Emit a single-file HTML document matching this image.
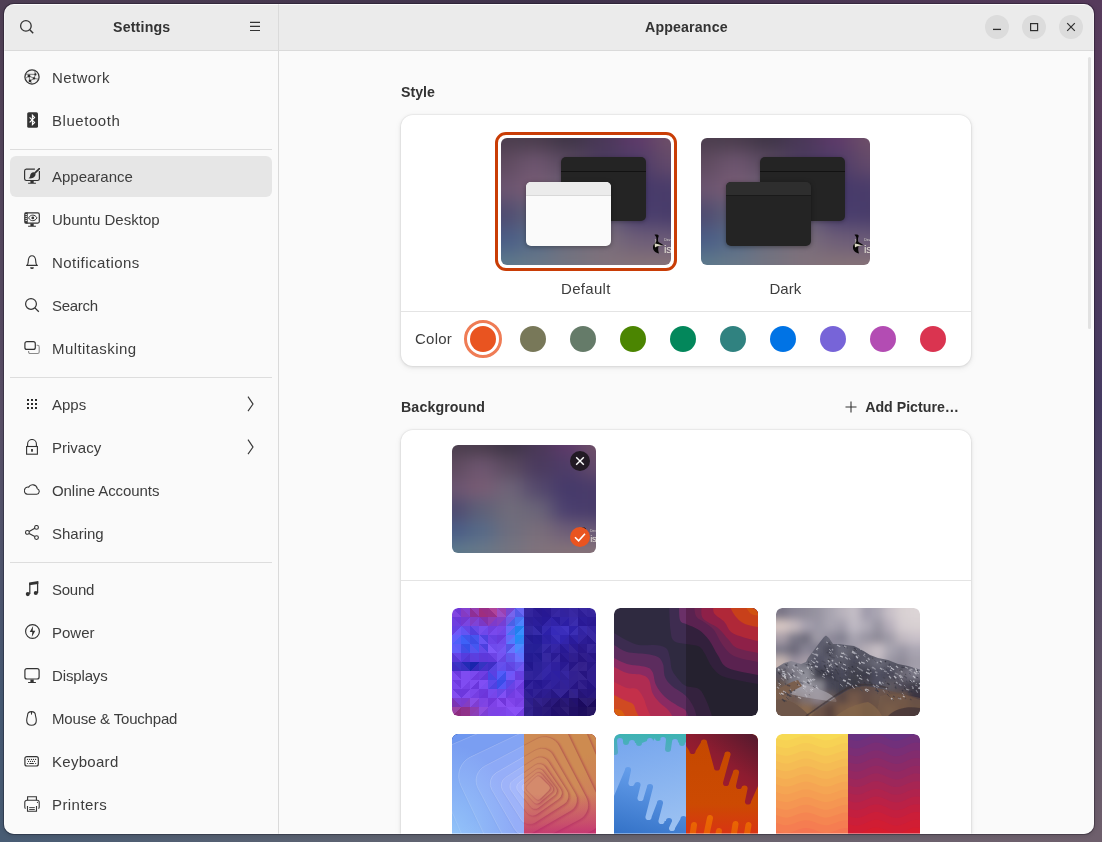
<!DOCTYPE html>
<html><head><meta charset="utf-8">
<style>
*{box-sizing:border-box;margin:0;padding:0}
html,body{width:1102px;height:842px;overflow:hidden}
body{position:relative;font-family:"Liberation Sans",sans-serif;color:#3d3d3d;background:#50465e}
.a{position:absolute}
.shadow{position:absolute;left:4px;top:4px;width:1090px;height:830px;border-radius:10px;box-shadow:0 0 0 1px rgba(10,5,20,0.3),0 1px 4px 1px rgba(0,0,0,0.12)}
.hi{position:absolute;left:4px;top:4px;width:1090px;height:830px;border-radius:10px;box-shadow:inset 0 0 0 1px rgba(255,255,255,0.38)}
.win{will-change:transform;position:absolute;left:0;top:0;width:1102px;height:842px;clip-path:inset(4px 8px 8px 4px round 10px);background:#fafafa}
.hdr{left:4px;top:4px;width:1090px;height:46px;background:#ebebeb}
.hline{left:4px;top:50px;width:1090px;height:1px;background:#dadada}
.vline{left:278px;top:4px;width:1px;height:830px;background:#dadada}
.toplight{left:4px;top:4px;width:1090px;height:1px;background:rgba(255,255,255,0.8)}
.title{font-weight:bold;font-size:14.2px;line-height:20px;white-space:nowrap;color:#333}
.item{left:52px;font-size:15px;line-height:20px;white-space:nowrap;color:#3d3d3d}
.ico{position:absolute;left:24px;width:16px;height:16px}
.sep{left:10px;width:262px;height:1px;background:#dddddd}
.sel{left:10px;top:156px;width:262px;height:41px;border-radius:6px;background:#e6e6e6}
.wbtn{position:absolute;width:24px;height:24px;border-radius:12px;background:#dcdcdc;top:15px}
.card{position:absolute;left:401px;width:570px;background:#fff;border-radius:12px;box-shadow:0 0 0 1px rgba(0,0,6,0.03),0 1px 3px 1px rgba(0,0,6,0.07),0 2px 6px 2px rgba(0,0,6,0.03)}
.dot{position:absolute;width:26px;height:26px;border-radius:13px;top:326px}
.thumb{position:absolute;width:144px;height:108px;border-radius:6px;overflow:hidden;clip-path:inset(0 round 6px)}
.mini{position:absolute;width:85px;height:64px;border-radius:5px;overflow:hidden}
.lbl{position:absolute;font-size:15px;line-height:20px;white-space:nowrap;color:#3d3d3d}
</style></head>
<body>
<!--WPSYM-->

  <!--/WPSYM-->
<div class="a" style="left:0;top:0;width:1102px;height:12px;background:linear-gradient(90deg,#4f3f55 0%,#40334c 50%,#563b5c 100%)"></div>
<div class="a" style="left:0;top:0;width:12px;height:842px;background:linear-gradient(180deg,#4f3f55 0%,#574b63 40%,#5a5068 50%,#465a74 83%,#485c74 100%)"></div>
<div class="a" style="left:1090px;top:0;width:12px;height:842px;background:linear-gradient(180deg,#563b5c 0%,#5a3d5e 12%,#453a62 48%,#625468 83%,#6e5f6c 100%)"></div>
<div class="a" style="left:0;top:830px;width:1102px;height:12px;background:linear-gradient(90deg,#485c74 0%,#686670 50%,#6e5f6c 100%)"></div>
<div class="shadow"></div>
<div class="win">
  <div class="a hdr"></div>
  <div class="a toplight"></div>
  <div class="a hline"></div>
  <div class="a vline"></div>

  <!-- sidebar header -->
  <svg class="a" style="left:18px;top:18px" width="18" height="18" viewBox="0 0 18 18"><circle cx="7.9" cy="7.9" r="5.3" fill="none" stroke="#333" stroke-width="1.3"/><path d="M11.8 11.8 L15.2 15.2" stroke="#333" stroke-width="1.5"/></svg>
  <div class="a title" style="left:113px;top:17px;letter-spacing:0.18px">Settings</div>
  <svg class="a" style="left:248px;top:20px" width="14" height="14" viewBox="0 0 14 14"><path d="M2 2.4h10M2 6.4h10M2 10.5h10" stroke="#333" stroke-width="1.2"/></svg>

  <!-- content header -->
  <div class="a title" style="left:645px;top:17px;letter-spacing:0.15px">Appearance</div>
  <div class="wbtn" style="left:985px"></div>
  <div class="wbtn" style="left:1022px"></div>
  <div class="wbtn" style="left:1059px"></div>
  <svg class="a" style="left:985px;top:15px" width="24" height="24"><path d="M8 14.4h8" stroke="#2e2e2e" stroke-width="1.3"/></svg>
  <svg class="a" style="left:1022px;top:15px" width="24" height="24"><rect x="8.6" y="8.6" width="7" height="7" fill="none" stroke="#2e2e2e" stroke-width="1.2"/></svg>
  <svg class="a" style="left:1059px;top:15px" width="24" height="24"><path d="M8.2 8.2L15.8 15.8M15.8 8.2L8.2 15.8" stroke="#2e2e2e" stroke-width="1.2"/></svg>

  <!-- SIDEBAR -->
  <div class="a sel"></div>
  <div class="a sep" style="top:149px"></div>
  <div class="a sep" style="top:377px"></div>
  <div class="a sep" style="top:562px"></div>
  <!--ITEMS-->
  <svg class="ico" style="top:69px" width="16" height="16" viewBox="0 0 16 16"><circle cx="8" cy="7.9" r="7.1" fill="#f0f0f0" stroke="#333" stroke-width="1.25"/><path d="M1.2 5.2 L11.4 5.4 M4.9 6.9 L10 9.4 L11.4 5.4 M4.9 6.9 L6 11.9 L10 9.4 M6 11.9 L8 14.8 M11.4 5.4 L10.6 1.2 M10 9.4 L14.6 10.2 M4.9 6.9 L1.4 9.6" stroke="#5a5a5a" stroke-width="0.8" fill="none"/><rect x="3.7" y="5.7" width="2.5" height="2.5" fill="#2a2a2a"/><rect x="4.8" y="10.7" width="2.4" height="2.4" fill="#2a2a2a"/><rect x="8.9" y="8.4" width="2.2" height="2" fill="#2a2a2a"/><circle cx="11.4" cy="5.4" r="1.1" fill="#2a2a2a"/></svg>
  <div class="a item" style="top:68px;letter-spacing:0.4px">Network</div>
  <svg class="ico" style="top:112px" width="16" height="16" viewBox="0 0 16 16"><rect x="3.2" y="0.2" width="10.8" height="15.6" rx="1.6" fill="#333"/><path d="M5.6 5.4 L10.6 10.4 L8.4 12.6 V3.2 L10.6 5.4 L5.6 10.4" stroke="#fff" stroke-width="1.1" fill="none"/></svg>
  <div class="a item" style="top:111px;letter-spacing:0.55px">Bluetooth</div>
  <svg class="ico" style="top:168px" width="16" height="16" viewBox="0 0 16 16"><path d="M10.9 1.2 H2.3 A1.8 1.8 0 0 0 0.6 3 V10.8 A1.8 1.8 0 0 0 2.3 12.5 H13.6 A1.8 1.8 0 0 0 15.4 10.8 V3" stroke="#333" stroke-width="1.2" fill="none"/><path d="M6.4 12.5 H9.7 V14.8 H6.4Z M4.1 14.8 H11.9 V15.8 H4.1Z" fill="#333"/><path d="M15.5 0.5 L11.3 4.7" stroke="#333" stroke-width="1.7" stroke-linecap="round"/><path d="M10.7 4.5 C8.6 3.5 6.3 5.1 6.2 7.3 C6.1 8.8 5.7 9.6 4.4 10.3 C7.4 10.9 10.3 9.6 11.2 7.8 C11.8 6.6 11.7 5.2 10.7 4.5 Z" fill="#333"/></svg>
  <div class="a item" style="top:167px">Appearance</div>
  <svg class="ico" style="top:211px" width="16" height="16" viewBox="0 0 16 16"><rect x="0.9" y="1.9" width="14.4" height="10.2" rx="1.5" fill="none" stroke="#333" stroke-width="1.2"/><rect x="0.6" y="1.6" width="3.1" height="10.8" fill="#333"/><path d="M1.4 3.6h1.6M1.4 5.6h1.6M1.4 7.6h1.6M1.4 9.6h1.6" stroke="#fafafa" stroke-width="0.9"/><path d="M4.6 6.9 C6.5 3.2 11 3.2 13 6.9 C11 10.6 6.5 10.6 4.6 6.9Z" fill="none" stroke="#333" stroke-width="1"/><circle cx="8.8" cy="6.9" r="1.4" fill="#333"/><path d="M6.4 12.4 H9.7 V14.9 H6.4Z M4.1 14.8 H11.9 V15.8 H4.1Z" fill="#333"/></svg>
  <div class="a item" style="top:210px">Ubuntu Desktop</div>
  <svg class="ico" style="top:254px" width="16" height="16" viewBox="0 0 16 16"><path d="M2.6 11.4 C3.9 10.8 4.2 9.5 4.3 7 C4.5 3.4 5.6 1.7 8 1.7 C10.4 1.7 11.5 3.4 11.7 7 C11.8 9.5 12.1 10.8 13.4 11.4 Z" fill="none" stroke="#333" stroke-width="1.1" stroke-linejoin="round"/><path d="M6.1 13.2 H9.9 A1.9 1.9 0 0 1 6.1 13.2Z" fill="#333"/></svg>
  <div class="a item" style="top:253px;letter-spacing:0.47px">Notifications</div>
  <svg class="ico" style="top:297px" width="16" height="16" viewBox="0 0 16 16"><circle cx="7" cy="6.95" r="5.4" fill="none" stroke="#333" stroke-width="1.2"/><path d="M10.9 10.9 L14.8 14.8" stroke="#333" stroke-width="1.3"/></svg>
  <div class="a item" style="top:296px;letter-spacing:-0.3px">Search</div>
  <svg class="ico" style="top:340px" width="16" height="16" viewBox="0 0 16 16"><rect x="0.9" y="1.7" width="10.4" height="7.7" rx="2" fill="none" stroke="#333" stroke-width="1.2"/><path d="M12.6 5.3 H13.6 A1.6 1.6 0 0 1 15.2 6.9 V11.9 A1.6 1.6 0 0 1 13.6 13.5 H6.2 A1.6 1.6 0 0 1 4.6 11.9 V11" fill="none" stroke="#8a8a8a" stroke-width="1.1"/></svg>
  <div class="a item" style="top:339px;letter-spacing:0.44px">Multitasking</div>
  <svg class="ico" style="top:396px" width="16" height="16" viewBox="0 0 16 16"><path d="M3 3h2v2h-2zM7 3h2v2h-2zM11 3h2v2h-2zM3 7h2v2h-2zM7 7h2v2h-2zM11 7h2v2h-2zM3 11h2v2h-2zM7 11h2v2h-2zM11 11h2v2h-2z" fill="#2a2a2a"/></svg>
  <div class="a item" style="top:395px">Apps</div>
  <svg class="a" style="left:246px;top:396px" width="10" height="17" viewBox="0 0 10 17"><path d="M2 0.6 L7 8.1 L2 15.2" fill="none" stroke="#3a3a3a" stroke-width="1.15"/></svg>
  <svg class="ico" style="top:439px" width="16" height="16" viewBox="0 0 16 16"><rect x="2.6" y="7.5" width="10.8" height="7.7" fill="none" stroke="#333" stroke-width="1.1"/><path d="M3.6 7.5 V4.9 A4.4 4.4 0 0 1 12.4 4.9 V7.5" fill="none" stroke="#333" stroke-width="1.1"/><rect x="7.1" y="10" width="1.8" height="2.7" fill="#333"/></svg>
  <div class="a item" style="top:438px">Privacy</div>
  <svg class="a" style="left:246px;top:439px" width="10" height="17" viewBox="0 0 10 17"><path d="M2 0.6 L7 8.1 L2 15.2" fill="none" stroke="#3a3a3a" stroke-width="1.15"/></svg>
  <svg class="ico" style="top:482px" width="16" height="16" viewBox="0 0 16 16"><path d="M3.4 12.3 H12.7 A2.9 2.9 0 0 0 13.3 6.7 A4.7 4.7 0 0 0 4.6 5.1 A3.6 3.6 0 0 0 3.4 12.3 Z" fill="none" stroke="#333" stroke-width="1.1" stroke-linejoin="round"/></svg>
  <div class="a item" style="top:481px;letter-spacing:-0.07px">Online Accounts</div>
  <svg class="ico" style="top:525px" width="16" height="16" viewBox="0 0 16 16"><circle cx="12.5" cy="2.4" r="1.9" fill="none" stroke="#333" stroke-width="1.1"/><circle cx="3.4" cy="7.4" r="1.9" fill="none" stroke="#333" stroke-width="1.1"/><circle cx="12.5" cy="12.6" r="1.9" fill="none" stroke="#333" stroke-width="1.1"/><path d="M5.1 6.5 L10.8 3.3 M5.1 8.4 L10.8 11.6" stroke="#333" stroke-width="1.1"/></svg>
  <div class="a item" style="top:524px">Sharing</div>
  <svg class="ico" style="top:581px" width="16" height="16" viewBox="0 0 16 16"><path d="M5.1 1.4 L14.3 0.1 V3 L5.1 4.3 Z" fill="#333"/><path d="M5.8 2 V13 M13.6 0.8 V12" stroke="#333" stroke-width="1.25"/><circle cx="3.8" cy="13.1" r="2.05" fill="#333"/><circle cx="11.8" cy="12" r="2.05" fill="#333"/></svg>
  <div class="a item" style="top:580px;letter-spacing:-0.25px">Sound</div>
  <svg class="ico" style="top:624px" width="16" height="16" viewBox="0 0 16 16"><circle cx="8.5" cy="7.5" r="6.9" fill="none" stroke="#333" stroke-width="1.15"/><path d="M9.1 2.1 L5.7 8.1 H8.3 L7.8 12.9 L11.3 6.7 H8.7 Z" fill="#333"/></svg>
  <div class="a item" style="top:623px">Power</div>
  <svg class="ico" style="top:667px" width="16" height="16" viewBox="0 0 16 16"><rect x="0.9" y="1.7" width="14.2" height="10.3" rx="2" fill="none" stroke="#333" stroke-width="1.2"/><path d="M6.4 12.4 H9.7 V15 H6.4Z M4.1 14.9 H11.9 V15.9 H4.1Z" fill="#333"/></svg>
  <div class="a item" style="top:666px;letter-spacing:-0.14px">Displays</div>
  <svg class="ico" style="top:710px" width="16" height="16" viewBox="0 0 16 16"><path d="M7.5 1.6 C4.8 1.6 3.7 2.8 3.6 5 C3.5 6.6 2.7 8 2.7 10.5 C2.7 13.5 4.8 15.2 7.5 15.2 C10.2 15.2 12.3 13.5 12.3 10.5 C12.3 8 11.5 6.6 11.4 5 C11.3 2.8 10.2 1.6 7.5 1.6 Z" fill="none" stroke="#333" stroke-width="1.1"/><path d="M7.5 1.6 V4.6" stroke="#333" stroke-width="1.1"/></svg>
  <div class="a item" style="top:709px;letter-spacing:-0.18px">Mouse &amp; Touchpad</div>
  <svg class="ico" style="top:753px" width="16" height="16" viewBox="0 0 16 16"><rect x="0.9" y="3.6" width="13.4" height="9.4" rx="2" fill="none" stroke="#333" stroke-width="1.2"/><g fill="#333"><circle cx="3.5" cy="6.4" r="0.6"/><circle cx="5.5" cy="6.4" r="0.6"/><circle cx="7.5" cy="6.4" r="0.6"/><circle cx="9.5" cy="6.4" r="0.6"/><circle cx="11.6" cy="6.4" r="0.6"/><circle cx="4.5" cy="8.4" r="0.6"/><circle cx="6.5" cy="8.4" r="0.6"/><circle cx="8.5" cy="8.4" r="0.6"/><circle cx="10.5" cy="8.4" r="0.6"/><circle cx="3.5" cy="10.5" r="0.6"/><circle cx="11.6" cy="10.5" r="0.6"/><rect x="5.2" y="9.9" width="4.8" height="1.2" rx="0.6"/></g></svg>
  <div class="a item" style="top:752px;letter-spacing:0.29px">Keyboard</div>
  <svg class="ico" style="top:796px" width="16" height="16" viewBox="0 0 16 16"><path d="M3.6 4.3 V0.8 H12.4 V4.3" fill="none" stroke="#333" stroke-width="1.1"/><path d="M1.5 12.6 C1 12.1 0.8 11.5 0.8 10.9 V6.3 A2 2 0 0 1 2.8 4.3 H13.2 A2 2 0 0 1 15.2 6.3 V10.9 C15.2 11.5 15 12.1 14.5 12.6" fill="none" stroke="#333" stroke-width="1.1"/><path d="M3.5 10 V15.3 H12.5 V10" fill="none" stroke="#333" stroke-width="1.1"/><path d="M5.2 11.6 H10.8 M5.2 13.5 H10.8" stroke="#333" stroke-width="0.9"/><circle cx="13.4" cy="6.4" r="0.55" fill="#333"/></svg>
  <div class="a item" style="top:795px;letter-spacing:0.43px">Printers</div>
  <!--/ITEMS-->

  <!-- scrollbar -->
  <div class="a" style="left:1088px;top:57px;width:3px;height:272px;border-radius:2px;background:#e2e2e2"></div>

  <!-- CONTENT -->
  <div class="a title" style="left:401px;top:82px">Style</div>
  <div class="card" style="top:115px;height:251px"></div>
  <!--STYLE-->
  <div class="a" style="left:495px;top:132px;width:182px;height:139px;border:3px solid #c93d06;border-radius:11px"></div>
  <div class="a" style="left:501px;top:138px;width:170px;height:127px;border-radius:6px;overflow:hidden"><svg class="a" style="left:0;top:0" width="170" height="127" viewBox="0 0 100 100" preserveAspectRatio="none"><defs><filter id="wpf_s1" x="-50%" y="-50%" width="200%" height="200%" color-interpolation-filters="sRGB"><feGaussianBlur stdDeviation="7"/></filter></defs><g filter="url(#wpf_s1)"><rect x="-50" y="-50" width="20.5" height="20.5" fill="#4b3e4e"/><rect x="-30" y="-50" width="20.5" height="20.5" fill="#4b3e4e"/><rect x="-10" y="-50" width="20.5" height="20.5" fill="#4b3e4e"/><rect x="10" y="-50" width="20.5" height="20.5" fill="#4a3c4c"/><rect x="30" y="-50" width="20.5" height="20.5" fill="#3e3446"/><rect x="50" y="-50" width="20.5" height="20.5" fill="#4a3858"/><rect x="70" y="-50" width="20.5" height="20.5" fill="#5e3a6a"/><rect x="90" y="-50" width="20.5" height="20.5" fill="#6e5068"/><rect x="110" y="-50" width="20.5" height="20.5" fill="#6e5068"/><rect x="130" y="-50" width="20.5" height="20.5" fill="#6e5068"/><rect x="-50" y="-30" width="20.5" height="20.5" fill="#4b3e4e"/><rect x="-30" y="-30" width="20.5" height="20.5" fill="#4b3e4e"/><rect x="-10" y="-30" width="20.5" height="20.5" fill="#4b3e4e"/><rect x="10" y="-30" width="20.5" height="20.5" fill="#4a3c4c"/><rect x="30" y="-30" width="20.5" height="20.5" fill="#3e3446"/><rect x="50" y="-30" width="20.5" height="20.5" fill="#4a3858"/><rect x="70" y="-30" width="20.5" height="20.5" fill="#5e3a6a"/><rect x="90" y="-30" width="20.5" height="20.5" fill="#6e5068"/><rect x="110" y="-30" width="20.5" height="20.5" fill="#6e5068"/><rect x="130" y="-30" width="20.5" height="20.5" fill="#6e5068"/><rect x="-50" y="-10" width="20.5" height="20.5" fill="#4b3e4e"/><rect x="-30" y="-10" width="20.5" height="20.5" fill="#4b3e4e"/><rect x="-10" y="-10" width="20.5" height="20.5" fill="#4b3e4e"/><rect x="10" y="-10" width="20.5" height="20.5" fill="#4a3c4c"/><rect x="30" y="-10" width="20.5" height="20.5" fill="#3e3446"/><rect x="50" y="-10" width="20.5" height="20.5" fill="#4a3858"/><rect x="70" y="-10" width="20.5" height="20.5" fill="#5e3a6a"/><rect x="90" y="-10" width="20.5" height="20.5" fill="#6e5068"/><rect x="110" y="-10" width="20.5" height="20.5" fill="#6e5068"/><rect x="130" y="-10" width="20.5" height="20.5" fill="#6e5068"/><rect x="-50" y="10" width="20.5" height="20.5" fill="#5e4a5e"/><rect x="-30" y="10" width="20.5" height="20.5" fill="#5e4a5e"/><rect x="-10" y="10" width="20.5" height="20.5" fill="#5e4a5e"/><rect x="10" y="10" width="20.5" height="20.5" fill="#6e5670"/><rect x="30" y="10" width="20.5" height="20.5" fill="#5a4a60"/><rect x="50" y="10" width="20.5" height="20.5" fill="#4a3a5e"/><rect x="70" y="10" width="20.5" height="20.5" fill="#4e3c68"/><rect x="90" y="10" width="20.5" height="20.5" fill="#644a6a"/><rect x="110" y="10" width="20.5" height="20.5" fill="#644a6a"/><rect x="130" y="10" width="20.5" height="20.5" fill="#644a6a"/><rect x="-50" y="30" width="20.5" height="20.5" fill="#6a5470"/><rect x="-30" y="30" width="20.5" height="20.5" fill="#6a5470"/><rect x="-10" y="30" width="20.5" height="20.5" fill="#6a5470"/><rect x="10" y="30" width="20.5" height="20.5" fill="#785c74"/><rect x="30" y="30" width="20.5" height="20.5" fill="#6e6478"/><rect x="50" y="30" width="20.5" height="20.5" fill="#54486c"/><rect x="70" y="30" width="20.5" height="20.5" fill="#45396a"/><rect x="90" y="30" width="20.5" height="20.5" fill="#4a3c6a"/><rect x="110" y="30" width="20.5" height="20.5" fill="#4a3c6a"/><rect x="130" y="30" width="20.5" height="20.5" fill="#4a3c6a"/><rect x="-50" y="50" width="20.5" height="20.5" fill="#4e4a70"/><rect x="-30" y="50" width="20.5" height="20.5" fill="#4e4a70"/><rect x="-10" y="50" width="20.5" height="20.5" fill="#4e4a70"/><rect x="10" y="50" width="20.5" height="20.5" fill="#5e6078"/><rect x="30" y="50" width="20.5" height="20.5" fill="#706c7a"/><rect x="50" y="50" width="20.5" height="20.5" fill="#6a6478"/><rect x="70" y="50" width="20.5" height="20.5" fill="#4a3e6e"/><rect x="90" y="50" width="20.5" height="20.5" fill="#483c6a"/><rect x="110" y="50" width="20.5" height="20.5" fill="#483c6a"/><rect x="130" y="50" width="20.5" height="20.5" fill="#483c6a"/><rect x="-50" y="70" width="20.5" height="20.5" fill="#4a5c86"/><rect x="-30" y="70" width="20.5" height="20.5" fill="#4a5c86"/><rect x="-10" y="70" width="20.5" height="20.5" fill="#4a5c86"/><rect x="10" y="70" width="20.5" height="20.5" fill="#566a88"/><rect x="30" y="70" width="20.5" height="20.5" fill="#6e6e7e"/><rect x="50" y="70" width="20.5" height="20.5" fill="#7a6e7a"/><rect x="70" y="70" width="20.5" height="20.5" fill="#6e5e78"/><rect x="90" y="70" width="20.5" height="20.5" fill="#6a5a78"/><rect x="110" y="70" width="20.5" height="20.5" fill="#6a5a78"/><rect x="130" y="70" width="20.5" height="20.5" fill="#6a5a78"/><rect x="-50" y="90" width="20.5" height="20.5" fill="#5c7a8c"/><rect x="-30" y="90" width="20.5" height="20.5" fill="#5c7a8c"/><rect x="-10" y="90" width="20.5" height="20.5" fill="#5c7a8c"/><rect x="10" y="90" width="20.5" height="20.5" fill="#687888"/><rect x="30" y="90" width="20.5" height="20.5" fill="#747480"/><rect x="50" y="90" width="20.5" height="20.5" fill="#80727c"/><rect x="70" y="90" width="20.5" height="20.5" fill="#847278"/><rect x="90" y="90" width="20.5" height="20.5" fill="#867278"/><rect x="110" y="90" width="20.5" height="20.5" fill="#867278"/><rect x="130" y="90" width="20.5" height="20.5" fill="#867278"/><rect x="-50" y="110" width="20.5" height="20.5" fill="#5c7a8c"/><rect x="-30" y="110" width="20.5" height="20.5" fill="#5c7a8c"/><rect x="-10" y="110" width="20.5" height="20.5" fill="#5c7a8c"/><rect x="10" y="110" width="20.5" height="20.5" fill="#687888"/><rect x="30" y="110" width="20.5" height="20.5" fill="#747480"/><rect x="50" y="110" width="20.5" height="20.5" fill="#80727c"/><rect x="70" y="110" width="20.5" height="20.5" fill="#847278"/><rect x="90" y="110" width="20.5" height="20.5" fill="#867278"/><rect x="110" y="110" width="20.5" height="20.5" fill="#867278"/><rect x="130" y="110" width="20.5" height="20.5" fill="#867278"/><rect x="-50" y="130" width="20.5" height="20.5" fill="#5c7a8c"/><rect x="-30" y="130" width="20.5" height="20.5" fill="#5c7a8c"/><rect x="-10" y="130" width="20.5" height="20.5" fill="#5c7a8c"/><rect x="10" y="130" width="20.5" height="20.5" fill="#687888"/><rect x="30" y="130" width="20.5" height="20.5" fill="#747480"/><rect x="50" y="130" width="20.5" height="20.5" fill="#80727c"/><rect x="70" y="130" width="20.5" height="20.5" fill="#847278"/><rect x="90" y="130" width="20.5" height="20.5" fill="#867278"/><rect x="110" y="130" width="20.5" height="20.5" fill="#867278"/><rect x="130" y="130" width="20.5" height="20.5" fill="#867278"/></g></svg>
    <div class="mini" style="left:60px;top:19px;background:#242424;box-shadow:0 1px 4px rgba(0,0,0,0.3)"><div class="a" style="left:0;top:14px;width:85px;height:1px;background:#121212"></div></div>
    <div class="mini" style="left:25px;top:44px;background:#fafafa;box-shadow:0 1px 5px rgba(0,0,0,0.35)"><div class="a" style="left:0;top:0;width:85px;height:14px;background:#ebebeb;border-bottom:1px solid #d8d8d8"></div></div>
    <svg class="a" style="left:151px;top:96px;overflow:visible" width="12.0" height="19.0" viewBox="0 0 12 19"><path d="M2 10 C-0.6 14 2 19 7 19.5 C6 16.5 5.8 13.5 7 11.2 L12 11.6 C10 10 8 9 6.4 8 C5.6 6 6 3.5 6.8 1.8 C6 0.2 3.8 0.4 2.4 0.8 C4.2 2 4.8 4.5 4.4 7 C3.9 8.4 2.8 9.2 2 10 Z" fill="#0a0808"/><path d="M2.6 9.2 C4.5 9.6 7.5 10.6 12 11.6 C8 11.6 5 12.2 3 13.6 Z" fill="#dcd8c4"/><path d="M3.2 5 C3.8 6 3.8 7.5 3.4 8.6" stroke="#c8c4b4" stroke-width="0.7" fill="none"/></svg><div class="a" style="left:163.0px;top:105.6px;font-size:11.0px;line-height:11.0px;color:#e4e0d6;letter-spacing:-0.3px">is</div><div class="a" style="left:163.2px;top:99.8px;font-size:3.6px;line-height:4.0px;color:#d8d4cc">Dev</div>
  </div>
  <div class="a" style="left:701px;top:138px;width:169px;height:127px;border-radius:6px;overflow:hidden"><svg class="a" style="left:0;top:0" width="169" height="127" viewBox="0 0 100 100" preserveAspectRatio="none"><defs><filter id="wpf_s2" x="-50%" y="-50%" width="200%" height="200%" color-interpolation-filters="sRGB"><feGaussianBlur stdDeviation="7"/></filter></defs><g filter="url(#wpf_s2)"><rect x="-50" y="-50" width="20.5" height="20.5" fill="#4b3e4e"/><rect x="-30" y="-50" width="20.5" height="20.5" fill="#4b3e4e"/><rect x="-10" y="-50" width="20.5" height="20.5" fill="#4b3e4e"/><rect x="10" y="-50" width="20.5" height="20.5" fill="#4a3c4c"/><rect x="30" y="-50" width="20.5" height="20.5" fill="#3e3446"/><rect x="50" y="-50" width="20.5" height="20.5" fill="#4a3858"/><rect x="70" y="-50" width="20.5" height="20.5" fill="#5e3a6a"/><rect x="90" y="-50" width="20.5" height="20.5" fill="#6e5068"/><rect x="110" y="-50" width="20.5" height="20.5" fill="#6e5068"/><rect x="130" y="-50" width="20.5" height="20.5" fill="#6e5068"/><rect x="-50" y="-30" width="20.5" height="20.5" fill="#4b3e4e"/><rect x="-30" y="-30" width="20.5" height="20.5" fill="#4b3e4e"/><rect x="-10" y="-30" width="20.5" height="20.5" fill="#4b3e4e"/><rect x="10" y="-30" width="20.5" height="20.5" fill="#4a3c4c"/><rect x="30" y="-30" width="20.5" height="20.5" fill="#3e3446"/><rect x="50" y="-30" width="20.5" height="20.5" fill="#4a3858"/><rect x="70" y="-30" width="20.5" height="20.5" fill="#5e3a6a"/><rect x="90" y="-30" width="20.5" height="20.5" fill="#6e5068"/><rect x="110" y="-30" width="20.5" height="20.5" fill="#6e5068"/><rect x="130" y="-30" width="20.5" height="20.5" fill="#6e5068"/><rect x="-50" y="-10" width="20.5" height="20.5" fill="#4b3e4e"/><rect x="-30" y="-10" width="20.5" height="20.5" fill="#4b3e4e"/><rect x="-10" y="-10" width="20.5" height="20.5" fill="#4b3e4e"/><rect x="10" y="-10" width="20.5" height="20.5" fill="#4a3c4c"/><rect x="30" y="-10" width="20.5" height="20.5" fill="#3e3446"/><rect x="50" y="-10" width="20.5" height="20.5" fill="#4a3858"/><rect x="70" y="-10" width="20.5" height="20.5" fill="#5e3a6a"/><rect x="90" y="-10" width="20.5" height="20.5" fill="#6e5068"/><rect x="110" y="-10" width="20.5" height="20.5" fill="#6e5068"/><rect x="130" y="-10" width="20.5" height="20.5" fill="#6e5068"/><rect x="-50" y="10" width="20.5" height="20.5" fill="#5e4a5e"/><rect x="-30" y="10" width="20.5" height="20.5" fill="#5e4a5e"/><rect x="-10" y="10" width="20.5" height="20.5" fill="#5e4a5e"/><rect x="10" y="10" width="20.5" height="20.5" fill="#6e5670"/><rect x="30" y="10" width="20.5" height="20.5" fill="#5a4a60"/><rect x="50" y="10" width="20.5" height="20.5" fill="#4a3a5e"/><rect x="70" y="10" width="20.5" height="20.5" fill="#4e3c68"/><rect x="90" y="10" width="20.5" height="20.5" fill="#644a6a"/><rect x="110" y="10" width="20.5" height="20.5" fill="#644a6a"/><rect x="130" y="10" width="20.5" height="20.5" fill="#644a6a"/><rect x="-50" y="30" width="20.5" height="20.5" fill="#6a5470"/><rect x="-30" y="30" width="20.5" height="20.5" fill="#6a5470"/><rect x="-10" y="30" width="20.5" height="20.5" fill="#6a5470"/><rect x="10" y="30" width="20.5" height="20.5" fill="#785c74"/><rect x="30" y="30" width="20.5" height="20.5" fill="#6e6478"/><rect x="50" y="30" width="20.5" height="20.5" fill="#54486c"/><rect x="70" y="30" width="20.5" height="20.5" fill="#45396a"/><rect x="90" y="30" width="20.5" height="20.5" fill="#4a3c6a"/><rect x="110" y="30" width="20.5" height="20.5" fill="#4a3c6a"/><rect x="130" y="30" width="20.5" height="20.5" fill="#4a3c6a"/><rect x="-50" y="50" width="20.5" height="20.5" fill="#4e4a70"/><rect x="-30" y="50" width="20.5" height="20.5" fill="#4e4a70"/><rect x="-10" y="50" width="20.5" height="20.5" fill="#4e4a70"/><rect x="10" y="50" width="20.5" height="20.5" fill="#5e6078"/><rect x="30" y="50" width="20.5" height="20.5" fill="#706c7a"/><rect x="50" y="50" width="20.5" height="20.5" fill="#6a6478"/><rect x="70" y="50" width="20.5" height="20.5" fill="#4a3e6e"/><rect x="90" y="50" width="20.5" height="20.5" fill="#483c6a"/><rect x="110" y="50" width="20.5" height="20.5" fill="#483c6a"/><rect x="130" y="50" width="20.5" height="20.5" fill="#483c6a"/><rect x="-50" y="70" width="20.5" height="20.5" fill="#4a5c86"/><rect x="-30" y="70" width="20.5" height="20.5" fill="#4a5c86"/><rect x="-10" y="70" width="20.5" height="20.5" fill="#4a5c86"/><rect x="10" y="70" width="20.5" height="20.5" fill="#566a88"/><rect x="30" y="70" width="20.5" height="20.5" fill="#6e6e7e"/><rect x="50" y="70" width="20.5" height="20.5" fill="#7a6e7a"/><rect x="70" y="70" width="20.5" height="20.5" fill="#6e5e78"/><rect x="90" y="70" width="20.5" height="20.5" fill="#6a5a78"/><rect x="110" y="70" width="20.5" height="20.5" fill="#6a5a78"/><rect x="130" y="70" width="20.5" height="20.5" fill="#6a5a78"/><rect x="-50" y="90" width="20.5" height="20.5" fill="#5c7a8c"/><rect x="-30" y="90" width="20.5" height="20.5" fill="#5c7a8c"/><rect x="-10" y="90" width="20.5" height="20.5" fill="#5c7a8c"/><rect x="10" y="90" width="20.5" height="20.5" fill="#687888"/><rect x="30" y="90" width="20.5" height="20.5" fill="#747480"/><rect x="50" y="90" width="20.5" height="20.5" fill="#80727c"/><rect x="70" y="90" width="20.5" height="20.5" fill="#847278"/><rect x="90" y="90" width="20.5" height="20.5" fill="#867278"/><rect x="110" y="90" width="20.5" height="20.5" fill="#867278"/><rect x="130" y="90" width="20.5" height="20.5" fill="#867278"/><rect x="-50" y="110" width="20.5" height="20.5" fill="#5c7a8c"/><rect x="-30" y="110" width="20.5" height="20.5" fill="#5c7a8c"/><rect x="-10" y="110" width="20.5" height="20.5" fill="#5c7a8c"/><rect x="10" y="110" width="20.5" height="20.5" fill="#687888"/><rect x="30" y="110" width="20.5" height="20.5" fill="#747480"/><rect x="50" y="110" width="20.5" height="20.5" fill="#80727c"/><rect x="70" y="110" width="20.5" height="20.5" fill="#847278"/><rect x="90" y="110" width="20.5" height="20.5" fill="#867278"/><rect x="110" y="110" width="20.5" height="20.5" fill="#867278"/><rect x="130" y="110" width="20.5" height="20.5" fill="#867278"/><rect x="-50" y="130" width="20.5" height="20.5" fill="#5c7a8c"/><rect x="-30" y="130" width="20.5" height="20.5" fill="#5c7a8c"/><rect x="-10" y="130" width="20.5" height="20.5" fill="#5c7a8c"/><rect x="10" y="130" width="20.5" height="20.5" fill="#687888"/><rect x="30" y="130" width="20.5" height="20.5" fill="#747480"/><rect x="50" y="130" width="20.5" height="20.5" fill="#80727c"/><rect x="70" y="130" width="20.5" height="20.5" fill="#847278"/><rect x="90" y="130" width="20.5" height="20.5" fill="#867278"/><rect x="110" y="130" width="20.5" height="20.5" fill="#867278"/><rect x="130" y="130" width="20.5" height="20.5" fill="#867278"/></g></svg>
    <div class="mini" style="left:59px;top:19px;background:#242424;box-shadow:0 1px 4px rgba(0,0,0,0.3)"><div class="a" style="left:0;top:14px;width:85px;height:1px;background:#121212"></div></div>
    <div class="mini" style="left:25px;top:44px;background:#242424;box-shadow:0 1px 5px rgba(0,0,0,0.4)"><div class="a" style="left:0;top:0;width:85px;height:14px;background:#2e2e2e;border-bottom:1px solid #1a1a1a"></div></div>
    <svg class="a" style="left:151px;top:96px;overflow:visible" width="12.0" height="19.0" viewBox="0 0 12 19"><path d="M2 10 C-0.6 14 2 19 7 19.5 C6 16.5 5.8 13.5 7 11.2 L12 11.6 C10 10 8 9 6.4 8 C5.6 6 6 3.5 6.8 1.8 C6 0.2 3.8 0.4 2.4 0.8 C4.2 2 4.8 4.5 4.4 7 C3.9 8.4 2.8 9.2 2 10 Z" fill="#0a0808"/><path d="M2.6 9.2 C4.5 9.6 7.5 10.6 12 11.6 C8 11.6 5 12.2 3 13.6 Z" fill="#dcd8c4"/><path d="M3.2 5 C3.8 6 3.8 7.5 3.4 8.6" stroke="#c8c4b4" stroke-width="0.7" fill="none"/></svg><div class="a" style="left:163.0px;top:105.6px;font-size:11.0px;line-height:11.0px;color:#e4e0d6;letter-spacing:-0.3px">is</div><div class="a" style="left:163.2px;top:99.8px;font-size:3.6px;line-height:4.0px;color:#d8d4cc">Dev</div>
  </div>
  <div class="lbl" style="left:561px;top:279px;letter-spacing:0.3px">Default</div>
  <div class="lbl" style="left:769.5px;top:279px">Dark</div>
  <div class="a" style="left:401px;top:311px;width:570px;height:1px;background:#e4e4e4"></div>
  <div class="lbl" style="left:415px;top:329px;letter-spacing:0.25px">Color</div>
  <div class="a" style="left:464px;top:320px;width:38px;height:38px;border-radius:19px;border:3px solid #ef7c55"></div>
  <div class="dot" style="left:470px;background:#e95420"></div>
  <div class="dot" style="left:520px;background:#787859"></div>
  <div class="dot" style="left:570px;background:#657b69"></div>
  <div class="dot" style="left:620px;background:#4b8501"></div>
  <div class="dot" style="left:670px;background:#03875b"></div>
  <div class="dot" style="left:720px;background:#308280"></div>
  <div class="dot" style="left:770px;background:#0073e5"></div>
  <div class="dot" style="left:820px;background:#7764d8"></div>
  <div class="dot" style="left:870px;background:#b34cb3"></div>
  <div class="dot" style="left:920px;background:#da3450"></div>

  <!--/STYLE-->

  <div class="a title" style="left:401px;top:397px;letter-spacing:0.12px">Background</div>
  <div class="card" style="top:430px;height:440px"></div>
  <!--BG-->
  <div class="a" style="left:843.5px;top:399.5px;width:14px;height:14px"><svg width="14" height="14" viewBox="0 0 14 14"><path d="M7 1.5V12.5M1.5 7H12.5" stroke="#333" stroke-width="1.1"/></svg></div>
  <div class="a title" style="left:865.2px;top:397px">Add Picture…</div>
  <div class="a" style="left:452px;top:445px;width:144px;height:108px;border-radius:6px;overflow:hidden"><svg class="a" style="left:0;top:0" width="144" height="108" viewBox="0 0 100 100" preserveAspectRatio="none"><defs><filter id="wpf_b1" x="-50%" y="-50%" width="200%" height="200%" color-interpolation-filters="sRGB"><feGaussianBlur stdDeviation="7"/></filter></defs><g filter="url(#wpf_b1)"><rect x="-50" y="-50" width="20.5" height="20.5" fill="#4b3e4e"/><rect x="-30" y="-50" width="20.5" height="20.5" fill="#4b3e4e"/><rect x="-10" y="-50" width="20.5" height="20.5" fill="#4b3e4e"/><rect x="10" y="-50" width="20.5" height="20.5" fill="#4a3c4c"/><rect x="30" y="-50" width="20.5" height="20.5" fill="#3e3446"/><rect x="50" y="-50" width="20.5" height="20.5" fill="#4a3858"/><rect x="70" y="-50" width="20.5" height="20.5" fill="#5e3a6a"/><rect x="90" y="-50" width="20.5" height="20.5" fill="#6e5068"/><rect x="110" y="-50" width="20.5" height="20.5" fill="#6e5068"/><rect x="130" y="-50" width="20.5" height="20.5" fill="#6e5068"/><rect x="-50" y="-30" width="20.5" height="20.5" fill="#4b3e4e"/><rect x="-30" y="-30" width="20.5" height="20.5" fill="#4b3e4e"/><rect x="-10" y="-30" width="20.5" height="20.5" fill="#4b3e4e"/><rect x="10" y="-30" width="20.5" height="20.5" fill="#4a3c4c"/><rect x="30" y="-30" width="20.5" height="20.5" fill="#3e3446"/><rect x="50" y="-30" width="20.5" height="20.5" fill="#4a3858"/><rect x="70" y="-30" width="20.5" height="20.5" fill="#5e3a6a"/><rect x="90" y="-30" width="20.5" height="20.5" fill="#6e5068"/><rect x="110" y="-30" width="20.5" height="20.5" fill="#6e5068"/><rect x="130" y="-30" width="20.5" height="20.5" fill="#6e5068"/><rect x="-50" y="-10" width="20.5" height="20.5" fill="#4b3e4e"/><rect x="-30" y="-10" width="20.5" height="20.5" fill="#4b3e4e"/><rect x="-10" y="-10" width="20.5" height="20.5" fill="#4b3e4e"/><rect x="10" y="-10" width="20.5" height="20.5" fill="#4a3c4c"/><rect x="30" y="-10" width="20.5" height="20.5" fill="#3e3446"/><rect x="50" y="-10" width="20.5" height="20.5" fill="#4a3858"/><rect x="70" y="-10" width="20.5" height="20.5" fill="#5e3a6a"/><rect x="90" y="-10" width="20.5" height="20.5" fill="#6e5068"/><rect x="110" y="-10" width="20.5" height="20.5" fill="#6e5068"/><rect x="130" y="-10" width="20.5" height="20.5" fill="#6e5068"/><rect x="-50" y="10" width="20.5" height="20.5" fill="#5e4a5e"/><rect x="-30" y="10" width="20.5" height="20.5" fill="#5e4a5e"/><rect x="-10" y="10" width="20.5" height="20.5" fill="#5e4a5e"/><rect x="10" y="10" width="20.5" height="20.5" fill="#6e5670"/><rect x="30" y="10" width="20.5" height="20.5" fill="#5a4a60"/><rect x="50" y="10" width="20.5" height="20.5" fill="#4a3a5e"/><rect x="70" y="10" width="20.5" height="20.5" fill="#4e3c68"/><rect x="90" y="10" width="20.5" height="20.5" fill="#644a6a"/><rect x="110" y="10" width="20.5" height="20.5" fill="#644a6a"/><rect x="130" y="10" width="20.5" height="20.5" fill="#644a6a"/><rect x="-50" y="30" width="20.5" height="20.5" fill="#6a5470"/><rect x="-30" y="30" width="20.5" height="20.5" fill="#6a5470"/><rect x="-10" y="30" width="20.5" height="20.5" fill="#6a5470"/><rect x="10" y="30" width="20.5" height="20.5" fill="#785c74"/><rect x="30" y="30" width="20.5" height="20.5" fill="#6e6478"/><rect x="50" y="30" width="20.5" height="20.5" fill="#54486c"/><rect x="70" y="30" width="20.5" height="20.5" fill="#45396a"/><rect x="90" y="30" width="20.5" height="20.5" fill="#4a3c6a"/><rect x="110" y="30" width="20.5" height="20.5" fill="#4a3c6a"/><rect x="130" y="30" width="20.5" height="20.5" fill="#4a3c6a"/><rect x="-50" y="50" width="20.5" height="20.5" fill="#4e4a70"/><rect x="-30" y="50" width="20.5" height="20.5" fill="#4e4a70"/><rect x="-10" y="50" width="20.5" height="20.5" fill="#4e4a70"/><rect x="10" y="50" width="20.5" height="20.5" fill="#5e6078"/><rect x="30" y="50" width="20.5" height="20.5" fill="#706c7a"/><rect x="50" y="50" width="20.5" height="20.5" fill="#6a6478"/><rect x="70" y="50" width="20.5" height="20.5" fill="#4a3e6e"/><rect x="90" y="50" width="20.5" height="20.5" fill="#483c6a"/><rect x="110" y="50" width="20.5" height="20.5" fill="#483c6a"/><rect x="130" y="50" width="20.5" height="20.5" fill="#483c6a"/><rect x="-50" y="70" width="20.5" height="20.5" fill="#4a5c86"/><rect x="-30" y="70" width="20.5" height="20.5" fill="#4a5c86"/><rect x="-10" y="70" width="20.5" height="20.5" fill="#4a5c86"/><rect x="10" y="70" width="20.5" height="20.5" fill="#566a88"/><rect x="30" y="70" width="20.5" height="20.5" fill="#6e6e7e"/><rect x="50" y="70" width="20.5" height="20.5" fill="#7a6e7a"/><rect x="70" y="70" width="20.5" height="20.5" fill="#6e5e78"/><rect x="90" y="70" width="20.5" height="20.5" fill="#6a5a78"/><rect x="110" y="70" width="20.5" height="20.5" fill="#6a5a78"/><rect x="130" y="70" width="20.5" height="20.5" fill="#6a5a78"/><rect x="-50" y="90" width="20.5" height="20.5" fill="#5c7a8c"/><rect x="-30" y="90" width="20.5" height="20.5" fill="#5c7a8c"/><rect x="-10" y="90" width="20.5" height="20.5" fill="#5c7a8c"/><rect x="10" y="90" width="20.5" height="20.5" fill="#687888"/><rect x="30" y="90" width="20.5" height="20.5" fill="#747480"/><rect x="50" y="90" width="20.5" height="20.5" fill="#80727c"/><rect x="70" y="90" width="20.5" height="20.5" fill="#847278"/><rect x="90" y="90" width="20.5" height="20.5" fill="#867278"/><rect x="110" y="90" width="20.5" height="20.5" fill="#867278"/><rect x="130" y="90" width="20.5" height="20.5" fill="#867278"/><rect x="-50" y="110" width="20.5" height="20.5" fill="#5c7a8c"/><rect x="-30" y="110" width="20.5" height="20.5" fill="#5c7a8c"/><rect x="-10" y="110" width="20.5" height="20.5" fill="#5c7a8c"/><rect x="10" y="110" width="20.5" height="20.5" fill="#687888"/><rect x="30" y="110" width="20.5" height="20.5" fill="#747480"/><rect x="50" y="110" width="20.5" height="20.5" fill="#80727c"/><rect x="70" y="110" width="20.5" height="20.5" fill="#847278"/><rect x="90" y="110" width="20.5" height="20.5" fill="#867278"/><rect x="110" y="110" width="20.5" height="20.5" fill="#867278"/><rect x="130" y="110" width="20.5" height="20.5" fill="#867278"/><rect x="-50" y="130" width="20.5" height="20.5" fill="#5c7a8c"/><rect x="-30" y="130" width="20.5" height="20.5" fill="#5c7a8c"/><rect x="-10" y="130" width="20.5" height="20.5" fill="#5c7a8c"/><rect x="10" y="130" width="20.5" height="20.5" fill="#687888"/><rect x="30" y="130" width="20.5" height="20.5" fill="#747480"/><rect x="50" y="130" width="20.5" height="20.5" fill="#80727c"/><rect x="70" y="130" width="20.5" height="20.5" fill="#847278"/><rect x="90" y="130" width="20.5" height="20.5" fill="#867278"/><rect x="110" y="130" width="20.5" height="20.5" fill="#867278"/><rect x="130" y="130" width="20.5" height="20.5" fill="#867278"/></g></svg>
    <svg class="a" style="left:128px;top:81.5px;overflow:visible" width="10.2" height="16.1" viewBox="0 0 12 19"><path d="M2 10 C-0.6 14 2 19 7 19.5 C6 16.5 5.8 13.5 7 11.2 L12 11.6 C10 10 8 9 6.4 8 C5.6 6 6 3.5 6.8 1.8 C6 0.2 3.8 0.4 2.4 0.8 C4.2 2 4.8 4.5 4.4 7 C3.9 8.4 2.8 9.2 2 10 Z" fill="#0a0808"/><path d="M2.6 9.2 C4.5 9.6 7.5 10.6 12 11.6 C8 11.6 5 12.2 3 13.6 Z" fill="#dcd8c4"/><path d="M3.2 5 C3.8 6 3.8 7.5 3.4 8.6" stroke="#c8c4b4" stroke-width="0.7" fill="none"/></svg><div class="a" style="left:138.2px;top:89.6px;font-size:9.3px;line-height:9.3px;color:#e4e0d6;letter-spacing:-0.3px">is</div><div class="a" style="left:138.3px;top:84.7px;font-size:3.0px;line-height:3.4px;color:#d8d4cc">Dev</div>
  </div>
  <div class="a" style="left:570px;top:451px;width:20px;height:20px;border-radius:10px;background:#221a24"><svg width="20" height="20" viewBox="0 0 20 20"><path d="M6.2 6.2L13.8 13.8M13.8 6.2L6.2 13.8" stroke="#fff" stroke-width="1.4"/></svg></div>
  <div class="a" style="left:570px;top:527px;width:20px;height:20px;border-radius:10px;background:#e95420"><svg width="20" height="20" viewBox="0 0 20 20"><path d="M5 10.2L8.6 13.8L15 6.8" fill="none" stroke="#fff" stroke-width="1.6"/></svg></div>
  <div class="a" style="left:401px;top:580px;width:570px;height:1px;background:#e4e4e4"></div>
  <!-- grid -->
  <div class="thumb" style="left:452px;top:608px" id="t1"></div>
  <div class="thumb" style="left:614px;top:608px" id="t2"></div>
  <div class="thumb" style="left:776px;top:608px" id="t3"></div>
  <div class="thumb" style="left:452px;top:734px" id="t4"></div>
  <div class="thumb" style="left:614px;top:734px" id="t5"></div>
  <div class="thumb" style="left:776px;top:734px" id="t6"></div>

  <!--/BG-->
  <!--THUMBS-->
  <svg class="thumb" style="left:452px;top:608px" width="144" height="108" viewBox="0 0 144 108"><g shape-rendering="crispEdges"><path d="M0 0h9v9z" fill="#7037d7"/><path d="M0 0v9h9z" fill="#8145e1"/><path d="M9 0h9v9z" fill="#8441d1"/><path d="M9 0v9h9z" fill="#853bc2"/><path d="M18 0h9v9z" fill="#953db1"/><path d="M18 0v9h9z" fill="#8f2f95"/><path d="M27 0h9v9z" fill="#992e87"/><path d="M27 0v9h9z" fill="#9e2e7f"/><path d="M36 0h9v9z" fill="#b0449a"/><path d="M36 0v9h9z" fill="#99308a"/><path d="M45 0h9v9z" fill="#9a41b1"/><path d="M45 0v9h9z" fill="#9c4dc5"/><path d="M54 0h9L54 9z" fill="#7747d0"/><path d="M63 0v9h-9z" fill="#7665ed"/><path d="M63 0h9v9z" fill="#6967f4"/><path d="M63 0v9h9z" fill="#545be7"/><path d="M0 9h9v9z" fill="#6c37d9"/><path d="M0 9v9h9z" fill="#6f3ee0"/><path d="M9 9h9L9 18z" fill="#7338d1"/><path d="M18 9v9h-9z" fill="#7a45e1"/><path d="M18 9h9L18 18z" fill="#823cc5"/><path d="M27 9v9h-9z" fill="#7f43d6"/><path d="M27 9h9v9z" fill="#8331ab"/><path d="M27 9v9h9z" fill="#7b38c5"/><path d="M36 9h9L36 18z" fill="#8f3cb4"/><path d="M45 9v9h-9z" fill="#7e3bca"/><path d="M45 9h9L45 18z" fill="#863fc5"/><path d="M54 9v9h-9z" fill="#743fd5"/><path d="M54 9h9L54 18z" fill="#705ae6"/><path d="M63 9v9h-9z" fill="#4b61e7"/><path d="M63 9h9L63 18z" fill="#4676f4"/><path d="M72 9v9h-9z" fill="#4d83ff"/><path d="M0 18h9L0 27z" fill="#6640e3"/><path d="M9 18v9h-9z" fill="#6f59f9"/><path d="M9 18h9v9z" fill="#6546e7"/><path d="M9 18v9h9z" fill="#6355f4"/><path d="M18 18h9v9z" fill="#6848e8"/><path d="M18 18v9h9z" fill="#543ede"/><path d="M27 18h9L27 27z" fill="#784dee"/><path d="M36 18v9h-9z" fill="#6f48eb"/><path d="M36 18h9L36 27z" fill="#703edf"/><path d="M45 18v9h-9z" fill="#7949ed"/><path d="M45 18h9L45 27z" fill="#7846e8"/><path d="M54 18v9h-9z" fill="#7046e8"/><path d="M54 18h9L54 27z" fill="#696afb"/><path d="M63 18v9h-9z" fill="#4574f4"/><path d="M63 18h9L63 27z" fill="#2280ee"/><path d="M72 18v9h-9z" fill="#398eff"/><path d="M0 27h9L0 36z" fill="#635ffc"/><path d="M9 27v9h-9z" fill="#5060f9"/><path d="M9 27h9v9z" fill="#4055ed"/><path d="M9 27v9h9z" fill="#3e61f7"/><path d="M18 27h9v9z" fill="#4655ef"/><path d="M18 27v9h9z" fill="#3d4de6"/><path d="M27 27h9v9z" fill="#4f41e0"/><path d="M27 27v9h9z" fill="#6854f4"/><path d="M36 27h9v9z" fill="#663fe2"/><path d="M36 27v9h9z" fill="#6c43e7"/><path d="M45 27h9L45 36z" fill="#673add"/><path d="M54 27v9h-9z" fill="#6f49ea"/><path d="M54 27h9L54 36z" fill="#656bfb"/><path d="M63 27v9h-9z" fill="#537cff"/><path d="M63 27h9L63 36z" fill="#248bf6"/><path d="M72 27v9h-9z" fill="#3384f7"/><path d="M0 36h9v9z" fill="#5d5df9"/><path d="M0 36v9h9z" fill="#615efb"/><path d="M9 36h9v9z" fill="#3650e8"/><path d="M9 36v9h9z" fill="#424ee8"/><path d="M18 36h9v9z" fill="#4457f0"/><path d="M18 36v9h9z" fill="#5654f0"/><path d="M27 36h9v9z" fill="#4c40df"/><path d="M27 36v9h9z" fill="#6448e9"/><path d="M36 36h9v9z" fill="#6f4bed"/><path d="M36 36v9h9z" fill="#7e58f9"/><path d="M45 36h9L45 45z" fill="#724eee"/><path d="M54 36v9h-9z" fill="#7457f4"/><path d="M54 36h9L54 45z" fill="#5653e6"/><path d="M63 36v9h-9z" fill="#6775ff"/><path d="M63 36h9L63 45z" fill="#4a8bff"/><path d="M72 36v9h-9z" fill="#537dff"/><path d="M0 45h9v9z" fill="#6644e7"/><path d="M0 45v9h9z" fill="#5837d7"/><path d="M9 45h9L9 54z" fill="#553dde"/><path d="M18 45v9h-9z" fill="#5236d5"/><path d="M18 45h9v9z" fill="#5a3fe0"/><path d="M18 45v9h9z" fill="#5d3ddd"/><path d="M27 45h9v9z" fill="#5d38db"/><path d="M27 45v9h9z" fill="#5f38d9"/><path d="M36 45h9v9z" fill="#6d44e6"/><path d="M36 45v9h9z" fill="#6039db"/><path d="M45 45h9L45 54z" fill="#7553f2"/><path d="M54 45v9h-9z" fill="#6545e3"/><path d="M54 45h9v9z" fill="#6557ee"/><path d="M54 45v9h9z" fill="#6058ed"/><path d="M63 45h9v9z" fill="#5f75ff"/><path d="M63 45v9h9z" fill="#6a6fff"/><path d="M0 54h9v9z" fill="#3c34c6"/><path d="M0 54v9h9z" fill="#3f2cc3"/><path d="M9 54h9v9z" fill="#222bb4"/><path d="M9 54v9h9z" fill="#392fc1"/><path d="M18 54h9L18 63z" fill="#1925ad"/><path d="M27 54v9h-9z" fill="#3529bc"/><path d="M27 54h9L27 63z" fill="#3534c2"/><path d="M36 54v9h-9z" fill="#4630c9"/><path d="M36 54h9L36 63z" fill="#3f2fc6"/><path d="M45 54v9h-9z" fill="#5744e1"/><path d="M45 54h9L45 63z" fill="#6650ed"/><path d="M54 54v9h-9z" fill="#614eed"/><path d="M54 54h9v9z" fill="#6248e5"/><path d="M54 54v9h9z" fill="#5d43e0"/><path d="M63 54h9L63 63z" fill="#6456ee"/><path d="M72 54v9h-9z" fill="#7257f3"/><path d="M0 63h9v9z" fill="#6d3adf"/><path d="M0 63v9h9z" fill="#7f4bf1"/><path d="M9 63h9L9 72z" fill="#7f4cf1"/><path d="M18 63v9h-9z" fill="#7f4bf1"/><path d="M18 63h9L18 72z" fill="#7b49ee"/><path d="M27 63v9h-9z" fill="#6e3ae0"/><path d="M27 63h9L27 72z" fill="#6f3ee3"/><path d="M36 63v9h-9z" fill="#6236db"/><path d="M36 63h9v9z" fill="#5a41e3"/><path d="M36 63v9h9z" fill="#4746e5"/><path d="M45 63h9L45 72z" fill="#535cfa"/><path d="M54 63v9h-9z" fill="#404feb"/><path d="M54 63h9L54 72z" fill="#6d58f9"/><path d="M63 63v9h-9z" fill="#7355f7"/><path d="M63 63h9v9z" fill="#6641e2"/><path d="M63 63v9h9z" fill="#6a3ee1"/><path d="M0 72h9v9z" fill="#6e39df"/><path d="M0 72v9h9z" fill="#7a46ec"/><path d="M9 72h9L9 81z" fill="#804cf2"/><path d="M18 72v9h-9z" fill="#7641e7"/><path d="M18 72h9L18 81z" fill="#7f4bf1"/><path d="M27 72v9h-9z" fill="#6a36dc"/><path d="M27 72h9L27 81z" fill="#804ef4"/><path d="M36 72v9h-9z" fill="#7a4cf1"/><path d="M36 72h9L36 81z" fill="#5d48ea"/><path d="M45 72v9h-9z" fill="#4f42e2"/><path d="M45 72h9L45 81z" fill="#3a4de8"/><path d="M54 72v9h-9z" fill="#5756f5"/><path d="M54 72h9L54 81z" fill="#5a46e7"/><path d="M63 72v9h-9z" fill="#6943e6"/><path d="M63 72h9L63 81z" fill="#794bef"/><path d="M72 72v9h-9z" fill="#6c3adf"/><path d="M0 81h9v9z" fill="#6c38dd"/><path d="M0 81v9h9z" fill="#834df0"/><path d="M9 81h9L9 90z" fill="#6d38dd"/><path d="M18 81v9h-9z" fill="#824bee"/><path d="M18 81h9L18 90z" fill="#7c47ec"/><path d="M27 81v9h-9z" fill="#753ee2"/><path d="M27 81h9L27 90z" fill="#6d38dd"/><path d="M36 81v9h-9z" fill="#6c35da"/><path d="M36 81h9L36 90z" fill="#7649ee"/><path d="M45 81v9h-9z" fill="#7746ea"/><path d="M45 81h9L45 90z" fill="#6746e8"/><path d="M54 81v9h-9z" fill="#8050f4"/><path d="M54 81h9L54 90z" fill="#6a3de1"/><path d="M63 81v9h-9z" fill="#733de2"/><path d="M63 81h9v9z" fill="#713ce1"/><path d="M63 81v9h9z" fill="#7c45eb"/><path d="M0 90h9v9z" fill="#7b3dd2"/><path d="M0 90v9h9z" fill="#7b33b4"/><path d="M9 90h9L9 99z" fill="#7b3bce"/><path d="M18 90v9h-9z" fill="#843dc1"/><path d="M18 90h9L18 99z" fill="#8a4de6"/><path d="M27 90v9h-9z" fill="#7f3ed2"/><path d="M27 90h9L27 99z" fill="#7d43e4"/><path d="M36 90v9h-9z" fill="#8044e4"/><path d="M36 90h9L36 99z" fill="#7136da"/><path d="M45 90v9h-9z" fill="#7e42e7"/><path d="M45 90h9v9z" fill="#7136db"/><path d="M45 90v9h9z" fill="#894df2"/><path d="M54 90h9v9z" fill="#7e43e9"/><path d="M54 90v9h9z" fill="#864af0"/><path d="M63 90h9L63 99z" fill="#783ee4"/><path d="M72 90v9h-9z" fill="#7d44e9"/><path d="M0 99h9L0 108z" fill="#9b42a3"/><path d="M9 99v9h-9z" fill="#8d2c7f"/><path d="M9 99h9L9 108z" fill="#8f318a"/><path d="M18 99v9h-9z" fill="#913289"/><path d="M18 99h9L18 108z" fill="#8d3cb0"/><path d="M27 99v9h-9z" fill="#8c3fb8"/><path d="M27 99h9L27 108z" fill="#8e4cdf"/><path d="M36 99v9h-9z" fill="#7e3fd6"/><path d="M36 99h9L36 108z" fill="#7e43e4"/><path d="M45 99v9h-9z" fill="#7c43e6"/><path d="M45 99h9L45 108z" fill="#7d42e7"/><path d="M54 99v9h-9z" fill="#7d44e9"/><path d="M54 99h9v9z" fill="#8a50f6"/><path d="M54 99v9h9z" fill="#8049ee"/><path d="M63 99h9L63 108z" fill="#8850f5"/><path d="M72 99v9h-9z" fill="#723ce1"/><path d="M72 0h9L72 9z" fill="#35269e"/><path d="M81 0v9h-9z" fill="#33259d"/><path d="M81 0h9v9z" fill="#271890"/><path d="M81 0v9h9z" fill="#2d1e97"/><path d="M90 0h9v9z" fill="#2a1a93"/><path d="M90 0v9h9z" fill="#271893"/><path d="M99 0h9L99 9z" fill="#34249e"/><path d="M108 0v9h-9z" fill="#3727a3"/><path d="M108 0h9v9z" fill="#33239d"/><path d="M108 0v9h9z" fill="#32239f"/><path d="M117 0h9v9z" fill="#36269f"/><path d="M117 0v9h9z" fill="#3828a3"/><path d="M126 0h9v9z" fill="#3727a0"/><path d="M126 0v9h9z" fill="#2d1d96"/><path d="M135 0h9v9z" fill="#37279f"/><path d="M135 0v9h9z" fill="#34249d"/><path d="M72 9h9v9z" fill="#2b1e97"/><path d="M72 9v9h9z" fill="#2c209a"/><path d="M81 9h9v9z" fill="#281b95"/><path d="M81 9v9h9z" fill="#2b1e9b"/><path d="M90 9h9L90 18z" fill="#271997"/><path d="M99 9v9h-9z" fill="#3325a7"/><path d="M99 9h9v9z" fill="#291b9c"/><path d="M99 9v9h9z" fill="#3123a9"/><path d="M108 9h9L108 18z" fill="#3224a6"/><path d="M117 9v9h-9z" fill="#2c1ea4"/><path d="M117 9h9L117 18z" fill="#3728a8"/><path d="M126 9v9h-9z" fill="#3b2dae"/><path d="M126 9h9v9z" fill="#2c1d9a"/><path d="M126 9v9h9z" fill="#291996"/><path d="M135 9h9L135 18z" fill="#2b1b96"/><path d="M144 9v9h-9z" fill="#291993"/><path d="M72 18h9v9z" fill="#3228a1"/><path d="M72 18v9h9z" fill="#2f27a0"/><path d="M81 18h9v9z" fill="#261c98"/><path d="M81 18v9h9z" fill="#352ba9"/><path d="M90 18h9L90 27z" fill="#3529ae"/><path d="M99 18v9h-9z" fill="#2c20a9"/><path d="M99 18h9v9z" fill="#392db9"/><path d="M99 18v9h9z" fill="#362ab9"/><path d="M108 18h9v9z" fill="#3f32c0"/><path d="M108 18v9h9z" fill="#3a2dbb"/><path d="M117 18h9L117 27z" fill="#2e21a9"/><path d="M126 18v9h-9z" fill="#3b2eb4"/><path d="M126 18h9v9z" fill="#392bac"/><path d="M126 18v9h9z" fill="#3223a2"/><path d="M135 18h9v9z" fill="#32229f"/><path d="M135 18v9h9z" fill="#3828a4"/><path d="M72 27h9v9z" fill="#221a92"/><path d="M72 27v9h9z" fill="#282299"/><path d="M81 27h9v9z" fill="#221b95"/><path d="M81 27v9h9z" fill="#241c97"/><path d="M90 27h9v9z" fill="#2b20a3"/><path d="M90 27v9h9z" fill="#2e22a5"/><path d="M99 27h9v9z" fill="#3a2eb8"/><path d="M99 27v9h9z" fill="#3124ac"/><path d="M108 27h9L108 36z" fill="#3124b0"/><path d="M117 27v9h-9z" fill="#3224aa"/><path d="M117 27h9v9z" fill="#3023a7"/><path d="M117 27v9h9z" fill="#2a1b9a"/><path d="M126 27h9L126 36z" fill="#3424a1"/><path d="M135 27v9h-9z" fill="#2c1c95"/><path d="M135 27h9v9z" fill="#3929a3"/><path d="M135 27v9h9z" fill="#291991"/><path d="M72 36h9L72 45z" fill="#261f96"/><path d="M81 36v9h-9z" fill="#262097"/><path d="M81 36h9L81 45z" fill="#251f96"/><path d="M90 36v9h-9z" fill="#292198"/><path d="M90 36h9L90 45z" fill="#362aa6"/><path d="M99 36v9h-9z" fill="#2b1e99"/><path d="M99 36h9L99 45z" fill="#3526a6"/><path d="M108 36v9h-9z" fill="#3323a0"/><path d="M108 36h9v9z" fill="#2f209f"/><path d="M108 36v9h9z" fill="#281993"/><path d="M117 36h9v9z" fill="#2a1a93"/><path d="M117 36v9h9z" fill="#352498"/><path d="M126 36h9v9z" fill="#2b1a8e"/><path d="M126 36v9h9z" fill="#291789"/><path d="M135 36h9L135 45z" fill="#37269a"/><path d="M144 36v9h-9z" fill="#322296"/><path d="M72 45h9v9z" fill="#231b92"/><path d="M72 45v9h9z" fill="#241c92"/><path d="M81 45h9v9z" fill="#211a90"/><path d="M81 45v9h9z" fill="#281f96"/><path d="M90 45h9v9z" fill="#3528a0"/><path d="M90 45v9h9z" fill="#3628a2"/><path d="M99 45h9L99 54z" fill="#2a1b94"/><path d="M108 45v9h-9z" fill="#3728a1"/><path d="M108 45h9v9z" fill="#2c1c94"/><path d="M108 45v9h9z" fill="#26168b"/><path d="M117 45h9v9z" fill="#2f1e90"/><path d="M117 45v9h9z" fill="#301e8e"/><path d="M126 45h9v9z" fill="#301e8d"/><path d="M126 45v9h9z" fill="#271583"/><path d="M135 45h9v9z" fill="#281787"/><path d="M135 45v9h9z" fill="#2e1c8e"/><path d="M72 54h9v9z" fill="#21178d"/><path d="M72 54v9h9z" fill="#261c93"/><path d="M81 54h9v9z" fill="#2b2198"/><path d="M81 54v9h9z" fill="#2c2199"/><path d="M90 54h9L90 63z" fill="#31249f"/><path d="M99 54v9h-9z" fill="#3527a7"/><path d="M99 54h9L99 63z" fill="#2f209e"/><path d="M108 54v9h-9z" fill="#2e209e"/><path d="M108 54h9L108 63z" fill="#291991"/><path d="M117 54v9h-9z" fill="#332399"/><path d="M117 54h9L117 63z" fill="#271686"/><path d="M126 54v9h-9z" fill="#362492"/><path d="M126 54h9L126 63z" fill="#33208c"/><path d="M135 54v9h-9z" fill="#35228e"/><path d="M135 54h9L135 63z" fill="#291887"/><path d="M144 54v9h-9z" fill="#301e8f"/><path d="M72 63h9L72 72z" fill="#32259c"/><path d="M81 63v9h-9z" fill="#31249c"/><path d="M81 63h9L81 72z" fill="#2d2199"/><path d="M90 63v9h-9z" fill="#3427a0"/><path d="M90 63h9L90 72z" fill="#3427a6"/><path d="M99 63v9h-9z" fill="#2d1fa0"/><path d="M99 63h9v9z" fill="#2d1fa2"/><path d="M99 63v9h9z" fill="#2f21a0"/><path d="M108 63h9v9z" fill="#3626a0"/><path d="M108 63v9h9z" fill="#302096"/><path d="M117 63h9L117 72z" fill="#322091"/><path d="M126 63v9h-9z" fill="#332190"/><path d="M126 63h9v9z" fill="#271581"/><path d="M126 63v9h9z" fill="#352390"/><path d="M135 63h9L135 72z" fill="#301e8d"/><path d="M144 63v9h-9z" fill="#301e8f"/><path d="M72 72h9L72 81z" fill="#25168e"/><path d="M81 72v9h-9z" fill="#31229a"/><path d="M81 72h9v9z" fill="#25178f"/><path d="M81 72v9h9z" fill="#291a92"/><path d="M90 72h9L90 81z" fill="#2a1b95"/><path d="M99 72v9h-9z" fill="#33239c"/><path d="M99 72h9L99 81z" fill="#30219c"/><path d="M108 72v9h-9z" fill="#2d1d95"/><path d="M108 72h9v9z" fill="#322299"/><path d="M108 72v9h9z" fill="#332296"/><path d="M117 72h9L117 81z" fill="#312091"/><path d="M126 72v9h-9z" fill="#271584"/><path d="M126 72h9v9z" fill="#2b1986"/><path d="M126 72v9h9z" fill="#33218d"/><path d="M135 72h9v9z" fill="#301e8d"/><path d="M135 72v9h9z" fill="#251482"/><path d="M72 81h9v9z" fill="#29198f"/><path d="M72 81v9h9z" fill="#302093"/><path d="M81 81h9L81 90z" fill="#302195"/><path d="M90 81v9h-9z" fill="#29198a"/><path d="M90 81h9L90 90z" fill="#2d1d91"/><path d="M99 81v9h-9z" fill="#2c1c8c"/><path d="M99 81h9v9z" fill="#342497"/><path d="M99 81v9h9z" fill="#271784"/><path d="M108 81h9L108 90z" fill="#352495"/><path d="M117 81v9h-9z" fill="#23127d"/><path d="M117 81h9v9z" fill="#32218e"/><path d="M117 81v9h9z" fill="#332289"/><path d="M126 81h9v9z" fill="#28177f"/><path d="M126 81v9h9z" fill="#251477"/><path d="M135 81h9L135 90z" fill="#26157d"/><path d="M144 81v9h-9z" fill="#2a1a7d"/><path d="M72 90h9v9z" fill="#2d1d8b"/><path d="M72 90v9h9z" fill="#34248e"/><path d="M81 90h9v9z" fill="#32218b"/><path d="M81 90v9h9z" fill="#2b1b7f"/><path d="M90 90h9L90 99z" fill="#2f1e84"/><path d="M99 90v9h-9z" fill="#261575"/><path d="M99 90h9L99 99z" fill="#2a197c"/><path d="M108 90v9h-9z" fill="#21106c"/><path d="M108 90h9v9z" fill="#2a1979"/><path d="M108 90v9h9z" fill="#271670"/><path d="M117 90h9v9z" fill="#22116e"/><path d="M117 90v9h9z" fill="#231369"/><path d="M126 90h9v9z" fill="#2c1c75"/><path d="M126 90v9h9z" fill="#1b0a5e"/><path d="M135 90h9L135 99z" fill="#2b1a71"/><path d="M144 90v9h-9z" fill="#1b0b5d"/><path d="M72 99h9L72 108z" fill="#301f8a"/><path d="M81 99v9h-9z" fill="#33238e"/><path d="M81 99h9v9z" fill="#29187d"/><path d="M81 99v9h9z" fill="#29197f"/><path d="M90 99h9L90 108z" fill="#2c1b7b"/><path d="M99 99v9h-9z" fill="#281779"/><path d="M99 99h9v9z" fill="#251470"/><path d="M99 99v9h9z" fill="#21106e"/><path d="M108 99h9v9z" fill="#2e1d75"/><path d="M108 99v9h9z" fill="#24136d"/><path d="M117 99h9L117 108z" fill="#211065"/><path d="M126 99v9h-9z" fill="#211066"/><path d="M126 99h9L126 108z" fill="#1d0d5e"/><path d="M135 99v9h-9z" fill="#1f0f5f"/><path d="M135 99h9L135 108z" fill="#271764"/><path d="M144 99v9h-9z" fill="#251561"/></g></svg>
  <svg class="thumb" style="left:614px;top:608px" width="144" height="108" viewBox="0 0 144 108"><defs><clipPath id="t2l"><rect x="0" y="0" width="72" height="108"/></clipPath><clipPath id="t2r"><rect x="72" y="0" width="72" height="108"/></clipPath></defs>
<g clip-path="url(#t2l)"><rect width="144" height="108" fill="#2f2a40"/>
<path d="M-5 23 C-4.2 23.3 -2.8 23.5 0 25 C2.8 26.5 7.8 30.0 12 32 C16.2 34.0 20.3 36.2 25 37 C29.7 37.8 35.5 36.5 40 37 C44.5 37.5 49.3 37.8 52 40 C54.7 42.2 55.0 46.3 56 50 C57.0 53.7 56.5 58.3 58 62 C59.5 65.7 62.7 69.3 65 72 C67.3 74.7 68.7 76.5 72 78 C75.3 79.5 81.7 78.7 85 81 C88.3 83.3 89.8 87.5 92 92 C94.2 96.5 96.7 104.2 98 108 C99.3 111.8 99.7 113.8 100 115 L-10 120 Z" fill="#3c2c50"/>
<path d="M-5 35 C-4.2 35.3 -3.0 35.5 0 37 C3.0 38.5 7.7 42.5 13 44 C18.3 45.5 26.8 45.2 32 46 C37.2 46.8 41.2 47.3 44 49 C46.8 50.7 47.8 52.7 49 56 C50.2 59.3 49.5 65.3 51 69 C52.5 72.7 54.5 74.8 58 78 C61.5 81.2 68.3 84.3 72 88 C75.7 91.7 78.0 95.5 80 100 C82.0 104.5 83.3 112.5 84 115 L-10 120 Z" fill="#5c2c5e"/>
<path d="M-5 48 C-4.2 48.3 -3.0 48.7 0 50 C3.0 51.3 7.7 54.5 13 56 C18.3 57.5 27.8 57.7 32 59 C36.2 60.3 36.8 61.0 38.5 64 C40.2 67.0 39.9 72.8 42 77 C44.1 81.2 47.3 85.5 51 89 C54.7 92.5 60.5 95.7 64 98 C67.5 100.3 70.0 100.2 72 103 C74.0 105.8 75.3 113.0 76 115 L-10 120 Z" fill="#8a2a62"/>
<path d="M-5 57 C-4.2 57.3 -3.0 57.7 0 59 C3.0 60.3 8.3 63.7 13 65 C17.7 66.3 24.3 65.8 28 67 C31.7 68.2 33.2 69.0 35 72 C36.8 75.0 36.8 81.3 38.5 85 C40.2 88.7 42.2 91.0 45 94 C47.8 97.0 52.2 99.5 55 103 C57.8 106.5 60.8 113.0 62 115 L-10 120 Z" fill="#b02c52"/>
<path d="M-5 72 C-4.2 72.3 -3.0 72.7 0 74 C3.0 75.3 9.2 78.8 13 80 C16.8 81.2 20.2 79.3 23 81 C25.8 82.7 27.8 86.8 29.5 90 C31.2 93.2 31.2 95.8 33 100 C34.8 104.2 38.8 112.5 40 115 L-10 120 Z" fill="#c4304a"/>
<path d="M-5 85 C-4.2 85.3 -2.5 85.8 0 87 C2.5 88.2 6.8 90.5 10 92 C13.2 93.5 17.0 94.2 19 96 C21.0 97.8 20.5 99.8 22 103 C23.5 106.2 27.0 113.0 28 115 L-10 120 Z" fill="#d04a22"/>
<path d="M-5 99 C-4.2 99.3 -2.2 100.3 0 101 C2.2 101.7 5.7 100.7 8 103 C10.3 105.3 13.0 113.0 14 115 L-10 120 Z" fill="#d86010"/>
<path d="M55 -5 C55.2 -0.5 55.7 15.7 56.5 22 C57.3 28.3 57.4 30.7 60 33 C62.6 35.3 67.8 35.1 72 36 C76.2 36.9 81.8 36.8 85 38.5 C88.2 40.2 88.8 42.6 91 46 C93.2 49.4 94.8 55.2 98 59 C101.2 62.8 102.8 66.2 110.5 69 C118.2 71.8 137.4 74.7 144 76 C150.6 77.3 149.0 76.8 150 77 L150 -10 Z" fill="#3e2c50"/>
<path d="M65 -5 C65.2 -2.2 64.8 8.5 66 12 C67.2 15.5 68.8 14.3 72 16 C75.2 17.7 81.2 19.3 85 22 C88.8 24.7 91.8 27.8 95 32 C98.2 36.2 100.8 42.8 104 47.5 C107.2 52.2 107.3 56.8 114 60 C120.7 63.2 138.0 65.7 144 67 C150.0 68.3 149.0 67.8 150 68 L150 -10 Z" fill="#6a3068"/>
<path d="M80 -5 C80.3 -2.8 80.3 4.8 82 8 C83.7 11.2 87.0 11.7 90 14 C93.0 16.3 97.0 18.3 100 22 C103.0 25.7 104.7 31.7 108 36 C111.3 40.3 114.0 45.0 120 48 C126.0 51.0 139.0 52.8 144 54 C149.0 55.2 149.0 54.8 150 55 L150 -10 Z" fill="#822c64"/>
<path d="M88 -5 C88.1 -2.5 86.0 5.8 88.7 10 C91.4 14.2 99.8 16.5 104 20 C108.2 23.5 110.8 27.7 114 31 C117.2 34.3 118.0 37.7 123 40 C128.0 42.3 139.5 44.0 144 45 C148.5 46.0 149.0 45.8 150 46 L150 -10 Z" fill="#962450"/>
<path d="M100 -5 C100.0 -3.3 98.2 1.8 100 5 C101.8 8.2 107.7 10.8 110.5 14 C113.3 17.2 113.8 21.4 117 24 C120.2 26.6 125.5 28.0 130 29.5 C134.5 31.0 140.7 32.4 144 33 C147.3 33.6 149.0 33.0 150 33 L150 -10 Z" fill="#b42c3c"/>
<path d="M114 -5 C115.2 -2.9 118.3 4.3 121 7.7 C123.7 11.1 126.2 13.5 130 15.4 C133.8 17.3 140.7 18.4 144 19 C147.3 19.6 149.0 19.0 150 19 L150 -10 Z" fill="#c8401e"/>
<path d="M130 -5 C131.0 -3.3 133.7 2.9 136 5 C138.3 7.1 141.7 7.2 144 7.7 C146.3 8.2 149.0 8.0 150 8 L150 -10 Z" fill="#d05010"/>
</g>
<g clip-path="url(#t2r)"><rect width="144" height="108" fill="#25212f"/>
<path d="M-5 23 C-4.2 23.3 -2.8 23.5 0 25 C2.8 26.5 7.8 30.0 12 32 C16.2 34.0 20.3 36.2 25 37 C29.7 37.8 35.5 36.5 40 37 C44.5 37.5 49.3 37.8 52 40 C54.7 42.2 55.0 46.3 56 50 C57.0 53.7 56.5 58.3 58 62 C59.5 65.7 62.7 69.3 65 72 C67.3 74.7 68.7 76.5 72 78 C75.3 79.5 81.7 78.7 85 81 C88.3 83.3 89.8 87.5 92 92 C94.2 96.5 96.7 104.2 98 108 C99.3 111.8 99.7 113.8 100 115 L-10 120 Z" fill="#34223e"/>
<path d="M-5 35 C-4.2 35.3 -3.0 35.5 0 37 C3.0 38.5 7.7 42.5 13 44 C18.3 45.5 26.8 45.2 32 46 C37.2 46.8 41.2 47.3 44 49 C46.8 50.7 47.8 52.7 49 56 C50.2 59.3 49.5 65.3 51 69 C52.5 72.7 54.5 74.8 58 78 C61.5 81.2 68.3 84.3 72 88 C75.7 91.7 78.0 95.5 80 100 C82.0 104.5 83.3 112.5 84 115 L-10 120 Z" fill="#46244c"/>
<path d="M-5 48 C-4.2 48.3 -3.0 48.7 0 50 C3.0 51.3 7.7 54.5 13 56 C18.3 57.5 27.8 57.7 32 59 C36.2 60.3 36.8 61.0 38.5 64 C40.2 67.0 39.9 72.8 42 77 C44.1 81.2 47.3 85.5 51 89 C54.7 92.5 60.5 95.7 64 98 C67.5 100.3 70.0 100.2 72 103 C74.0 105.8 75.3 113.0 76 115 L-10 120 Z" fill="#602458"/>
<path d="M-5 57 C-4.2 57.3 -3.0 57.7 0 59 C3.0 60.3 8.3 63.7 13 65 C17.7 66.3 24.3 65.8 28 67 C31.7 68.2 33.2 69.0 35 72 C36.8 75.0 36.8 81.3 38.5 85 C40.2 88.7 42.2 91.0 45 94 C47.8 97.0 52.2 99.5 55 103 C57.8 106.5 60.8 113.0 62 115 L-10 120 Z" fill="#8c244e"/>
<path d="M-5 72 C-4.2 72.3 -3.0 72.7 0 74 C3.0 75.3 9.2 78.8 13 80 C16.8 81.2 20.2 79.3 23 81 C25.8 82.7 27.8 86.8 29.5 90 C31.2 93.2 31.2 95.8 33 100 C34.8 104.2 38.8 112.5 40 115 L-10 120 Z" fill="#aa2842"/>
<path d="M-5 85 C-4.2 85.3 -2.5 85.8 0 87 C2.5 88.2 6.8 90.5 10 92 C13.2 93.5 17.0 94.2 19 96 C21.0 97.8 20.5 99.8 22 103 C23.5 106.2 27.0 113.0 28 115 L-10 120 Z" fill="#c84022"/>
<path d="M-5 99 C-4.2 99.3 -2.2 100.3 0 101 C2.2 101.7 5.7 100.7 8 103 C10.3 105.3 13.0 113.0 14 115 L-10 120 Z" fill="#d25a10"/>
<path d="M55 -5 C55.2 -0.5 55.7 15.7 56.5 22 C57.3 28.3 57.4 30.7 60 33 C62.6 35.3 67.8 35.1 72 36 C76.2 36.9 81.8 36.8 85 38.5 C88.2 40.2 88.8 42.6 91 46 C93.2 49.4 94.8 55.2 98 59 C101.2 62.8 102.8 66.2 110.5 69 C118.2 71.8 137.4 74.7 144 76 C150.6 77.3 149.0 76.8 150 77 L150 -10 Z" fill="#32203c"/>
<path d="M65 -5 C65.2 -2.2 64.8 8.5 66 12 C67.2 15.5 68.8 14.3 72 16 C75.2 17.7 81.2 19.3 85 22 C88.8 24.7 91.8 27.8 95 32 C98.2 36.2 100.8 42.8 104 47.5 C107.2 52.2 107.3 56.8 114 60 C120.7 63.2 138.0 65.7 144 67 C150.0 68.3 149.0 67.8 150 68 L150 -10 Z" fill="#5a2250"/>
<path d="M80 -5 C80.3 -2.8 80.3 4.8 82 8 C83.7 11.2 87.0 11.7 90 14 C93.0 16.3 97.0 18.3 100 22 C103.0 25.7 104.7 31.7 108 36 C111.3 40.3 114.0 45.0 120 48 C126.0 51.0 139.0 52.8 144 54 C149.0 55.2 149.0 54.8 150 55 L150 -10 Z" fill="#6e2450"/>
<path d="M88 -5 C88.1 -2.5 86.0 5.8 88.7 10 C91.4 14.2 99.8 16.5 104 20 C108.2 23.5 110.8 27.7 114 31 C117.2 34.3 118.0 37.7 123 40 C128.0 42.3 139.5 44.0 144 45 C148.5 46.0 149.0 45.8 150 46 L150 -10 Z" fill="#8e2048"/>
<path d="M100 -5 C100.0 -3.3 98.2 1.8 100 5 C101.8 8.2 107.7 10.8 110.5 14 C113.3 17.2 113.8 21.4 117 24 C120.2 26.6 125.5 28.0 130 29.5 C134.5 31.0 140.7 32.4 144 33 C147.3 33.6 149.0 33.0 150 33 L150 -10 Z" fill="#b02838"/>
<path d="M114 -5 C115.2 -2.9 118.3 4.3 121 7.7 C123.7 11.1 126.2 13.5 130 15.4 C133.8 17.3 140.7 18.4 144 19 C147.3 19.6 149.0 19.0 150 19 L150 -10 Z" fill="#c8401a"/>
<path d="M130 -5 C131.0 -3.3 133.7 2.9 136 5 C138.3 7.1 141.7 7.2 144 7.7 C146.3 8.2 149.0 8.0 150 8 L150 -10 Z" fill="#d05210"/>
</g></svg>
  <svg class="thumb" style="left:776px;top:608px" width="144" height="108" viewBox="0 0 144 108"><defs><filter id="t3f" x="-20%" y="-20%" width="140%" height="140%"><feGaussianBlur stdDeviation="4"/></filter><filter id="t3g" x="-20%" y="-20%" width="140%" height="140%"><feGaussianBlur stdDeviation="3.2"/></filter><filter id="t3h" x="-10%" y="-10%" width="120%" height="120%"><feGaussianBlur stdDeviation="0.5"/></filter><clipPath id="t3m"><path d="M-2 60 L0 60 L8 55 L15 53 L25 56 L30 54 L32 50 L38 42 L44 34 L48 29 L50 27.5 L53 30 L57 36 L64 36 L70 37 L78 38 L86 42 L94 47 L102 50 L112 52 L122 56 L132 58 L146 62 L146 110 L-2 110 Z"/></clipPath></defs>
<g filter="url(#t3f)"><rect x="-12" y="-12" width="12.5" height="12.5" fill="#7a7686"/><rect x="0" y="-12" width="12.5" height="12.5" fill="#7a7686"/><rect x="12" y="-12" width="12.5" height="12.5" fill="#8a8696"/><rect x="24" y="-12" width="12.5" height="12.5" fill="#908c9a"/><rect x="36" y="-12" width="12.5" height="12.5" fill="#9894a2"/><rect x="48" y="-12" width="12.5" height="12.5" fill="#a8a4b0"/><rect x="60" y="-12" width="12.5" height="12.5" fill="#b8b2bc"/><rect x="72" y="-12" width="12.5" height="12.5" fill="#c4bec6"/><rect x="84" y="-12" width="12.5" height="12.5" fill="#a09cac"/><rect x="96" y="-12" width="12.5" height="12.5" fill="#aaa6b2"/><rect x="108" y="-12" width="12.5" height="12.5" fill="#c8c0c8"/><rect x="120" y="-12" width="12.5" height="12.5" fill="#d8d0d2"/><rect x="132" y="-12" width="12.5" height="12.5" fill="#dcd4d6"/><rect x="144" y="-12" width="12.5" height="12.5" fill="#dcd4d6"/><rect x="-12" y="0" width="12.5" height="12.5" fill="#7a7686"/><rect x="0" y="0" width="12.5" height="12.5" fill="#7a7686"/><rect x="12" y="0" width="12.5" height="12.5" fill="#8a8696"/><rect x="24" y="0" width="12.5" height="12.5" fill="#908c9a"/><rect x="36" y="0" width="12.5" height="12.5" fill="#9894a2"/><rect x="48" y="0" width="12.5" height="12.5" fill="#a8a4b0"/><rect x="60" y="0" width="12.5" height="12.5" fill="#b8b2bc"/><rect x="72" y="0" width="12.5" height="12.5" fill="#c4bec6"/><rect x="84" y="0" width="12.5" height="12.5" fill="#a09cac"/><rect x="96" y="0" width="12.5" height="12.5" fill="#aaa6b2"/><rect x="108" y="0" width="12.5" height="12.5" fill="#c8c0c8"/><rect x="120" y="0" width="12.5" height="12.5" fill="#d8d0d2"/><rect x="132" y="0" width="12.5" height="12.5" fill="#dcd4d6"/><rect x="144" y="0" width="12.5" height="12.5" fill="#dcd4d6"/><rect x="-12" y="12" width="12.5" height="12.5" fill="#d8c8c4"/><rect x="0" y="12" width="12.5" height="12.5" fill="#d8c8c4"/><rect x="12" y="12" width="12.5" height="12.5" fill="#c8bcc0"/><rect x="24" y="12" width="12.5" height="12.5" fill="#a8a2b0"/><rect x="36" y="12" width="12.5" height="12.5" fill="#9a96a4"/><rect x="48" y="12" width="12.5" height="12.5" fill="#a8a4b0"/><rect x="60" y="12" width="12.5" height="12.5" fill="#a09caa"/><rect x="72" y="12" width="12.5" height="12.5" fill="#c0bac4"/><rect x="84" y="12" width="12.5" height="12.5" fill="#b0acb8"/><rect x="96" y="12" width="12.5" height="12.5" fill="#9894a2"/><rect x="108" y="12" width="12.5" height="12.5" fill="#b8b0bc"/><rect x="120" y="12" width="12.5" height="12.5" fill="#d4ccd0"/><rect x="132" y="12" width="12.5" height="12.5" fill="#d8d0d2"/><rect x="144" y="12" width="12.5" height="12.5" fill="#d8d0d2"/><rect x="-12" y="24" width="12.5" height="12.5" fill="#a89ea8"/><rect x="0" y="24" width="12.5" height="12.5" fill="#a89ea8"/><rect x="12" y="24" width="12.5" height="12.5" fill="#7a7888"/><rect x="24" y="24" width="12.5" height="12.5" fill="#6e6c7c"/><rect x="36" y="24" width="12.5" height="12.5" fill="#a09ca8"/><rect x="48" y="24" width="12.5" height="12.5" fill="#8e8a9a"/><rect x="60" y="24" width="12.5" height="12.5" fill="#828090"/><rect x="72" y="24" width="12.5" height="12.5" fill="#a8a4b0"/><rect x="84" y="24" width="12.5" height="12.5" fill="#9894a2"/><rect x="96" y="24" width="12.5" height="12.5" fill="#8e8a98"/><rect x="108" y="24" width="12.5" height="12.5" fill="#a09ca8"/><rect x="120" y="24" width="12.5" height="12.5" fill="#c0b8c0"/><rect x="132" y="24" width="12.5" height="12.5" fill="#c8c0c8"/><rect x="144" y="24" width="12.5" height="12.5" fill="#c8c0c8"/><rect x="-12" y="36" width="12.5" height="12.5" fill="#7a7888"/><rect x="0" y="36" width="12.5" height="12.5" fill="#7a7888"/><rect x="12" y="36" width="12.5" height="12.5" fill="#6a6878"/><rect x="24" y="36" width="12.5" height="12.5" fill="#8a8696"/><rect x="36" y="36" width="12.5" height="12.5" fill="#7a7888"/><rect x="48" y="36" width="12.5" height="12.5" fill="#8a8696"/><rect x="60" y="36" width="12.5" height="12.5" fill="#9a96a4"/><rect x="72" y="36" width="12.5" height="12.5" fill="#9e9aa8"/><rect x="84" y="36" width="12.5" height="12.5" fill="#b8b0b8"/><rect x="96" y="36" width="12.5" height="12.5" fill="#c8c0c6"/><rect x="108" y="36" width="12.5" height="12.5" fill="#a8a4b0"/><rect x="120" y="36" width="12.5" height="12.5" fill="#9a96a4"/><rect x="132" y="36" width="12.5" height="12.5" fill="#aaa6b2"/><rect x="144" y="36" width="12.5" height="12.5" fill="#aaa6b2"/><rect x="-12" y="48" width="12.5" height="12.5" fill="#c8b8b4"/><rect x="0" y="48" width="12.5" height="12.5" fill="#c8b8b4"/><rect x="12" y="48" width="12.5" height="12.5" fill="#9a92a0"/><rect x="24" y="48" width="12.5" height="12.5" fill="#a89ea8"/><rect x="36" y="48" width="12.5" height="12.5" fill="#a09ca8"/><rect x="48" y="48" width="12.5" height="12.5" fill="#9a96a4"/><rect x="60" y="48" width="12.5" height="12.5" fill="#a8a4b0"/><rect x="72" y="48" width="12.5" height="12.5" fill="#a8a4b0"/><rect x="84" y="48" width="12.5" height="12.5" fill="#b0acb8"/><rect x="96" y="48" width="12.5" height="12.5" fill="#c0b8c0"/><rect x="108" y="48" width="12.5" height="12.5" fill="#9894a2"/><rect x="120" y="48" width="12.5" height="12.5" fill="#8e8a98"/><rect x="132" y="48" width="12.5" height="12.5" fill="#a09ca8"/><rect x="144" y="48" width="12.5" height="12.5" fill="#a09ca8"/><rect x="-12" y="60" width="12.5" height="12.5" fill="#c0b0ac"/><rect x="0" y="60" width="12.5" height="12.5" fill="#c0b0ac"/><rect x="12" y="60" width="12.5" height="12.5" fill="#a89ea8"/><rect x="24" y="60" width="12.5" height="12.5" fill="#a09ca8"/><rect x="36" y="60" width="12.5" height="12.5" fill="#a09ca8"/><rect x="48" y="60" width="12.5" height="12.5" fill="#a09ca8"/><rect x="60" y="60" width="12.5" height="12.5" fill="#a8a4b0"/><rect x="72" y="60" width="12.5" height="12.5" fill="#a8a4b0"/><rect x="84" y="60" width="12.5" height="12.5" fill="#b0acb8"/><rect x="96" y="60" width="12.5" height="12.5" fill="#b8b0b8"/><rect x="108" y="60" width="12.5" height="12.5" fill="#a8a4b0"/><rect x="120" y="60" width="12.5" height="12.5" fill="#9a96a4"/><rect x="132" y="60" width="12.5" height="12.5" fill="#a8a4b0"/><rect x="144" y="60" width="12.5" height="12.5" fill="#a8a4b0"/><rect x="-12" y="72" width="12.5" height="12.5" fill="#c0b0ac"/><rect x="0" y="72" width="12.5" height="12.5" fill="#c0b0ac"/><rect x="12" y="72" width="12.5" height="12.5" fill="#a89ea8"/><rect x="24" y="72" width="12.5" height="12.5" fill="#a09ca8"/><rect x="36" y="72" width="12.5" height="12.5" fill="#a09ca8"/><rect x="48" y="72" width="12.5" height="12.5" fill="#a09ca8"/><rect x="60" y="72" width="12.5" height="12.5" fill="#a8a4b0"/><rect x="72" y="72" width="12.5" height="12.5" fill="#a8a4b0"/><rect x="84" y="72" width="12.5" height="12.5" fill="#b0acb8"/><rect x="96" y="72" width="12.5" height="12.5" fill="#b8b0b8"/><rect x="108" y="72" width="12.5" height="12.5" fill="#a8a4b0"/><rect x="120" y="72" width="12.5" height="12.5" fill="#9a96a4"/><rect x="132" y="72" width="12.5" height="12.5" fill="#a8a4b0"/><rect x="144" y="72" width="12.5" height="12.5" fill="#a8a4b0"/></g>
<g clip-path="url(#t3m)"><g filter="url(#t3g)"><rect x="-12" y="0" width="12.5" height="12.5" fill="#50505e"/><rect x="0" y="0" width="12.5" height="12.5" fill="#50505e"/><rect x="12" y="0" width="12.5" height="12.5" fill="#52525f"/><rect x="24" y="0" width="12.5" height="12.5" fill="#54546a"/><rect x="36" y="0" width="12.5" height="12.5" fill="#58586a"/><rect x="48" y="0" width="12.5" height="12.5" fill="#5c5c6a"/><rect x="60" y="0" width="12.5" height="12.5" fill="#54546a"/><rect x="72" y="0" width="12.5" height="12.5" fill="#50505e"/><rect x="84" y="0" width="12.5" height="12.5" fill="#525262"/><rect x="96" y="0" width="12.5" height="12.5" fill="#525262"/><rect x="108" y="0" width="12.5" height="12.5" fill="#4c4c5a"/><rect x="120" y="0" width="12.5" height="12.5" fill="#4c4c5a"/><rect x="132" y="0" width="12.5" height="12.5" fill="#4c4c5a"/><rect x="144" y="0" width="12.5" height="12.5" fill="#4c4c5a"/><rect x="-12" y="12" width="12.5" height="12.5" fill="#50505e"/><rect x="0" y="12" width="12.5" height="12.5" fill="#50505e"/><rect x="12" y="12" width="12.5" height="12.5" fill="#52525f"/><rect x="24" y="12" width="12.5" height="12.5" fill="#54546a"/><rect x="36" y="12" width="12.5" height="12.5" fill="#58586a"/><rect x="48" y="12" width="12.5" height="12.5" fill="#5c5c6a"/><rect x="60" y="12" width="12.5" height="12.5" fill="#54546a"/><rect x="72" y="12" width="12.5" height="12.5" fill="#50505e"/><rect x="84" y="12" width="12.5" height="12.5" fill="#525262"/><rect x="96" y="12" width="12.5" height="12.5" fill="#525262"/><rect x="108" y="12" width="12.5" height="12.5" fill="#4c4c5a"/><rect x="120" y="12" width="12.5" height="12.5" fill="#4c4c5a"/><rect x="132" y="12" width="12.5" height="12.5" fill="#4c4c5a"/><rect x="144" y="12" width="12.5" height="12.5" fill="#4c4c5a"/><rect x="-12" y="24" width="12.5" height="12.5" fill="#50505e"/><rect x="0" y="24" width="12.5" height="12.5" fill="#50505e"/><rect x="12" y="24" width="12.5" height="12.5" fill="#52525f"/><rect x="24" y="24" width="12.5" height="12.5" fill="#54546a"/><rect x="36" y="24" width="12.5" height="12.5" fill="#58586a"/><rect x="48" y="24" width="12.5" height="12.5" fill="#6a6a78"/><rect x="60" y="24" width="12.5" height="12.5" fill="#5c5c6a"/><rect x="72" y="24" width="12.5" height="12.5" fill="#50505e"/><rect x="84" y="24" width="12.5" height="12.5" fill="#525262"/><rect x="96" y="24" width="12.5" height="12.5" fill="#525262"/><rect x="108" y="24" width="12.5" height="12.5" fill="#4c4c5a"/><rect x="120" y="24" width="12.5" height="12.5" fill="#4c4c5a"/><rect x="132" y="24" width="12.5" height="12.5" fill="#4c4c5a"/><rect x="144" y="24" width="12.5" height="12.5" fill="#4c4c5a"/><rect x="-12" y="36" width="12.5" height="12.5" fill="#606070"/><rect x="0" y="36" width="12.5" height="12.5" fill="#606070"/><rect x="12" y="36" width="12.5" height="12.5" fill="#6a6a76"/><rect x="24" y="36" width="12.5" height="12.5" fill="#5a5a68"/><rect x="36" y="36" width="12.5" height="12.5" fill="#606070"/><rect x="48" y="36" width="12.5" height="12.5" fill="#4a4a58"/><rect x="60" y="36" width="12.5" height="12.5" fill="#6a6a78"/><rect x="72" y="36" width="12.5" height="12.5" fill="#5a5a68"/><rect x="84" y="36" width="12.5" height="12.5" fill="#525262"/><rect x="96" y="36" width="12.5" height="12.5" fill="#525262"/><rect x="108" y="36" width="12.5" height="12.5" fill="#4c4c5a"/><rect x="120" y="36" width="12.5" height="12.5" fill="#4c4c5a"/><rect x="132" y="36" width="12.5" height="12.5" fill="#4c4c5a"/><rect x="144" y="36" width="12.5" height="12.5" fill="#4c4c5a"/><rect x="-12" y="48" width="12.5" height="12.5" fill="#7a7884"/><rect x="0" y="48" width="12.5" height="12.5" fill="#7a7884"/><rect x="12" y="48" width="12.5" height="12.5" fill="#8a8894"/><rect x="24" y="48" width="12.5" height="12.5" fill="#6a6a78"/><rect x="36" y="48" width="12.5" height="12.5" fill="#505060"/><rect x="48" y="48" width="12.5" height="12.5" fill="#606070"/><rect x="60" y="48" width="12.5" height="12.5" fill="#5a5a68"/><rect x="72" y="48" width="12.5" height="12.5" fill="#4a4a58"/><rect x="84" y="48" width="12.5" height="12.5" fill="#5a5a68"/><rect x="96" y="48" width="12.5" height="12.5" fill="#6a6a78"/><rect x="108" y="48" width="12.5" height="12.5" fill="#5a5a68"/><rect x="120" y="48" width="12.5" height="12.5" fill="#4c4c5a"/><rect x="132" y="48" width="12.5" height="12.5" fill="#50505e"/><rect x="144" y="48" width="12.5" height="12.5" fill="#50505e"/><rect x="-12" y="60" width="12.5" height="12.5" fill="#5a5660"/><rect x="0" y="60" width="12.5" height="12.5" fill="#5a5660"/><rect x="12" y="60" width="12.5" height="12.5" fill="#7a7884"/><rect x="24" y="60" width="12.5" height="12.5" fill="#90909a"/><rect x="36" y="60" width="12.5" height="12.5" fill="#40404e"/><rect x="48" y="60" width="12.5" height="12.5" fill="#3e3e4c"/><rect x="60" y="60" width="12.5" height="12.5" fill="#4a4a5a"/><rect x="72" y="60" width="12.5" height="12.5" fill="#42424e"/><rect x="84" y="60" width="12.5" height="12.5" fill="#3e3e4c"/><rect x="96" y="60" width="12.5" height="12.5" fill="#505060"/><rect x="108" y="60" width="12.5" height="12.5" fill="#4a4a58"/><rect x="120" y="60" width="12.5" height="12.5" fill="#6a6874"/><rect x="132" y="60" width="12.5" height="12.5" fill="#7a7886"/><rect x="144" y="60" width="12.5" height="12.5" fill="#7a7886"/><rect x="-12" y="72" width="12.5" height="12.5" fill="#6a5850"/><rect x="0" y="72" width="12.5" height="12.5" fill="#6a5850"/><rect x="12" y="72" width="12.5" height="12.5" fill="#7a7a84"/><rect x="24" y="72" width="12.5" height="12.5" fill="#9a98a2"/><rect x="36" y="72" width="12.5" height="12.5" fill="#8a8892"/><rect x="48" y="72" width="12.5" height="12.5" fill="#4a4a58"/><rect x="60" y="72" width="12.5" height="12.5" fill="#424250"/><rect x="72" y="72" width="12.5" height="12.5" fill="#3a3a44"/><rect x="84" y="72" width="12.5" height="12.5" fill="#4a4450"/><rect x="96" y="72" width="12.5" height="12.5" fill="#505060"/><rect x="108" y="72" width="12.5" height="12.5" fill="#5e5a62"/><rect x="120" y="72" width="12.5" height="12.5" fill="#4e4a56"/><rect x="132" y="72" width="12.5" height="12.5" fill="#403c48"/><rect x="144" y="72" width="12.5" height="12.5" fill="#403c48"/><rect x="-12" y="84" width="12.5" height="12.5" fill="#7a6050"/><rect x="0" y="84" width="12.5" height="12.5" fill="#7a6050"/><rect x="12" y="84" width="12.5" height="12.5" fill="#6e5a52"/><rect x="24" y="84" width="12.5" height="12.5" fill="#7a6e70"/><rect x="36" y="84" width="12.5" height="12.5" fill="#8a8088"/><rect x="48" y="84" width="12.5" height="12.5" fill="#6a5e5e"/><rect x="60" y="84" width="12.5" height="12.5" fill="#3e3842"/><rect x="72" y="84" width="12.5" height="12.5" fill="#7a6050"/><rect x="84" y="84" width="12.5" height="12.5" fill="#5a4a48"/><rect x="96" y="84" width="12.5" height="12.5" fill="#6a5a50"/><rect x="108" y="84" width="12.5" height="12.5" fill="#5e4c42"/><rect x="120" y="84" width="12.5" height="12.5" fill="#6a5444"/><rect x="132" y="84" width="12.5" height="12.5" fill="#3a3240"/><rect x="144" y="84" width="12.5" height="12.5" fill="#3a3240"/><rect x="-12" y="96" width="12.5" height="12.5" fill="#5a4a48"/><rect x="0" y="96" width="12.5" height="12.5" fill="#5a4a48"/><rect x="12" y="96" width="12.5" height="12.5" fill="#7a5e4a"/><rect x="24" y="96" width="12.5" height="12.5" fill="#8a6a4e"/><rect x="36" y="96" width="12.5" height="12.5" fill="#6a5448"/><rect x="48" y="96" width="12.5" height="12.5" fill="#3a2e30"/><rect x="60" y="96" width="12.5" height="12.5" fill="#8a6a4c"/><rect x="72" y="96" width="12.5" height="12.5" fill="#9a7450"/><rect x="84" y="96" width="12.5" height="12.5" fill="#5a4438"/><rect x="96" y="96" width="12.5" height="12.5" fill="#6a5240"/><rect x="108" y="96" width="12.5" height="12.5" fill="#8a6a4e"/><rect x="120" y="96" width="12.5" height="12.5" fill="#6a4e3c"/><rect x="132" y="96" width="12.5" height="12.5" fill="#4a3a38"/><rect x="144" y="96" width="12.5" height="12.5" fill="#4a3a38"/><rect x="-12" y="108" width="12.5" height="12.5" fill="#5a4a48"/><rect x="0" y="108" width="12.5" height="12.5" fill="#5a4a48"/><rect x="12" y="108" width="12.5" height="12.5" fill="#7a5e4a"/><rect x="24" y="108" width="12.5" height="12.5" fill="#8a6a4e"/><rect x="36" y="108" width="12.5" height="12.5" fill="#6a5448"/><rect x="48" y="108" width="12.5" height="12.5" fill="#3a2e30"/><rect x="60" y="108" width="12.5" height="12.5" fill="#8a6a4c"/><rect x="72" y="108" width="12.5" height="12.5" fill="#9a7450"/><rect x="84" y="108" width="12.5" height="12.5" fill="#5a4438"/><rect x="96" y="108" width="12.5" height="12.5" fill="#6a5240"/><rect x="108" y="108" width="12.5" height="12.5" fill="#8a6a4e"/><rect x="120" y="108" width="12.5" height="12.5" fill="#6a4e3c"/><rect x="132" y="108" width="12.5" height="12.5" fill="#4a3a38"/><rect x="144" y="108" width="12.5" height="12.5" fill="#4a3a38"/><rect x="-12" y="120" width="12.5" height="12.5" fill="#5a4a48"/><rect x="0" y="120" width="12.5" height="12.5" fill="#5a4a48"/><rect x="12" y="120" width="12.5" height="12.5" fill="#7a5e4a"/><rect x="24" y="120" width="12.5" height="12.5" fill="#8a6a4e"/><rect x="36" y="120" width="12.5" height="12.5" fill="#6a5448"/><rect x="48" y="120" width="12.5" height="12.5" fill="#3a2e30"/><rect x="60" y="120" width="12.5" height="12.5" fill="#8a6a4c"/><rect x="72" y="120" width="12.5" height="12.5" fill="#9a7450"/><rect x="84" y="120" width="12.5" height="12.5" fill="#5a4438"/><rect x="96" y="120" width="12.5" height="12.5" fill="#6a5240"/><rect x="108" y="120" width="12.5" height="12.5" fill="#8a6a4e"/><rect x="120" y="120" width="12.5" height="12.5" fill="#6a4e3c"/><rect x="132" y="120" width="12.5" height="12.5" fill="#4a3a38"/><rect x="144" y="120" width="12.5" height="12.5" fill="#4a3a38"/></g>
<g filter="url(#t3h)"><path d="M12 76 C22 74 36 78 50 84 C58 88 62 92 60 94 C46 92 30 90 14 86 Z" fill="#a8a4ac" opacity="0.7"/><path d="M0 82 C8 78 14 74 22 72 L26 78 C18 82 10 88 0 92 Z" fill="#7a5e4e"/><path d="M0 92 C10 90 20 94 34 108 H0 Z" fill="#6e5648"/><path d="M35 108 C45 100 60 88 72 82 C85 76 95 78 110 82 L144 90 V108 Z" fill="#6e5446" opacity="0.6"/><path d="M30 108 C45 98 60 86 72 80 C84 75 96 76 112 80" fill="none" stroke="#3a3034" stroke-width="1.6" opacity="0.6"/><path d="M104 88 C116 84 130 86 144 92 V108 H100 Z" fill="#7a5e4a" opacity="0.45"/><path d="M60 108 C70 100 80 96 92 94 C100 98 104 104 106 108 Z" fill="#86664a" opacity="0.7"/><path d="M112 108 C120 100 132 98 144 100 V108 Z" fill="#3e3236" opacity="0.7"/><path d="M65 59l3.1 2.2" stroke="#e2e2e8" stroke-opacity="0.4" stroke-width="1.3"/><path d="M69 61l1.4 1.0" stroke="#e2e2e8" stroke-opacity="0.7" stroke-width="1.3"/><path d="M6 91l2.8 2.7" stroke="#30303c" stroke-opacity="0.6" stroke-width="1.4"/><path d="M9 56l2.7 2.5" stroke="#3a3a46" stroke-opacity="0.5" stroke-width="1.4"/><path d="M75 63l1.8 1.8" stroke="#c4c4ce" stroke-opacity="0.5" stroke-width="1.1"/><path d="M134 61l1.3 1.4" stroke="#d6d6de" stroke-opacity="0.4" stroke-width="1.3"/><path d="M58 70l1.2 1.9" stroke="#30303c" stroke-opacity="0.4" stroke-width="1.4"/><path d="M8 69l2.6 1.8" stroke="#d6d6de" stroke-opacity="0.7" stroke-width="0.9"/><path d="M13 66l2.6 2.9" stroke="#d6d6de" stroke-opacity="0.7" stroke-width="0.7"/><path d="M67 56l2.9 1.2" stroke="#e2e2e8" stroke-opacity="0.7" stroke-width="1.0"/><path d="M55 49l3.8 1.0" stroke="#44444f" stroke-opacity="0.5" stroke-width="1.4"/><path d="M30 69l2.6 2.5" stroke="#d6d6de" stroke-opacity="0.4" stroke-width="0.9"/><path d="M111 65l1.9 0.6" stroke="#e2e2e8" stroke-opacity="0.6" stroke-width="0.7"/><path d="M53 55l1.2 1.0" stroke="#30303c" stroke-opacity="0.7" stroke-width="0.8"/><path d="M22 89l3.1 1.5" stroke="#e2e2e8" stroke-opacity="0.6" stroke-width="1.1"/><path d="M99 64l2.4 0.8" stroke="#d6d6de" stroke-opacity="0.4" stroke-width="1.5"/><path d="M34 75l1.2 1.5" stroke="#c4c4ce" stroke-opacity="0.6" stroke-width="1.4"/><path d="M141 64l1.8 1.8" stroke="#d6d6de" stroke-opacity="0.5" stroke-width="1.4"/><path d="M29 55l1.6 1.1" stroke="#d6d6de" stroke-opacity="0.5" stroke-width="1.1"/><path d="M140 63l1.3 0.9" stroke="#e2e2e8" stroke-opacity="0.7" stroke-width="1.2"/><path d="M20 56l0.7 1.0" stroke="#30303c" stroke-opacity="0.4" stroke-width="1.2"/><path d="M69 66l1.0 1.8" stroke="#e2e2e8" stroke-opacity="0.5" stroke-width="0.7"/><path d="M135 83l0.8 1.3" stroke="#30303c" stroke-opacity="0.7" stroke-width="1.4"/><path d="M125 71l2.0 2.8" stroke="#e2e2e8" stroke-opacity="0.6" stroke-width="1.0"/><path d="M2 61l1.4 0.5" stroke="#c4c4ce" stroke-opacity="0.7" stroke-width="1.0"/><path d="M106 74l1.5 1.9" stroke="#e2e2e8" stroke-opacity="0.4" stroke-width="1.2"/><path d="M69 46l2.5 1.9" stroke="#c4c4ce" stroke-opacity="0.5" stroke-width="0.7"/><path d="M43 62l1.6 0.7" stroke="#44444f" stroke-opacity="0.8" stroke-width="1.1"/><path d="M35 62l1.4 1.3" stroke="#30303c" stroke-opacity="0.7" stroke-width="1.0"/><path d="M84 54l1.3 1.0" stroke="#30303c" stroke-opacity="0.7" stroke-width="1.5"/><path d="M40 46l2.2 1.1" stroke="#c4c4ce" stroke-opacity="0.5" stroke-width="1.1"/><path d="M97 77l2.6 2.4" stroke="#d6d6de" stroke-opacity="0.5" stroke-width="1.2"/><path d="M98 60l1.6 1.5" stroke="#e2e2e8" stroke-opacity="0.4" stroke-width="1.1"/><path d="M4 86l1.7 0.7" stroke="#e2e2e8" stroke-opacity="0.4" stroke-width="0.8"/><path d="M77 63l2.1 0.7" stroke="#c4c4ce" stroke-opacity="0.5" stroke-width="1.3"/><path d="M109 73l1.2 0.6" stroke="#44444f" stroke-opacity="0.7" stroke-width="1.1"/><path d="M88 74l1.5 1.8" stroke="#30303c" stroke-opacity="0.5" stroke-width="1.4"/><path d="M56 52l1.0 1.4" stroke="#e2e2e8" stroke-opacity="0.6" stroke-width="1.4"/><path d="M115 90l1.8 1.7" stroke="#e2e2e8" stroke-opacity="0.7" stroke-width="1.3"/><path d="M133 62l1.6 1.0" stroke="#c4c4ce" stroke-opacity="0.6" stroke-width="1.3"/><path d="M46 68l3.1 1.8" stroke="#c4c4ce" stroke-opacity="0.5" stroke-width="1.0"/><path d="M40 77l1.1 1.5" stroke="#d6d6de" stroke-opacity="0.4" stroke-width="1.0"/><path d="M113 58l1.3 1.0" stroke="#44444f" stroke-opacity="0.7" stroke-width="1.5"/><path d="M71 75l1.3 0.6" stroke="#c4c4ce" stroke-opacity="0.7" stroke-width="1.1"/><path d="M24 74l3.3 1.7" stroke="#44444f" stroke-opacity="0.4" stroke-width="1.4"/><path d="M139 77l2.6 1.1" stroke="#e2e2e8" stroke-opacity="0.4" stroke-width="1.0"/><path d="M78 40l2.9 2.4" stroke="#30303c" stroke-opacity="0.6" stroke-width="1.3"/><path d="M9 75l1.2 2.0" stroke="#3a3a46" stroke-opacity="0.5" stroke-width="1.1"/><path d="M49 64l2.1 3.2" stroke="#d6d6de" stroke-opacity="0.4" stroke-width="1.2"/><path d="M133 63l3.3 0.9" stroke="#d6d6de" stroke-opacity="0.4" stroke-width="0.9"/><path d="M104 60l2.1 1.6" stroke="#e2e2e8" stroke-opacity="0.6" stroke-width="1.3"/><path d="M101 85l0.9 0.9" stroke="#44444f" stroke-opacity="0.4" stroke-width="0.9"/><path d="M91 71l1.6 2.2" stroke="#d6d6de" stroke-opacity="0.5" stroke-width="1.3"/><path d="M117 88l1.8 1.0" stroke="#30303c" stroke-opacity="0.7" stroke-width="0.9"/><path d="M14 88l1.5 0.5" stroke="#3a3a46" stroke-opacity="0.7" stroke-width="1.0"/><path d="M114 58l1.6 1.7" stroke="#d6d6de" stroke-opacity="0.6" stroke-width="1.0"/><path d="M118 68l2.3 2.2" stroke="#e2e2e8" stroke-opacity="0.7" stroke-width="1.3"/><path d="M69 38l2.5 2.3" stroke="#3a3a46" stroke-opacity="0.4" stroke-width="0.8"/><path d="M29 86l2.2 3.3" stroke="#d6d6de" stroke-opacity="0.4" stroke-width="1.2"/><path d="M11 58l1.9 1.3" stroke="#d6d6de" stroke-opacity="0.6" stroke-width="0.7"/><path d="M101 83l1.4 1.0" stroke="#3a3a46" stroke-opacity="0.8" stroke-width="1.2"/><path d="M14 84l2.0 0.7" stroke="#44444f" stroke-opacity="0.8" stroke-width="1.2"/><path d="M27 77l1.4 1.6" stroke="#d6d6de" stroke-opacity="0.7" stroke-width="1.3"/><path d="M117 69l2.1 3.0" stroke="#3a3a46" stroke-opacity="0.7" stroke-width="1.0"/><path d="M104 53l1.7 1.3" stroke="#c4c4ce" stroke-opacity="0.8" stroke-width="1.4"/><path d="M7 65l3.4 1.9" stroke="#c4c4ce" stroke-opacity="0.6" stroke-width="1.1"/><path d="M56 75l2.1 2.2" stroke="#44444f" stroke-opacity="0.4" stroke-width="1.2"/><path d="M106 61l2.2 0.7" stroke="#c4c4ce" stroke-opacity="0.4" stroke-width="0.9"/><path d="M40 53l2.3 1.5" stroke="#d6d6de" stroke-opacity="0.6" stroke-width="1.3"/><path d="M11 77l3.2 1.0" stroke="#30303c" stroke-opacity="0.5" stroke-width="1.5"/><path d="M123 76l2.4 1.6" stroke="#c4c4ce" stroke-opacity="0.6" stroke-width="1.2"/><path d="M53 41l2.3 2.0" stroke="#e2e2e8" stroke-opacity="0.7" stroke-width="0.7"/><path d="M111 75l2.5 1.6" stroke="#30303c" stroke-opacity="0.8" stroke-width="1.3"/><path d="M7 92l3.6 1.2" stroke="#3a3a46" stroke-opacity="0.7" stroke-width="0.9"/><path d="M109 53l0.9 1.2" stroke="#30303c" stroke-opacity="0.8" stroke-width="1.4"/><path d="M87 47l2.4 1.7" stroke="#d6d6de" stroke-opacity="0.5" stroke-width="0.8"/><path d="M52 35l1.8 1.6" stroke="#44444f" stroke-opacity="0.5" stroke-width="1.3"/><path d="M76 78l2.6 2.9" stroke="#d6d6de" stroke-opacity="0.6" stroke-width="0.9"/><path d="M73 71l1.5 1.3" stroke="#44444f" stroke-opacity="0.6" stroke-width="1.2"/><path d="M108 59l1.0 1.6" stroke="#44444f" stroke-opacity="0.4" stroke-width="0.7"/><path d="M39 58l2.8 1.0" stroke="#d6d6de" stroke-opacity="0.7" stroke-width="1.4"/><path d="M23 64l3.2 2.4" stroke="#c4c4ce" stroke-opacity="0.5" stroke-width="1.3"/><path d="M121 58l1.0 1.2" stroke="#30303c" stroke-opacity="0.5" stroke-width="1.3"/><path d="M56 41l1.0 1.3" stroke="#c4c4ce" stroke-opacity="0.6" stroke-width="1.3"/><path d="M133 73l2.1 0.7" stroke="#30303c" stroke-opacity="0.6" stroke-width="1.0"/><path d="M82 73l1.5 2.0" stroke="#c4c4ce" stroke-opacity="0.4" stroke-width="1.2"/><path d="M12 65l2.2 2.3" stroke="#d6d6de" stroke-opacity="0.4" stroke-width="1.2"/><path d="M47 66l1.7 1.2" stroke="#e2e2e8" stroke-opacity="0.8" stroke-width="1.1"/><path d="M116 65l1.8 1.1" stroke="#44444f" stroke-opacity="0.5" stroke-width="1.0"/><path d="M53 44l1.9 1.2" stroke="#e2e2e8" stroke-opacity="0.5" stroke-width="1.0"/><path d="M22 77l1.6 0.6" stroke="#c4c4ce" stroke-opacity="0.7" stroke-width="0.9"/><path d="M8 61l1.9 0.6" stroke="#3a3a46" stroke-opacity="0.4" stroke-width="1.1"/><path d="M113 56l1.0 1.1" stroke="#30303c" stroke-opacity="0.4" stroke-width="1.2"/><path d="M14 85l1.6 1.7" stroke="#44444f" stroke-opacity="0.5" stroke-width="1.1"/><path d="M50 60l2.0 0.8" stroke="#e2e2e8" stroke-opacity="0.4" stroke-width="1.2"/><path d="M7 83l3.4 2.0" stroke="#c4c4ce" stroke-opacity="0.7" stroke-width="1.4"/><path d="M138 80l1.8 1.9" stroke="#3a3a46" stroke-opacity="0.8" stroke-width="1.4"/><path d="M35 52l2.1 2.1" stroke="#c4c4ce" stroke-opacity="0.5" stroke-width="0.9"/><path d="M140 62l1.9 0.7" stroke="#30303c" stroke-opacity="0.8" stroke-width="1.3"/><path d="M2 75l3.0 1.7" stroke="#c4c4ce" stroke-opacity="0.4" stroke-width="0.9"/><path d="M103 74l1.7 0.7" stroke="#d6d6de" stroke-opacity="0.8" stroke-width="1.4"/><path d="M90 82l1.6 2.2" stroke="#3a3a46" stroke-opacity="0.8" stroke-width="1.0"/><path d="M79 77l2.3 1.1" stroke="#d6d6de" stroke-opacity="0.7" stroke-width="1.0"/><path d="M76 58l1.0 1.7" stroke="#30303c" stroke-opacity="0.8" stroke-width="1.4"/><path d="M130 73l1.6 1.1" stroke="#3a3a46" stroke-opacity="0.4" stroke-width="1.0"/><path d="M37 78l1.9 1.8" stroke="#3a3a46" stroke-opacity="0.6" stroke-width="0.7"/><path d="M82 47l1.0 1.5" stroke="#d6d6de" stroke-opacity="0.4" stroke-width="0.9"/><path d="M103 54l2.1 1.5" stroke="#44444f" stroke-opacity="0.6" stroke-width="1.1"/><path d="M3 65l1.2 1.2" stroke="#3a3a46" stroke-opacity="0.4" stroke-width="1.1"/><path d="M76 44l3.1 1.7" stroke="#d6d6de" stroke-opacity="0.6" stroke-width="1.5"/><path d="M96 50l1.3 0.5" stroke="#44444f" stroke-opacity="0.6" stroke-width="1.5"/><path d="M119 79l1.0 0.7" stroke="#30303c" stroke-opacity="0.5" stroke-width="0.8"/><path d="M111 86l2.4 2.6" stroke="#30303c" stroke-opacity="0.5" stroke-width="1.0"/><path d="M78 50l1.8 1.2" stroke="#3a3a46" stroke-opacity="0.4" stroke-width="1.0"/><path d="M16 65l1.6 1.2" stroke="#3a3a46" stroke-opacity="0.7" stroke-width="0.8"/><path d="M20 58l2.1 2.3" stroke="#c4c4ce" stroke-opacity="0.4" stroke-width="1.1"/><path d="M101 54l0.7 1.1" stroke="#d6d6de" stroke-opacity="0.5" stroke-width="1.4"/><path d="M133 63l1.6 0.7" stroke="#3a3a46" stroke-opacity="0.5" stroke-width="1.0"/><path d="M2 72l1.6 2.7" stroke="#44444f" stroke-opacity="0.8" stroke-width="1.1"/><path d="M38 50l1.7 1.2" stroke="#d6d6de" stroke-opacity="0.6" stroke-width="1.3"/><path d="M119 78l1.1 1.2" stroke="#44444f" stroke-opacity="0.5" stroke-width="1.2"/><path d="M74 60l1.0 1.5" stroke="#44444f" stroke-opacity="0.7" stroke-width="0.9"/><path d="M136 80l1.7 0.6" stroke="#e2e2e8" stroke-opacity="0.5" stroke-width="1.0"/><path d="M13 87l1.1 1.6" stroke="#44444f" stroke-opacity="0.4" stroke-width="1.4"/><path d="M78 61l2.5 1.3" stroke="#3a3a46" stroke-opacity="0.6" stroke-width="0.8"/><path d="M119 65l3.3 1.6" stroke="#d6d6de" stroke-opacity="0.4" stroke-width="1.1"/><path d="M11 55l0.9 1.5" stroke="#44444f" stroke-opacity="0.4" stroke-width="1.3"/><path d="M122 89l2.1 2.0" stroke="#30303c" stroke-opacity="0.4" stroke-width="1.1"/><path d="M21 69l2.6 1.1" stroke="#c4c4ce" stroke-opacity="0.5" stroke-width="1.4"/><path d="M8 84l2.1 2.5" stroke="#3a3a46" stroke-opacity="0.6" stroke-width="1.1"/><path d="M59 61l2.0 2.4" stroke="#3a3a46" stroke-opacity="0.8" stroke-width="1.1"/><path d="M130 81l3.3 1.2" stroke="#e2e2e8" stroke-opacity="0.5" stroke-width="1.1"/><path d="M61 37l3.3 1.8" stroke="#c4c4ce" stroke-opacity="0.7" stroke-width="1.2"/><path d="M108 63l2.7 0.9" stroke="#c4c4ce" stroke-opacity="0.5" stroke-width="1.4"/><path d="M140 75l0.8 1.2" stroke="#e2e2e8" stroke-opacity="0.5" stroke-width="0.9"/><path d="M10 89l2.8 2.8" stroke="#3a3a46" stroke-opacity="0.6" stroke-width="0.8"/><path d="M94 64l1.5 0.5" stroke="#d6d6de" stroke-opacity="0.4" stroke-width="1.1"/><path d="M137 59l1.7 0.9" stroke="#d6d6de" stroke-opacity="0.5" stroke-width="1.1"/><path d="M76 43l2.8 1.3" stroke="#c4c4ce" stroke-opacity="0.8" stroke-width="0.9"/><path d="M72 75l3.2 2.3" stroke="#c4c4ce" stroke-opacity="0.7" stroke-width="1.3"/><path d="M8 67l2.0 3.0" stroke="#e2e2e8" stroke-opacity="0.7" stroke-width="1.5"/><path d="M29 78l1.0 1.4" stroke="#d6d6de" stroke-opacity="0.5" stroke-width="1.4"/><path d="M138 69l1.4 1.9" stroke="#c4c4ce" stroke-opacity="0.5" stroke-width="0.8"/><path d="M124 61l2.8 1.4" stroke="#44444f" stroke-opacity="0.6" stroke-width="1.3"/><path d="M54 57l2.8 2.4" stroke="#c4c4ce" stroke-opacity="0.8" stroke-width="0.8"/><path d="M33 55l2.5 1.8" stroke="#e2e2e8" stroke-opacity="0.4" stroke-width="1.4"/><path d="M1 79l2.2 1.5" stroke="#d6d6de" stroke-opacity="0.5" stroke-width="1.3"/><path d="M35 57l2.5 1.1" stroke="#30303c" stroke-opacity="0.6" stroke-width="1.4"/><path d="M84 41l3.5 1.1" stroke="#e2e2e8" stroke-opacity="0.8" stroke-width="1.0"/><path d="M70 38l1.2 1.6" stroke="#44444f" stroke-opacity="0.7" stroke-width="1.1"/><path d="M86 73l1.2 0.9" stroke="#44444f" stroke-opacity="0.7" stroke-width="1.3"/><path d="M114 62l2.3 1.1" stroke="#c4c4ce" stroke-opacity="0.5" stroke-width="0.9"/><path d="M140 62l1.4 2.0" stroke="#e2e2e8" stroke-opacity="0.4" stroke-width="1.1"/><path d="M63 54l1.2 1.5" stroke="#d6d6de" stroke-opacity="0.6" stroke-width="1.1"/><path d="M114 62l1.4 0.8" stroke="#c4c4ce" stroke-opacity="0.7" stroke-width="1.3"/><path d="M112 83l1.9 1.8" stroke="#3a3a46" stroke-opacity="0.5" stroke-width="0.8"/><path d="M99 82l3.2 1.0" stroke="#3a3a46" stroke-opacity="0.7" stroke-width="1.3"/><path d="M138 64l2.5 2.2" stroke="#e2e2e8" stroke-opacity="0.6" stroke-width="1.3"/><path d="M6 65l3.4 1.3" stroke="#c4c4ce" stroke-opacity="0.6" stroke-width="1.4"/><path d="M140 82l1.7 2.7" stroke="#c4c4ce" stroke-opacity="0.5" stroke-width="1.1"/><path d="M35 65l3.3 2.0" stroke="#e2e2e8" stroke-opacity="0.4" stroke-width="0.8"/><path d="M84 81l2.5 2.1" stroke="#44444f" stroke-opacity="0.8" stroke-width="0.8"/><path d="M124 90l1.5 1.0" stroke="#c4c4ce" stroke-opacity="0.5" stroke-width="0.8"/><path d="M79 45l1.6 0.7" stroke="#c4c4ce" stroke-opacity="0.6" stroke-width="1.1"/><path d="M90 52l2.0 1.6" stroke="#d6d6de" stroke-opacity="0.7" stroke-width="1.0"/><path d="M40 41l1.5 0.8" stroke="#e2e2e8" stroke-opacity="0.7" stroke-width="0.9"/><path d="M52 35l3.3 2.0" stroke="#44444f" stroke-opacity="0.7" stroke-width="0.8"/><path d="M144 87l1.5 2.0" stroke="#3a3a46" stroke-opacity="0.7" stroke-width="1.1"/><path d="M8 70l1.8 0.5" stroke="#e2e2e8" stroke-opacity="0.4" stroke-width="0.9"/><path d="M59 55l2.5 1.9" stroke="#c4c4ce" stroke-opacity="0.7" stroke-width="1.2"/><path d="M21 62l1.4 1.5" stroke="#c4c4ce" stroke-opacity="0.6" stroke-width="1.0"/><path d="M15 67l2.7 1.1" stroke="#44444f" stroke-opacity="0.6" stroke-width="1.2"/><path d="M116 91l1.4 1.4" stroke="#30303c" stroke-opacity="0.6" stroke-width="1.0"/><path d="M18 83l1.4 1.7" stroke="#c4c4ce" stroke-opacity="0.4" stroke-width="1.1"/><path d="M71 74l1.4 1.5" stroke="#c4c4ce" stroke-opacity="0.4" stroke-width="1.3"/><path d="M51 56l1.8 2.0" stroke="#30303c" stroke-opacity="0.6" stroke-width="0.9"/><path d="M123 67l2.1 3.1" stroke="#d6d6de" stroke-opacity="0.8" stroke-width="0.9"/><path d="M54 66l1.4 1.5" stroke="#30303c" stroke-opacity="0.4" stroke-width="1.0"/><path d="M128 77l1.4 1.4" stroke="#c4c4ce" stroke-opacity="0.5" stroke-width="1.0"/><path d="M129 59l2.9 1.3" stroke="#d6d6de" stroke-opacity="0.6" stroke-width="1.0"/><path d="M60 47l2.0 2.9" stroke="#c4c4ce" stroke-opacity="0.4" stroke-width="0.8"/><path d="M73 50l1.1 1.9" stroke="#d6d6de" stroke-opacity="0.5" stroke-width="0.9"/><path d="M32 71l1.9 3.3" stroke="#e2e2e8" stroke-opacity="0.6" stroke-width="1.2"/><path d="M79 63l1.7 2.2" stroke="#3a3a46" stroke-opacity="0.5" stroke-width="0.8"/><path d="M3 85l1.5 1.0" stroke="#d6d6de" stroke-opacity="0.7" stroke-width="0.8"/><path d="M90 64l2.4 1.5" stroke="#e2e2e8" stroke-opacity="0.7" stroke-width="1.1"/><path d="M93 61l1.8 2.6" stroke="#30303c" stroke-opacity="0.8" stroke-width="1.4"/><path d="M128 68l2.8 2.2" stroke="#30303c" stroke-opacity="0.4" stroke-width="1.4"/><path d="M125 59l1.5 1.2" stroke="#3a3a46" stroke-opacity="0.5" stroke-width="1.2"/><path d="M53 57l1.0 1.4" stroke="#e2e2e8" stroke-opacity="0.7" stroke-width="1.2"/><path d="M61 64l1.8 2.3" stroke="#30303c" stroke-opacity="0.4" stroke-width="1.2"/><path d="M42 63l3.2 2.3" stroke="#30303c" stroke-opacity="0.5" stroke-width="0.9"/><path d="M36 71l1.6 1.6" stroke="#d6d6de" stroke-opacity="0.7" stroke-width="0.8"/><path d="M6 66l1.6 2.8" stroke="#c4c4ce" stroke-opacity="0.8" stroke-width="1.4"/><path d="M123 62l1.1 0.8" stroke="#44444f" stroke-opacity="0.5" stroke-width="1.0"/><path d="M89 74l3.3 2.1" stroke="#44444f" stroke-opacity="0.5" stroke-width="1.4"/><path d="M64 69l1.6 2.3" stroke="#3a3a46" stroke-opacity="0.4" stroke-width="1.0"/><path d="M3 77l1.2 1.1" stroke="#d6d6de" stroke-opacity="0.4" stroke-width="0.9"/><path d="M79 61l1.6 0.4" stroke="#44444f" stroke-opacity="0.4" stroke-width="0.8"/><path d="M70 77l1.0 1.4" stroke="#c4c4ce" stroke-opacity="0.5" stroke-width="1.1"/><path d="M80 48l1.8 2.3" stroke="#d6d6de" stroke-opacity="0.8" stroke-width="1.4"/><path d="M143 75l2.4 2.6" stroke="#d6d6de" stroke-opacity="0.8" stroke-width="1.1"/><path d="M97 59l1.0 0.8" stroke="#c4c4ce" stroke-opacity="0.4" stroke-width="0.9"/><path d="M138 60l1.7 2.1" stroke="#44444f" stroke-opacity="0.6" stroke-width="0.9"/><path d="M77 64l2.2 2.6" stroke="#3a3a46" stroke-opacity="0.5" stroke-width="1.3"/><path d="M36 81l1.0 0.8" stroke="#c4c4ce" stroke-opacity="0.7" stroke-width="1.1"/><path d="M40 79l2.4 1.7" stroke="#d6d6de" stroke-opacity="0.8" stroke-width="1.0"/><path d="M14 66l3.0 1.4" stroke="#44444f" stroke-opacity="0.5" stroke-width="0.9"/><path d="M50 34l2.1 0.9" stroke="#c4c4ce" stroke-opacity="0.6" stroke-width="1.0"/><path d="M46 53l3.5 1.6" stroke="#3a3a46" stroke-opacity="0.4" stroke-width="1.2"/><path d="M83 54l1.4 2.1" stroke="#e2e2e8" stroke-opacity="0.7" stroke-width="1.4"/><path d="M10 69l2.2 3.1" stroke="#44444f" stroke-opacity="0.8" stroke-width="0.8"/><path d="M91 61l2.7 1.2" stroke="#c4c4ce" stroke-opacity="0.7" stroke-width="1.2"/><path d="M73 60l0.9 1.2" stroke="#3a3a46" stroke-opacity="0.5" stroke-width="1.1"/><path d="M120 74l1.7 1.4" stroke="#d6d6de" stroke-opacity="0.6" stroke-width="1.1"/><path d="M41 40l1.2 0.7" stroke="#c4c4ce" stroke-opacity="0.8" stroke-width="1.3"/><path d="M45 62l3.3 2.2" stroke="#30303c" stroke-opacity="0.7" stroke-width="1.4"/><path d="M16 61l2.4 2.9" stroke="#d6d6de" stroke-opacity="0.7" stroke-width="1.1"/><path d="M143 63l2.5 2.7" stroke="#c4c4ce" stroke-opacity="0.6" stroke-width="1.1"/><path d="M125 63l1.4 1.4" stroke="#e2e2e8" stroke-opacity="0.5" stroke-width="1.3"/><path d="M126 59l2.5 0.8" stroke="#30303c" stroke-opacity="0.7" stroke-width="0.8"/><path d="M53 34l1.1 0.7" stroke="#3a3a46" stroke-opacity="0.4" stroke-width="0.8"/><path d="M56 68l1.7 2.4" stroke="#e2e2e8" stroke-opacity="0.4" stroke-width="1.2"/><path d="M126 82l1.2 1.2" stroke="#30303c" stroke-opacity="0.7" stroke-width="1.3"/><path d="M122 90l2.8 1.3" stroke="#d6d6de" stroke-opacity="0.4" stroke-width="1.2"/><path d="M6 66l1.7 1.0" stroke="#3a3a46" stroke-opacity="0.4" stroke-width="1.5"/><path d="M100 79l1.9 1.1" stroke="#d6d6de" stroke-opacity="0.4" stroke-width="0.9"/><path d="M54 56l1.8 0.7" stroke="#d6d6de" stroke-opacity="0.5" stroke-width="1.3"/><path d="M34 71l1.2 1.6" stroke="#d6d6de" stroke-opacity="0.7" stroke-width="1.1"/><path d="M134 72l2.4 2.2" stroke="#d6d6de" stroke-opacity="0.5" stroke-width="1.0"/><path d="M84 67l1.4 1.4" stroke="#e2e2e8" stroke-opacity="0.5" stroke-width="1.0"/><path d="M19 88l1.6 1.1" stroke="#44444f" stroke-opacity="0.4" stroke-width="1.2"/><path d="M65 45l3.3 0.9" stroke="#e2e2e8" stroke-opacity="0.7" stroke-width="1.0"/><path d="M129 90l0.9 0.9" stroke="#3a3a46" stroke-opacity="0.4" stroke-width="1.1"/><path d="M69 63l1.2 0.6" stroke="#c4c4ce" stroke-opacity="0.5" stroke-width="0.9"/><path d="M78 42l0.7 1.2" stroke="#44444f" stroke-opacity="0.8" stroke-width="1.1"/><path d="M84 61l2.8 2.2" stroke="#d6d6de" stroke-opacity="0.4" stroke-width="1.5"/><path d="M100 81l2.6 2.6" stroke="#3a3a46" stroke-opacity="0.7" stroke-width="0.8"/><path d="M67 37l1.9 3.0" stroke="#30303c" stroke-opacity="0.4" stroke-width="1.0"/><path d="M81 78l3.2 1.1" stroke="#44444f" stroke-opacity="0.4" stroke-width="1.2"/><path d="M19 57l2.3 1.2" stroke="#30303c" stroke-opacity="0.6" stroke-width="1.1"/><path d="M143 79l1.6 0.6" stroke="#d6d6de" stroke-opacity="0.7" stroke-width="1.1"/><path d="M21 76l1.2 1.1" stroke="#44444f" stroke-opacity="0.8" stroke-width="1.0"/><path d="M2 64l2.3 2.6" stroke="#30303c" stroke-opacity="0.5" stroke-width="1.2"/><path d="M58 56l2.9 2.4" stroke="#30303c" stroke-opacity="0.5" stroke-width="0.9"/><path d="M31 74l2.5 1.7" stroke="#30303c" stroke-opacity="0.6" stroke-width="1.4"/><path d="M136 78l1.5 2.1" stroke="#c4c4ce" stroke-opacity="0.5" stroke-width="1.2"/><path d="M32 54l2.9 1.8" stroke="#3a3a46" stroke-opacity="0.6" stroke-width="0.7"/><path d="M120 58l2.1 1.7" stroke="#d6d6de" stroke-opacity="0.7" stroke-width="1.3"/><path d="M5 70l3.0 2.4" stroke="#e2e2e8" stroke-opacity="0.4" stroke-width="1.0"/><path d="M139 60l1.5 2.4" stroke="#e2e2e8" stroke-opacity="0.7" stroke-width="1.4"/><path d="M30 83l1.2 0.5" stroke="#c4c4ce" stroke-opacity="0.4" stroke-width="0.8"/><path d="M36 55l2.8 1.9" stroke="#3a3a46" stroke-opacity="0.4" stroke-width="1.2"/><path d="M14 69l1.6 0.8" stroke="#d6d6de" stroke-opacity="0.7" stroke-width="1.3"/><path d="M92 48l3.2 1.0" stroke="#44444f" stroke-opacity="0.4" stroke-width="1.0"/><path d="M103 75l2.8 1.3" stroke="#e2e2e8" stroke-opacity="0.6" stroke-width="1.0"/><path d="M90 81l3.2 1.4" stroke="#e2e2e8" stroke-opacity="0.7" stroke-width="1.0"/><path d="M64 54l1.3 0.8" stroke="#30303c" stroke-opacity="0.7" stroke-width="1.5"/><path d="M51 62l2.2 2.3" stroke="#e2e2e8" stroke-opacity="0.8" stroke-width="1.1"/><path d="M133 65l1.8 1.5" stroke="#30303c" stroke-opacity="0.4" stroke-width="0.9"/><path d="M59 72l3.5 1.5" stroke="#3a3a46" stroke-opacity="0.6" stroke-width="1.3"/><path d="M56 65l1.0 1.1" stroke="#e2e2e8" stroke-opacity="0.5" stroke-width="0.7"/><path d="M119 79l1.4 1.8" stroke="#3a3a46" stroke-opacity="0.6" stroke-width="1.4"/><path d="M52 52l1.3 2.2" stroke="#e2e2e8" stroke-opacity="0.6" stroke-width="1.2"/><path d="M51 44l0.7 1.1" stroke="#3a3a46" stroke-opacity="0.5" stroke-width="1.3"/><path d="M62 61l1.4 2.4" stroke="#3a3a46" stroke-opacity="0.5" stroke-width="0.8"/><path d="M27 78l2.5 1.9" stroke="#e2e2e8" stroke-opacity="0.5" stroke-width="0.8"/><path d="M71 57l1.3 2.1" stroke="#c4c4ce" stroke-opacity="0.4" stroke-width="1.3"/><path d="M31 59l2.0 1.8" stroke="#d6d6de" stroke-opacity="0.6" stroke-width="1.4"/><path d="M133 82l1.2 1.9" stroke="#3a3a46" stroke-opacity="0.6" stroke-width="1.4"/><path d="M141 64l2.0 0.9" stroke="#44444f" stroke-opacity="0.5" stroke-width="0.9"/><path d="M19 73l1.7 0.9" stroke="#e2e2e8" stroke-opacity="0.4" stroke-width="1.0"/><path d="M118 75l1.5 0.5" stroke="#30303c" stroke-opacity="0.6" stroke-width="1.2"/><path d="M132 84l1.8 0.6" stroke="#3a3a46" stroke-opacity="0.6" stroke-width="1.1"/><path d="M69 64l2.0 0.9" stroke="#3a3a46" stroke-opacity="0.6" stroke-width="1.0"/><path d="M33 86l0.8 1.3" stroke="#30303c" stroke-opacity="0.5" stroke-width="0.7"/><path d="M134 91l1.5 0.9" stroke="#30303c" stroke-opacity="0.4" stroke-width="1.2"/><path d="M10 56l1.4 2.4" stroke="#44444f" stroke-opacity="0.6" stroke-width="1.0"/><path d="M98 52l2.3 2.1" stroke="#44444f" stroke-opacity="0.4" stroke-width="0.8"/><path d="M28 81l0.7 1.1" stroke="#30303c" stroke-opacity="0.4" stroke-width="0.9"/><path d="M48 57l2.0 3.3" stroke="#30303c" stroke-opacity="0.7" stroke-width="1.4"/><path d="M3 75l2.0 2.0" stroke="#e2e2e8" stroke-opacity="0.5" stroke-width="0.8"/><path d="M111 58l3.5 1.3" stroke="#c4c4ce" stroke-opacity="0.8" stroke-width="0.7"/><path d="M5 86l2.5 1.9" stroke="#44444f" stroke-opacity="0.7" stroke-width="0.7"/><path d="M10 84l2.4 3.1" stroke="#3a3a46" stroke-opacity="0.4" stroke-width="1.0"/><path d="M129 66l1.1 0.7" stroke="#44444f" stroke-opacity="0.7" stroke-width="1.1"/><path d="M34 83l1.6 0.6" stroke="#c4c4ce" stroke-opacity="0.4" stroke-width="1.4"/><path d="M27 80l2.2 1.9" stroke="#e2e2e8" stroke-opacity="0.7" stroke-width="0.8"/><path d="M33 60l1.4 1.6" stroke="#30303c" stroke-opacity="0.6" stroke-width="0.8"/><path d="M110 61l1.5 1.0" stroke="#3a3a46" stroke-opacity="0.7" stroke-width="0.8"/><path d="M11 86l3.3 2.2" stroke="#30303c" stroke-opacity="0.5" stroke-width="1.3"/><path d="M55 44l1.9 2.1" stroke="#d6d6de" stroke-opacity="0.4" stroke-width="0.7"/><path d="M137 73l1.6 0.5" stroke="#c4c4ce" stroke-opacity="0.8" stroke-width="1.4"/><path d="M49 65l1.1 1.2" stroke="#30303c" stroke-opacity="0.5" stroke-width="1.3"/><path d="M34 81l2.6 2.6" stroke="#e2e2e8" stroke-opacity="0.4" stroke-width="0.9"/><path d="M135 61l1.5 0.9" stroke="#c4c4ce" stroke-opacity="0.5" stroke-width="1.2"/><path d="M39 61l2.9 2.0" stroke="#3a3a46" stroke-opacity="0.8" stroke-width="0.8"/><path d="M32 53l1.3 1.6" stroke="#44444f" stroke-opacity="0.4" stroke-width="1.5"/><path d="M92 50l1.5 2.1" stroke="#c4c4ce" stroke-opacity="0.6" stroke-width="1.4"/><path d="M67 44l2.0 3.3" stroke="#e2e2e8" stroke-opacity="0.5" stroke-width="0.7"/><path d="M23 62l3.0 1.4" stroke="#d6d6de" stroke-opacity="0.5" stroke-width="1.5"/><path d="M88 46l1.1 0.6" stroke="#d6d6de" stroke-opacity="0.5" stroke-width="1.4"/><path d="M81 67l1.3 1.4" stroke="#d6d6de" stroke-opacity="0.7" stroke-width="1.2"/><path d="M60 58l2.2 1.2" stroke="#30303c" stroke-opacity="0.7" stroke-width="1.2"/><path d="M128 80l1.9 1.6" stroke="#30303c" stroke-opacity="0.8" stroke-width="1.0"/><path d="M80 55l2.7 1.6" stroke="#44444f" stroke-opacity="0.7" stroke-width="1.0"/><path d="M81 59l3.0 2.3" stroke="#d6d6de" stroke-opacity="0.6" stroke-width="1.0"/><path d="M72 71l2.7 0.8" stroke="#e2e2e8" stroke-opacity="0.6" stroke-width="1.2"/><path d="M140 69l2.3 0.8" stroke="#30303c" stroke-opacity="0.6" stroke-width="1.0"/><path d="M6 63l2.8 1.0" stroke="#d6d6de" stroke-opacity="0.8" stroke-width="1.1"/><path d="M69 49l2.8 2.2" stroke="#d6d6de" stroke-opacity="0.6" stroke-width="1.3"/><path d="M64 48l2.9 1.1" stroke="#e2e2e8" stroke-opacity="0.7" stroke-width="1.3"/><path d="M115 60l3.1 1.7" stroke="#d6d6de" stroke-opacity="0.8" stroke-width="1.2"/><path d="M68 62l2.6 1.7" stroke="#30303c" stroke-opacity="0.8" stroke-width="0.8"/><path d="M37 54l2.1 1.0" stroke="#c4c4ce" stroke-opacity="0.8" stroke-width="1.2"/><path d="M18 82l0.8 1.1" stroke="#30303c" stroke-opacity="0.6" stroke-width="1.5"/><path d="M92 65l2.0 1.2" stroke="#d6d6de" stroke-opacity="0.6" stroke-width="1.5"/><path d="M33 73l1.4 0.6" stroke="#c4c4ce" stroke-opacity="0.5" stroke-width="0.8"/><path d="M93 74l3.3 1.9" stroke="#30303c" stroke-opacity="0.5" stroke-width="1.5"/><path d="M89 82l2.9 1.7" stroke="#e2e2e8" stroke-opacity="0.8" stroke-width="0.8"/><path d="M14 81l0.9 1.0" stroke="#c4c4ce" stroke-opacity="0.4" stroke-width="1.2"/><path d="M35 59l1.3 0.4" stroke="#e2e2e8" stroke-opacity="0.7" stroke-width="1.4"/><path d="M77 46l2.4 2.9" stroke="#30303c" stroke-opacity="0.4" stroke-width="1.0"/><path d="M99 79l2.0 1.9" stroke="#3a3a46" stroke-opacity="0.6" stroke-width="1.0"/><path d="M2 62l0.9 1.5" stroke="#d6d6de" stroke-opacity="0.6" stroke-width="0.9"/><path d="M104 79l1.4 1.6" stroke="#44444f" stroke-opacity="0.4" stroke-width="0.7"/><path d="M141 90l1.6 0.8" stroke="#44444f" stroke-opacity="0.4" stroke-width="0.9"/><path d="M100 67l1.3 0.9" stroke="#e2e2e8" stroke-opacity="0.5" stroke-width="1.4"/><path d="M35 81l2.2 0.8" stroke="#d6d6de" stroke-opacity="0.4" stroke-width="1.1"/><path d="M2 61l1.9 1.4" stroke="#d6d6de" stroke-opacity="0.7" stroke-width="1.1"/><path d="M85 54l3.7 1.4" stroke="#d6d6de" stroke-opacity="0.7" stroke-width="1.3"/><path d="M83 70l3.3 1.5" stroke="#d6d6de" stroke-opacity="0.7" stroke-width="1.1"/><path d="M53 47l2.2 1.2" stroke="#3a3a46" stroke-opacity="0.7" stroke-width="1.2"/><path d="M13 82l2.3 1.9" stroke="#44444f" stroke-opacity="0.8" stroke-width="1.5"/><path d="M113 68l2.0 2.3" stroke="#e2e2e8" stroke-opacity="0.6" stroke-width="1.2"/><path d="M144 75l1.6 0.9" stroke="#d6d6de" stroke-opacity="0.6" stroke-width="1.5"/><path d="M49 57l1.0 0.7" stroke="#3a3a46" stroke-opacity="0.4" stroke-width="1.0"/><path d="M124 67l2.6 2.9" stroke="#c4c4ce" stroke-opacity="0.6" stroke-width="1.4"/><path d="M121 70l1.9 2.1" stroke="#44444f" stroke-opacity="0.5" stroke-width="1.1"/><path d="M37 71l2.2 0.9" stroke="#e2e2e8" stroke-opacity="0.5" stroke-width="1.3"/><path d="M137 68l2.2 1.7" stroke="#d6d6de" stroke-opacity="0.8" stroke-width="1.3"/><path d="M71 57l2.0 3.2" stroke="#30303c" stroke-opacity="0.6" stroke-width="1.1"/><path d="M76 77l1.5 2.4" stroke="#d6d6de" stroke-opacity="0.4" stroke-width="0.9"/><path d="M100 77l3.0 1.9" stroke="#c4c4ce" stroke-opacity="0.6" stroke-width="1.1"/><path d="M78 54l1.5 1.8" stroke="#44444f" stroke-opacity="0.5" stroke-width="0.8"/><path d="M17 57l2.3 2.6" stroke="#c4c4ce" stroke-opacity="0.4" stroke-width="1.2"/><path d="M96 59l1.6 1.5" stroke="#c4c4ce" stroke-opacity="0.5" stroke-width="1.4"/><path d="M31 70l1.7 1.2" stroke="#44444f" stroke-opacity="0.5" stroke-width="1.1"/><path d="M52 51l2.5 1.4" stroke="#3a3a46" stroke-opacity="0.7" stroke-width="1.4"/><path d="M25 62l1.9 2.2" stroke="#e2e2e8" stroke-opacity="0.7" stroke-width="0.9"/><path d="M127 88l1.6 1.0" stroke="#e2e2e8" stroke-opacity="0.7" stroke-width="1.4"/><path d="M107 82l1.7 2.6" stroke="#c4c4ce" stroke-opacity="0.4" stroke-width="1.0"/><path d="M142 80l3.4 1.1" stroke="#d6d6de" stroke-opacity="0.8" stroke-width="1.2"/><path d="M80 41l1.1 1.2" stroke="#c4c4ce" stroke-opacity="0.4" stroke-width="0.7"/><path d="M36 45l3.3 1.8" stroke="#c4c4ce" stroke-opacity="0.5" stroke-width="1.2"/><path d="M39 46l2.9 2.1" stroke="#c4c4ce" stroke-opacity="0.6" stroke-width="1.4"/><path d="M126 85l1.7 1.8" stroke="#c4c4ce" stroke-opacity="0.5" stroke-width="0.9"/><path d="M64 59l2.5 3.1" stroke="#3a3a46" stroke-opacity="0.4" stroke-width="0.9"/><path d="M5 85l2.6 1.4" stroke="#e2e2e8" stroke-opacity="0.7" stroke-width="1.3"/><path d="M107 69l1.8 1.5" stroke="#44444f" stroke-opacity="0.8" stroke-width="1.4"/><path d="M11 64l3.0 2.5" stroke="#c4c4ce" stroke-opacity="0.4" stroke-width="0.9"/><path d="M51 67l2.5 0.9" stroke="#3a3a46" stroke-opacity="0.7" stroke-width="1.3"/><path d="M64 76l2.8 2.5" stroke="#d6d6de" stroke-opacity="0.6" stroke-width="0.8"/><path d="M67 72l2.8 1.3" stroke="#e2e2e8" stroke-opacity="0.7" stroke-width="1.5"/><path d="M133 79l0.8 0.9" stroke="#44444f" stroke-opacity="0.4" stroke-width="1.3"/><path d="M48 67l2.6 0.9" stroke="#3a3a46" stroke-opacity="0.4" stroke-width="1.3"/><path d="M32 56l1.5 1.6" stroke="#30303c" stroke-opacity="0.6" stroke-width="1.3"/><path d="M128 80l2.5 3.1" stroke="#44444f" stroke-opacity="0.4" stroke-width="1.2"/><path d="M89 81l1.0 0.9" stroke="#e2e2e8" stroke-opacity="0.5" stroke-width="1.3"/><path d="M27 73l3.5 1.7" stroke="#d6d6de" stroke-opacity="0.7" stroke-width="0.8"/><path d="M27 64l1.2 1.6" stroke="#44444f" stroke-opacity="0.7" stroke-width="1.2"/><path d="M55 62l2.5 0.8" stroke="#c4c4ce" stroke-opacity="0.4" stroke-width="0.9"/><path d="M17 67l2.2 1.9" stroke="#e2e2e8" stroke-opacity="0.6" stroke-width="1.2"/><path d="M29 55l2.2 2.1" stroke="#3a3a46" stroke-opacity="0.4" stroke-width="1.3"/><path d="M11 87l1.2 0.5" stroke="#3a3a46" stroke-opacity="0.6" stroke-width="1.3"/><path d="M110 80l0.8 1.1" stroke="#d6d6de" stroke-opacity="0.6" stroke-width="1.4"/><path d="M35 72l1.1 1.2" stroke="#c4c4ce" stroke-opacity="0.6" stroke-width="1.4"/><path d="M5 61l1.8 0.8" stroke="#d6d6de" stroke-opacity="0.4" stroke-width="1.1"/><path d="M10 85l2.9 1.9" stroke="#44444f" stroke-opacity="0.6" stroke-width="1.0"/><path d="M68 38l2.7 1.2" stroke="#d6d6de" stroke-opacity="0.5" stroke-width="1.3"/></g>
</g></svg>
  <svg class="thumb" style="left:452px;top:734px" width="144" height="108" viewBox="0 0 144 108"><defs><clipPath id="t4l"><rect x="0" y="0" width="72" height="108"/></clipPath><clipPath id="t4r"><rect x="72" y="0" width="72" height="108"/></clipPath><filter id="t4s" x="-20%" y="-20%" width="140%" height="140%"><feGaussianBlur stdDeviation="0.8"/></filter>
<linearGradient id="t4b0" gradientUnits="userSpaceOnUse" x1="-151.33180866356957" y1="-153.33180866356957" x2="-40.66590433178479" y2="289.3318086635696"><stop offset="0" stop-color="#2c70e2"/><stop offset="1" stop-color="#96d6ff"/></linearGradient>
<linearGradient id="t4o0" gradientUnits="userSpaceOnUse" x1="70.0" y1="-153.33180866356957" x2="70.0" y2="289.3318086635696"><stop offset="0" stop-color="#ca8c42"/><stop offset="1" stop-color="#ce4678"/></linearGradient>
<linearGradient id="t4b1" gradientUnits="userSpaceOnUse" x1="-98.29750168060801" y1="-103.9682562173087" x2="-13.169882963850483" y2="236.5422186497214"><stop offset="0" stop-color="#5085e9"/><stop offset="1" stop-color="#a8d9ff"/></linearGradient>
<linearGradient id="t4o1" gradientUnits="userSpaceOnUse" x1="71.95773575290704" y1="-103.9682562173087" x2="71.95773575290704" y2="236.5422186497214"><stop offset="0" stop-color="#cb8c46"/><stop offset="1" stop-color="#cf4a78"/></linearGradient>
<linearGradient id="t4b2" gradientUnits="userSpaceOnUse" x1="-57.13717964555376" y1="-66.31540641617183" x2="8.345603982721272" y2="195.6157280969283"><stop offset="0" stop-color="#618fed"/><stop offset="1" stop-color="#b0daff"/></linearGradient>
<linearGradient id="t4o2" gradientUnits="userSpaceOnUse" x1="73.8283876109963" y1="-66.31540641617183" x2="73.8283876109963" y2="195.6157280969283"><stop offset="0" stop-color="#cc8c49"/><stop offset="1" stop-color="#cf4e78"/></linearGradient>
<linearGradient id="t4b3" gradientUnits="userSpaceOnUse" x1="-25.13504888891329" y1="-37.64947730376342" x2="25.236323132836723" y2="163.83601078323665"><stop offset="0" stop-color="#6e97f0"/><stop offset="1" stop-color="#b7dbff"/></linearGradient>
<linearGradient id="t4o3" gradientUnits="userSpaceOnUse" x1="75.60769515458674" y1="-37.64947730376342" x2="75.60769515458674" y2="163.83601078323665"><stop offset="0" stop-color="#cc8c4c"/><stop offset="1" stop-color="#d05278"/></linearGradient>
<linearGradient id="t4b4" gradientUnits="userSpaceOnUse" x1="-0.20371535822910403" y1="-15.873783739674572" x2="38.543493889270906" y2="139.11505325032547"><stop offset="0" stop-color="#7a9ef2"/><stop offset="1" stop-color="#bcdbff"/></linearGradient>
<linearGradient id="t4o4" gradientUnits="userSpaceOnUse" x1="77.29070313677092" y1="-15.873783739674572" x2="77.29070313677092" y2="139.11505325032547"><stop offset="0" stop-color="#cd8b50"/><stop offset="1" stop-color="#d15577"/></linearGradient>
<linearGradient id="t4b5" gradientUnits="userSpaceOnUse" x1="19.260457768957565" y1="0.6263035459120943" x2="49.066003343957576" y2="119.84848584591214"><stop offset="0" stop-color="#84a4f4"/><stop offset="1" stop-color="#c1dcff"/></linearGradient>
<linearGradient id="t4o5" gradientUnits="userSpaceOnUse" x1="78.87154891895759" y1="0.6263035459120943" x2="78.87154891895759" y2="119.84848584591214"><stop offset="0" stop-color="#ce8b54"/><stop offset="1" stop-color="#d15977"/></linearGradient>
<linearGradient id="t4b6" gradientUnits="userSpaceOnUse" x1="34.48846025050761" y1="13.09506196830582" x2="57.41580300050761" y2="104.80443296830583"><stop offset="0" stop-color="#8da9f6"/><stop offset="1" stop-color="#c6ddff"/></linearGradient>
<linearGradient id="t4o6" gradientUnits="userSpaceOnUse" x1="80.34314575050762" y1="13.09506196830582" x2="80.34314575050762" y2="104.80443296830583"><stop offset="0" stop-color="#cf8b57"/><stop offset="1" stop-color="#d25d77"/></linearGradient>
<linearGradient id="t4b7" gradientUnits="userSpaceOnUse" x1="46.423850170880634" y1="22.492565475479424" x2="64.06026767088063" y2="93.03823547547944"><stop offset="0" stop-color="#96aef8"/><stop offset="1" stop-color="#caddff"/></linearGradient>
<linearGradient id="t4o7" gradientUnits="userSpaceOnUse" x1="81.69668517088064" y1="22.492565475479424" x2="81.69668517088064" y2="93.03823547547944"><stop offset="0" stop-color="#d08b5a"/><stop offset="1" stop-color="#d36177"/></linearGradient>
<linearGradient id="t4b8" gradientUnits="userSpaceOnUse" x1="55.78784856432199" y1="29.56135125621825" x2="69.354323564322" y2="83.82725125621826"><stop offset="0" stop-color="#9eb3f9"/><stop offset="1" stop-color="#cedeff"/></linearGradient>
<linearGradient id="t4o8" gradientUnits="userSpaceOnUse" x1="82.920798564322" y1="29.56135125621825" x2="82.920798564322" y2="83.82725125621826"><stop offset="0" stop-color="#d18b5e"/><stop offset="1" stop-color="#d36577"/></linearGradient>
<linearGradient id="t4b9" gradientUnits="userSpaceOnUse" x1="63.1285" y1="34.8785" x2="73.56425" y2="76.6215"><stop offset="0" stop-color="#a5b8fb"/><stop offset="1" stop-color="#d2dfff"/></linearGradient>
<linearGradient id="t4o9" gradientUnits="userSpaceOnUse" x1="84.0" y1="34.8785" x2="84.0" y2="76.6215"><stop offset="0" stop-color="#d28a62"/><stop offset="1" stop-color="#d46876"/></linearGradient>
<linearGradient id="t4b10" gradientUnits="userSpaceOnUse" x1="68.85633789209636" y1="38.897579344415675" x2="76.88383789209637" y2="71.00757934441569"><stop offset="0" stop-color="#acbcfc"/><stop offset="1" stop-color="#d5dfff"/></linearGradient>
<linearGradient id="t4o10" gradientUnits="userSpaceOnUse" x1="84.91133789209637" y1="38.897579344415675" x2="84.91133789209637" y2="71.00757934441569"><stop offset="0" stop-color="#d28a65"/><stop offset="1" stop-color="#d56c76"/></linearGradient>
<linearGradient id="t4b11" gradientUnits="userSpaceOnUse" x1="73.26509982054026" y1="41.98678765702728" x2="79.44009982054025" y2="66.68678765702728"><stop offset="0" stop-color="#b3c0fe"/><stop offset="1" stop-color="#d9e0ff"/></linearGradient>
<linearGradient id="t4o11" gradientUnits="userSpaceOnUse" x1="85.61509982054025" y1="41.98678765702728" x2="85.61509982054025" y2="66.68678765702728"><stop offset="0" stop-color="#d38a68"/><stop offset="1" stop-color="#d57076"/></linearGradient>
<linearGradient id="t4b12" gradientUnits="userSpaceOnUse" x1="76.5" y1="44.5" x2="81.25" y2="63.5"><stop offset="0" stop-color="#bac4ff"/><stop offset="1" stop-color="#dce0ff"/></linearGradient>
<linearGradient id="t4o12" gradientUnits="userSpaceOnUse" x1="86.0" y1="44.5" x2="86.0" y2="63.5"><stop offset="0" stop-color="#d48a6c"/><stop offset="1" stop-color="#d67476"/></linearGradient>
<linearGradient id="t4mag" x1="0" y1="0" x2="0" y2="1"><stop offset="0" stop-color="#c01c78" stop-opacity="0"/><stop offset="0.6" stop-color="#c01c78" stop-opacity="0.45"/><stop offset="1" stop-color="#c01c78" stop-opacity="0.85"/></linearGradient>
<radialGradient id="t4cy" cx="0" cy="1" r="0.9"><stop offset="0" stop-color="#a8e0ff" stop-opacity="0.6"/><stop offset="1" stop-color="#a8e0ff" stop-opacity="0"/></radialGradient>
</defs>
<rect x="0" y="0" width="72" height="108" fill="#2a66d4"/><rect x="72" y="0" width="72" height="108" fill="#c08438"/>
<g clip-path="url(#t4l)">
<g transform="translate(70.0 68.0) rotate(-15.0)"><rect x="-220.5" y="-220.1" width="442.7" height="442.7" rx="79.7" fill="rgba(20,40,120,0.35)" filter="url(#t4s)"/><rect x="-221.3" y="-221.3" width="442.7" height="442.7" rx="79.7" fill="url(#t4b0)" stroke="rgba(255,255,255,0.3)" stroke-width="0.6"/></g>
<g transform="translate(72.0 66.3) rotate(-17.0)"><rect x="-169.5" y="-169.1" width="340.5" height="340.5" rx="61.3" fill="rgba(20,40,120,0.35)" filter="url(#t4s)"/><rect x="-170.3" y="-170.3" width="340.5" height="340.5" rx="61.3" fill="url(#t4b1)" stroke="rgba(255,255,255,0.3)" stroke-width="0.6"/></g>
<g transform="translate(73.8 64.7) rotate(-19.1)"><rect x="-130.2" y="-129.8" width="261.9" height="261.9" rx="47.1" fill="rgba(20,40,120,0.35)" filter="url(#t4s)"/><rect x="-131.0" y="-131.0" width="261.9" height="261.9" rx="47.1" fill="url(#t4b2)" stroke="rgba(255,255,255,0.3)" stroke-width="0.6"/></g>
<g transform="translate(75.6 63.1) rotate(-21.2)"><rect x="-99.9" y="-99.5" width="201.5" height="201.5" rx="36.3" fill="rgba(20,40,120,0.35)" filter="url(#t4s)"/><rect x="-100.7" y="-100.7" width="201.5" height="201.5" rx="36.3" fill="url(#t4b3)" stroke="rgba(255,255,255,0.3)" stroke-width="0.6"/></g>
<g transform="translate(77.3 61.6) rotate(-23.3)"><rect x="-76.7" y="-76.3" width="155.0" height="155.0" rx="27.9" fill="rgba(20,40,120,0.35)" filter="url(#t4s)"/><rect x="-77.5" y="-77.5" width="155.0" height="155.0" rx="27.9" fill="url(#t4b4)" stroke="rgba(255,255,255,0.3)" stroke-width="0.6"/></g>
<g transform="translate(78.9 60.2) rotate(-25.5)"><rect x="-58.8" y="-58.4" width="119.2" height="119.2" rx="21.5" fill="rgba(20,40,120,0.35)" filter="url(#t4s)"/><rect x="-59.6" y="-59.6" width="119.2" height="119.2" rx="21.5" fill="url(#t4b5)" stroke="rgba(255,255,255,0.3)" stroke-width="0.6"/></g>
<g transform="translate(80.3 58.9) rotate(-27.8)"><rect x="-45.1" y="-44.7" width="91.7" height="91.7" rx="16.5" fill="rgba(20,40,120,0.35)" filter="url(#t4s)"/><rect x="-45.9" y="-45.9" width="91.7" height="91.7" rx="16.5" fill="url(#t4b6)" stroke="rgba(255,255,255,0.3)" stroke-width="0.6"/></g>
<g transform="translate(81.7 57.8) rotate(-30.1)"><rect x="-34.5" y="-34.1" width="70.5" height="70.5" rx="12.7" fill="rgba(20,40,120,0.35)" filter="url(#t4s)"/><rect x="-35.3" y="-35.3" width="70.5" height="70.5" rx="12.7" fill="url(#t4b7)" stroke="rgba(255,255,255,0.3)" stroke-width="0.6"/></g>
<g transform="translate(82.9 56.7) rotate(-32.5)"><rect x="-26.3" y="-25.9" width="54.3" height="54.3" rx="9.8" fill="rgba(20,40,120,0.35)" filter="url(#t4s)"/><rect x="-27.1" y="-27.1" width="54.3" height="54.3" rx="9.8" fill="url(#t4b8)" stroke="rgba(255,255,255,0.3)" stroke-width="0.6"/></g>
<g transform="translate(84.0 55.8) rotate(-35.1)"><rect x="-20.1" y="-19.7" width="41.7" height="41.7" rx="7.5" fill="rgba(20,40,120,0.35)" filter="url(#t4s)"/><rect x="-20.9" y="-20.9" width="41.7" height="41.7" rx="7.5" fill="url(#t4b9)" stroke="rgba(255,255,255,0.3)" stroke-width="0.6"/></g>
<g transform="translate(84.9 55.0) rotate(-37.8)"><rect x="-15.3" y="-14.9" width="32.1" height="32.1" rx="5.8" fill="rgba(20,40,120,0.35)" filter="url(#t4s)"/><rect x="-16.1" y="-16.1" width="32.1" height="32.1" rx="5.8" fill="url(#t4b10)" stroke="rgba(255,255,255,0.3)" stroke-width="0.6"/></g>
<g transform="translate(85.6 54.3) rotate(-40.9)"><rect x="-11.5" y="-11.2" width="24.7" height="24.7" rx="4.4" fill="rgba(20,40,120,0.35)" filter="url(#t4s)"/><rect x="-12.3" y="-12.3" width="24.7" height="24.7" rx="4.4" fill="url(#t4b11)" stroke="rgba(255,255,255,0.3)" stroke-width="0.6"/></g>
<g transform="translate(86.0 54.0) rotate(-45.0)"><rect x="-8.7" y="-8.3" width="19.0" height="19.0" rx="3.4" fill="rgba(20,40,120,0.35)" filter="url(#t4s)"/><rect x="-9.5" y="-9.5" width="19.0" height="19.0" rx="3.4" fill="url(#t4b12)" stroke="rgba(255,255,255,0.3)" stroke-width="0.6"/></g>
<rect x="0" y="0" width="72" height="108" fill="url(#t4cy)"/>
</g>
<g clip-path="url(#t4r)">
<g transform="translate(70.0 68.0) rotate(-15.0)"><rect x="-220.5" y="-220.1" width="442.7" height="442.7" rx="79.7" fill="rgba(150,20,70,0.45)" filter="url(#t4s)"/><rect x="-221.3" y="-221.3" width="442.7" height="442.7" rx="79.7" fill="url(#t4o0)" stroke="rgba(120,30,60,0.18)" stroke-width="0.6"/></g>
<g transform="translate(72.0 66.3) rotate(-17.0)"><rect x="-169.5" y="-169.1" width="340.5" height="340.5" rx="61.3" fill="rgba(150,20,70,0.45)" filter="url(#t4s)"/><rect x="-170.3" y="-170.3" width="340.5" height="340.5" rx="61.3" fill="url(#t4o1)" stroke="rgba(120,30,60,0.18)" stroke-width="0.6"/></g>
<g transform="translate(73.8 64.7) rotate(-19.1)"><rect x="-130.2" y="-129.8" width="261.9" height="261.9" rx="47.1" fill="rgba(150,20,70,0.45)" filter="url(#t4s)"/><rect x="-131.0" y="-131.0" width="261.9" height="261.9" rx="47.1" fill="url(#t4o2)" stroke="rgba(120,30,60,0.18)" stroke-width="0.6"/></g>
<g transform="translate(75.6 63.1) rotate(-21.2)"><rect x="-99.9" y="-99.5" width="201.5" height="201.5" rx="36.3" fill="rgba(150,20,70,0.45)" filter="url(#t4s)"/><rect x="-100.7" y="-100.7" width="201.5" height="201.5" rx="36.3" fill="url(#t4o3)" stroke="rgba(120,30,60,0.18)" stroke-width="0.6"/></g>
<g transform="translate(77.3 61.6) rotate(-23.3)"><rect x="-76.7" y="-76.3" width="155.0" height="155.0" rx="27.9" fill="rgba(150,20,70,0.45)" filter="url(#t4s)"/><rect x="-77.5" y="-77.5" width="155.0" height="155.0" rx="27.9" fill="url(#t4o4)" stroke="rgba(120,30,60,0.18)" stroke-width="0.6"/></g>
<g transform="translate(78.9 60.2) rotate(-25.5)"><rect x="-58.8" y="-58.4" width="119.2" height="119.2" rx="21.5" fill="rgba(150,20,70,0.45)" filter="url(#t4s)"/><rect x="-59.6" y="-59.6" width="119.2" height="119.2" rx="21.5" fill="url(#t4o5)" stroke="rgba(120,30,60,0.18)" stroke-width="0.6"/></g>
<g transform="translate(80.3 58.9) rotate(-27.8)"><rect x="-45.1" y="-44.7" width="91.7" height="91.7" rx="16.5" fill="rgba(150,20,70,0.45)" filter="url(#t4s)"/><rect x="-45.9" y="-45.9" width="91.7" height="91.7" rx="16.5" fill="url(#t4o6)" stroke="rgba(120,30,60,0.18)" stroke-width="0.6"/></g>
<g transform="translate(81.7 57.8) rotate(-30.1)"><rect x="-34.5" y="-34.1" width="70.5" height="70.5" rx="12.7" fill="rgba(150,20,70,0.45)" filter="url(#t4s)"/><rect x="-35.3" y="-35.3" width="70.5" height="70.5" rx="12.7" fill="url(#t4o7)" stroke="rgba(120,30,60,0.18)" stroke-width="0.6"/></g>
<g transform="translate(82.9 56.7) rotate(-32.5)"><rect x="-26.3" y="-25.9" width="54.3" height="54.3" rx="9.8" fill="rgba(150,20,70,0.45)" filter="url(#t4s)"/><rect x="-27.1" y="-27.1" width="54.3" height="54.3" rx="9.8" fill="url(#t4o8)" stroke="rgba(120,30,60,0.18)" stroke-width="0.6"/></g>
<g transform="translate(84.0 55.8) rotate(-35.1)"><rect x="-20.1" y="-19.7" width="41.7" height="41.7" rx="7.5" fill="rgba(150,20,70,0.45)" filter="url(#t4s)"/><rect x="-20.9" y="-20.9" width="41.7" height="41.7" rx="7.5" fill="url(#t4o9)" stroke="rgba(120,30,60,0.18)" stroke-width="0.6"/></g>
<g transform="translate(84.9 55.0) rotate(-37.8)"><rect x="-15.3" y="-14.9" width="32.1" height="32.1" rx="5.8" fill="rgba(150,20,70,0.45)" filter="url(#t4s)"/><rect x="-16.1" y="-16.1" width="32.1" height="32.1" rx="5.8" fill="url(#t4o10)" stroke="rgba(120,30,60,0.18)" stroke-width="0.6"/></g>
<g transform="translate(85.6 54.3) rotate(-40.9)"><rect x="-11.5" y="-11.2" width="24.7" height="24.7" rx="4.4" fill="rgba(150,20,70,0.45)" filter="url(#t4s)"/><rect x="-12.3" y="-12.3" width="24.7" height="24.7" rx="4.4" fill="url(#t4o11)" stroke="rgba(120,30,60,0.18)" stroke-width="0.6"/></g>
<g transform="translate(86.0 54.0) rotate(-45.0)"><rect x="-8.7" y="-8.3" width="19.0" height="19.0" rx="3.4" fill="rgba(150,20,70,0.45)" filter="url(#t4s)"/><rect x="-9.5" y="-9.5" width="19.0" height="19.0" rx="3.4" fill="url(#t4o12)" stroke="rgba(120,30,60,0.18)" stroke-width="0.6"/></g>
<rect x="72" y="60" width="72" height="48" fill="url(#t4mag)"/>
</g></svg>
  <svg class="thumb" style="left:614px;top:734px" width="144" height="108" viewBox="0 0 144 108"><defs><linearGradient id="t5a" gradientUnits="userSpaceOnUse" x1="20" y1="0" x2="50" y2="108"><stop offset="0" stop-color="#76a6ee"/><stop offset="1" stop-color="#9fc4f2"/></linearGradient><linearGradient id="t5b" gradientUnits="userSpaceOnUse" x1="30" y1="30" x2="10" y2="108"><stop offset="0" stop-color="#6aa2ee"/><stop offset="1" stop-color="#2f6ec4"/></linearGradient><linearGradient id="t5c" gradientUnits="userSpaceOnUse" x1="0" y1="0" x2="0" y2="20"><stop offset="0" stop-color="#3db4b2"/><stop offset="1" stop-color="#56a8c6"/></linearGradient><linearGradient id="t5d" gradientUnits="userSpaceOnUse" x1="0" y1="0" x2="0" y2="108"><stop offset="0" stop-color="#c44800"/><stop offset="0.65" stop-color="#cc4a02"/><stop offset="1" stop-color="#dc2e18"/></linearGradient><linearGradient id="t5e" gradientUnits="userSpaceOnUse" x1="144" y1="0" x2="100" y2="60"><stop offset="0" stop-color="#521a2e"/><stop offset="0.55" stop-color="#8c1c30"/><stop offset="1" stop-color="#a81c2c"/></linearGradient><linearGradient id="t5f" gradientUnits="userSpaceOnUse" x1="0" y1="80" x2="0" y2="108"><stop offset="0" stop-color="#ea6a00"/><stop offset="1" stop-color="#e65808"/></linearGradient></defs>
<rect x="0" y="0" width="72" height="108" fill="url(#t5a)"/>
<path d="M0 0 L0 10 L-2.0 18.0 A3.0 3.0 0 0 0 4.0 18.0 L3.0 7.0 A3.0 3.0 0 0 1 9.0 7.0 L9.0 8.0 A3.0 3.0 0 0 0 15.0 8.0 L15.0 9.0 A3.0 3.0 0 0 1 21.0 9.0 L22.0 9.0 A3.0 3.0 0 0 0 28.0 9.0 L33.0 7.0 A3.0 3.0 0 0 1 39.0 7.0 L41.0 4.0 A3.0 3.0 0 0 0 47.0 4.0 L46.0 6.0 A3.0 3.0 0 0 1 52.0 6.0 L51.0 15.0 A3.0 3.0 0 0 0 57.0 15.0 L58.0 8.0 A3.0 3.0 0 0 1 64.0 8.0 L65.0 9.0 A3.0 3.0 0 0 0 71.0 9.0 L72 8 L72 0 Z" fill="url(#t5c)"/>
<path d="M0 110 L0 62 L10.9 36.1 A3.1 3.1 0 0 1 17.1 36.1 L14.4 48.9 A3.1 3.1 0 0 0 20.6 48.9 L20.4 51.1 A3.1 3.1 0 0 1 26.6 51.1 L23.4 63.9 A3.1 3.1 0 0 0 29.6 63.9 L32.9 53.1 A3.1 3.1 0 0 1 39.1 53.1 L31.4 82.9 A3.1 3.1 0 0 0 37.6 82.9 L42.9 69.1 A3.1 3.1 0 0 1 49.1 69.1 L44.4 86.9 A3.1 3.1 0 0 0 50.6 86.9 L51.9 87.1 A3.1 3.1 0 0 1 58.1 87.1 L54.9 93.9 A3.1 3.1 0 0 0 61.1 93.9 L66.4 85.1 A3.1 3.1 0 0 1 72.6 85.1 L72 100 L72 110 Z" fill="url(#t5b)"/>
<rect x="72" y="0" width="72" height="108" fill="url(#t5d)"/>
<path d="M72 0 L72 12 L75.4 16.9 A3.1 3.1 0 0 0 81.6 16.9 L86.9 8.6 A3.1 3.1 0 0 1 93.1 8.6 L99.9 33.4 A3.1 3.1 0 0 0 106.1 33.4 L110.4 20.6 A3.1 3.1 0 0 1 116.6 20.6 L108.9 48.9 A3.1 3.1 0 0 0 115.1 48.9 L118.9 38.6 A3.1 3.1 0 0 1 125.1 38.6 L121.9 51.9 A3.1 3.1 0 0 0 128.1 51.9 L127.4 54.6 A3.1 3.1 0 0 1 133.6 54.6 L130.9 67.4 A3.1 3.1 0 0 0 137.1 67.4 L144 52 L144 0 Z" fill="url(#t5e)"/>
<path d="M77 112 L80 91" stroke="url(#t5f)" stroke-width="6" stroke-linecap="round"/>
<path d="M90 112 L96 84" stroke="url(#t5f)" stroke-width="6" stroke-linecap="round"/>
<path d="M102 112 L105 97" stroke="url(#t5f)" stroke-width="6" stroke-linecap="round"/>
<path d="M118 112 L121.5 90" stroke="url(#t5f)" stroke-width="6" stroke-linecap="round"/>
<path d="M131 112 L134.5 91" stroke="url(#t5f)" stroke-width="6" stroke-linecap="round"/></svg>
  <svg class="thumb" style="left:776px;top:734px" width="144" height="108" viewBox="0 0 144 108"><rect x="0" y="0" width="72" height="108" fill="#f7da54"/>
<path d="M0.0,3.9 L3.0,5.0 L6.0,5.9 L9.0,6.3 L12.0,6.2 L15.0,5.6 L18.0,4.6 L21.0,3.5 L24.0,2.4 L27.0,1.6 L30.0,1.4 L33.0,1.6 L36.0,2.4 L39.0,3.5 L42.0,4.6 L45.0,5.6 L48.0,6.2 L51.0,6.3 L54.0,5.9 L57.0,5.0 L60.0,3.9 L63.0,2.7 L66.0,1.8 L69.0,1.4 L72.0,1.5 L75.0,2.1 L76,110 L0,110 Z" fill="#f7d254"/>
<path d="M0.0,11.6 L3.0,12.7 L6.0,13.6 L9.0,14.0 L12.0,13.9 L15.0,13.3 L18.0,12.3 L21.0,11.2 L24.0,10.1 L27.0,9.3 L30.0,9.1 L33.0,9.3 L36.0,10.1 L39.0,11.2 L42.0,12.3 L45.0,13.3 L48.0,13.9 L51.0,14.0 L54.0,13.6 L57.0,12.7 L60.0,11.6 L63.0,10.4 L66.0,9.5 L69.0,9.1 L72.0,9.2 L75.0,9.8 L76,110 L0,110 Z" fill="#f6cb54"/>
<path d="M0.0,19.3 L3.0,20.4 L6.0,21.3 L9.0,21.8 L12.0,21.7 L15.0,21.1 L18.0,20.1 L21.0,18.9 L24.0,17.8 L27.0,17.1 L30.0,16.8 L33.0,17.1 L36.0,17.8 L39.0,18.9 L42.0,20.1 L45.0,21.1 L48.0,21.7 L51.0,21.8 L54.0,21.3 L57.0,20.4 L60.0,19.3 L63.0,18.2 L66.0,17.3 L69.0,16.8 L72.0,16.9 L75.0,17.5 L76,110 L0,110 Z" fill="#f6c354"/>
<path d="M0.0,27.0 L3.0,28.1 L6.0,29.0 L9.0,29.5 L12.0,29.4 L15.0,28.8 L18.0,27.8 L21.0,26.6 L24.0,25.5 L27.0,24.8 L30.0,24.5 L33.0,24.8 L36.0,25.5 L39.0,26.6 L42.0,27.8 L45.0,28.8 L48.0,29.4 L51.0,29.5 L54.0,29.0 L57.0,28.1 L60.0,27.0 L63.0,25.9 L66.0,25.0 L69.0,24.5 L72.0,24.6 L75.0,25.2 L76,110 L0,110 Z" fill="#f5bc54"/>
<path d="M0.0,34.7 L3.0,35.8 L6.0,36.7 L9.0,37.2 L12.0,37.1 L15.0,36.5 L18.0,35.5 L21.0,34.3 L24.0,33.2 L27.0,32.5 L30.0,32.2 L33.0,32.5 L36.0,33.2 L39.0,34.3 L42.0,35.5 L45.0,36.5 L48.0,37.1 L51.0,37.2 L54.0,36.7 L57.0,35.8 L60.0,34.7 L63.0,33.6 L66.0,32.7 L69.0,32.2 L72.0,32.3 L75.0,32.9 L76,110 L0,110 Z" fill="#f5b454"/>
<path d="M0.0,42.4 L3.0,43.6 L6.0,44.5 L9.0,44.9 L12.0,44.8 L15.0,44.2 L18.0,43.2 L21.0,42.0 L24.0,41.0 L27.0,40.2 L30.0,39.9 L33.0,40.2 L36.0,41.0 L39.0,42.0 L42.0,43.2 L45.0,44.2 L48.0,44.8 L51.0,44.9 L54.0,44.5 L57.0,43.6 L60.0,42.4 L63.0,41.3 L66.0,40.4 L69.0,40.0 L72.0,40.1 L75.0,40.7 L76,110 L0,110 Z" fill="#f5ad53"/>
<path d="M0.0,50.1 L3.0,51.3 L6.0,52.2 L9.0,52.6 L12.0,52.5 L15.0,51.9 L18.0,50.9 L21.0,49.8 L24.0,48.7 L27.0,47.9 L30.0,47.6 L33.0,47.9 L36.0,48.7 L39.0,49.8 L42.0,50.9 L45.0,51.9 L48.0,52.5 L51.0,52.6 L54.0,52.2 L57.0,51.3 L60.0,50.1 L63.0,49.0 L66.0,48.1 L69.0,47.7 L72.0,47.8 L75.0,48.4 L76,110 L0,110 Z" fill="#f5a553"/>
<path d="M0.0,57.9 L3.0,59.0 L6.0,59.9 L9.0,60.3 L12.0,60.2 L15.0,59.6 L18.0,58.6 L21.0,57.5 L24.0,56.4 L27.0,55.6 L30.0,55.4 L33.0,55.6 L36.0,56.4 L39.0,57.5 L42.0,58.6 L45.0,59.6 L48.0,60.2 L51.0,60.3 L54.0,59.9 L57.0,59.0 L60.0,57.9 L63.0,56.7 L66.0,55.8 L69.0,55.4 L72.0,55.5 L75.0,56.1 L76,110 L0,110 Z" fill="#f59e52"/>
<path d="M0.0,65.6 L3.0,66.7 L6.0,67.6 L9.0,68.0 L12.0,67.9 L15.0,67.3 L18.0,66.3 L21.0,65.2 L24.0,64.1 L27.0,63.3 L30.0,63.1 L33.0,63.3 L36.0,64.1 L39.0,65.2 L42.0,66.3 L45.0,67.3 L48.0,67.9 L51.0,68.0 L54.0,67.6 L57.0,66.7 L60.0,65.6 L63.0,64.4 L66.0,63.5 L69.0,63.1 L72.0,63.2 L75.0,63.8 L76,110 L0,110 Z" fill="#f59652"/>
<path d="M0.0,73.3 L3.0,74.4 L6.0,75.3 L9.0,75.8 L12.0,75.7 L15.0,75.1 L18.0,74.1 L21.0,72.9 L24.0,71.8 L27.0,71.1 L30.0,70.8 L33.0,71.1 L36.0,71.8 L39.0,72.9 L42.0,74.1 L45.0,75.1 L48.0,75.7 L51.0,75.8 L54.0,75.3 L57.0,74.4 L60.0,73.3 L63.0,72.2 L66.0,71.3 L69.0,70.8 L72.0,70.9 L75.0,71.5 L76,110 L0,110 Z" fill="#f58e52"/>
<path d="M0.0,81.0 L3.0,82.1 L6.0,83.0 L9.0,83.5 L12.0,83.4 L15.0,82.8 L18.0,81.8 L21.0,80.6 L24.0,79.5 L27.0,78.8 L30.0,78.5 L33.0,78.8 L36.0,79.5 L39.0,80.6 L42.0,81.8 L45.0,82.8 L48.0,83.4 L51.0,83.5 L54.0,83.0 L57.0,82.1 L60.0,81.0 L63.0,79.9 L66.0,79.0 L69.0,78.5 L72.0,78.6 L75.0,79.2 L76,110 L0,110 Z" fill="#f58551"/>
<path d="M0.0,88.7 L3.0,89.8 L6.0,90.7 L9.0,91.2 L12.0,91.1 L15.0,90.5 L18.0,89.5 L21.0,88.3 L24.0,87.2 L27.0,86.5 L30.0,86.2 L33.0,86.5 L36.0,87.2 L39.0,88.3 L42.0,89.5 L45.0,90.5 L48.0,91.1 L51.0,91.2 L54.0,90.7 L57.0,89.8 L60.0,88.7 L63.0,87.6 L66.0,86.7 L69.0,86.2 L72.0,86.3 L75.0,86.9 L76,110 L0,110 Z" fill="#f57d51"/>
<path d="M0.0,96.4 L3.0,97.6 L6.0,98.5 L9.0,98.9 L12.0,98.8 L15.0,98.2 L18.0,97.2 L21.0,96.0 L24.0,95.0 L27.0,94.2 L30.0,93.9 L33.0,94.2 L36.0,95.0 L39.0,96.0 L42.0,97.2 L45.0,98.2 L48.0,98.8 L51.0,98.9 L54.0,98.5 L57.0,97.6 L60.0,96.4 L63.0,95.3 L66.0,94.4 L69.0,94.0 L72.0,94.1 L75.0,94.7 L76,110 L0,110 Z" fill="#f57551"/>
<path d="M0.0,104.1 L3.0,105.3 L6.0,106.2 L9.0,106.6 L12.0,106.5 L15.0,105.9 L18.0,104.9 L21.0,103.8 L24.0,102.7 L27.0,101.9 L30.0,101.6 L33.0,101.9 L36.0,102.7 L39.0,103.8 L42.0,104.9 L45.0,105.9 L48.0,106.5 L51.0,106.6 L54.0,106.2 L57.0,105.3 L60.0,104.1 L63.0,103.0 L66.0,102.1 L69.0,101.7 L72.0,101.8 L75.0,102.4 L76,110 L0,110 Z" fill="#f56c50"/>
<path d="M0.0,111.9 L3.0,113.0 L6.0,113.9 L9.0,114.3 L12.0,114.2 L15.0,113.6 L18.0,112.6 L21.0,111.5 L24.0,110.4 L27.0,109.6 L30.0,109.4 L33.0,109.6 L36.0,110.4 L39.0,111.5 L42.0,112.6 L45.0,113.6 L48.0,114.2 L51.0,114.3 L54.0,113.9 L57.0,113.0 L60.0,111.9 L63.0,110.7 L66.0,109.8 L69.0,109.4 L72.0,109.5 L75.0,110.1 L76,110 L0,110 Z" fill="#f56450"/>
<rect x="72" y="0" width="72" height="108" fill="#683282"/>
<path d="M72.0,4.6 L75.0,5.8 L78.0,6.6 L81.0,6.8 L84.0,6.4 L87.0,5.4 L90.0,4.1 L93.0,2.7 L96.0,1.6 L99.0,0.9 L102.0,0.9 L105.0,1.6 L108.0,2.7 L111.0,4.1 L114.0,5.4 L117.0,6.4 L120.0,6.8 L123.0,6.6 L126.0,5.8 L129.0,4.5 L132.0,3.1 L135.0,1.9 L138.0,1.1 L141.0,0.9 L144.0,1.3 L147.0,2.3 L148,110 L72,110 Z" fill="#71307b"/>
<path d="M72.0,12.3 L75.0,13.5 L78.0,14.4 L81.0,14.6 L84.0,14.1 L87.0,13.1 L90.0,11.8 L93.0,10.4 L96.0,9.3 L99.0,8.6 L102.0,8.7 L105.0,9.3 L108.0,10.4 L111.0,11.8 L114.0,13.2 L117.0,14.1 L120.0,14.6 L123.0,14.3 L126.0,13.5 L129.0,12.2 L132.0,10.8 L135.0,9.6 L138.0,8.8 L141.0,8.6 L144.0,9.0 L147.0,10.0 L148,110 L72,110 Z" fill="#7a2e75"/>
<path d="M72.0,20.0 L75.0,21.3 L78.0,22.1 L81.0,22.3 L84.0,21.8 L87.0,20.8 L90.0,19.5 L93.0,18.1 L96.0,17.0 L99.0,16.4 L102.0,16.4 L105.0,17.0 L108.0,18.2 L111.0,19.5 L114.0,20.9 L117.0,21.9 L120.0,22.3 L123.0,22.0 L126.0,21.2 L129.0,20.0 L132.0,18.6 L135.0,17.3 L138.0,16.5 L141.0,16.3 L144.0,16.7 L147.0,17.7 L148,110 L72,110 Z" fill="#822c6e"/>
<path d="M72.0,27.7 L75.0,29.0 L78.0,29.8 L81.0,30.0 L84.0,29.5 L87.0,28.5 L90.0,27.2 L93.0,25.8 L96.0,24.7 L99.0,24.1 L102.0,24.1 L105.0,24.7 L108.0,25.9 L111.0,27.3 L114.0,28.6 L117.0,29.6 L120.0,30.0 L123.0,29.8 L126.0,28.9 L129.0,27.7 L132.0,26.3 L135.0,25.0 L138.0,24.2 L141.0,24.0 L144.0,24.5 L147.0,25.5 L148,110 L72,110 Z" fill="#8b2a67"/>
<path d="M72.0,35.4 L75.0,36.7 L78.0,37.5 L81.0,37.7 L84.0,37.3 L87.0,36.3 L90.0,34.9 L93.0,33.5 L96.0,32.4 L99.0,31.8 L102.0,31.8 L105.0,32.4 L108.0,33.6 L111.0,35.0 L114.0,36.3 L117.0,37.3 L120.0,37.7 L123.0,37.5 L126.0,36.6 L129.0,35.4 L132.0,34.0 L135.0,32.7 L138.0,31.9 L141.0,31.7 L144.0,32.2 L147.0,33.2 L148,110 L72,110 Z" fill="#942861"/>
<path d="M72.0,43.2 L75.0,44.4 L78.0,45.2 L81.0,45.4 L84.0,45.0 L87.0,44.0 L90.0,42.6 L93.0,41.3 L96.0,40.1 L99.0,39.5 L102.0,39.5 L105.0,40.2 L108.0,41.3 L111.0,42.7 L114.0,44.0 L117.0,45.0 L120.0,45.4 L123.0,45.2 L126.0,44.4 L129.0,43.1 L132.0,41.7 L135.0,40.5 L138.0,39.6 L141.0,39.4 L144.0,39.9 L147.0,40.9 L148,110 L72,110 Z" fill="#9d275a"/>
<path d="M72.0,50.9 L75.0,52.1 L78.0,52.9 L81.0,53.1 L84.0,52.7 L87.0,51.7 L90.0,50.4 L93.0,49.0 L96.0,47.8 L99.0,47.2 L102.0,47.2 L105.0,47.9 L108.0,49.0 L111.0,50.4 L114.0,51.7 L117.0,52.7 L120.0,53.1 L123.0,52.9 L126.0,52.1 L129.0,50.8 L132.0,49.4 L135.0,48.2 L138.0,47.4 L141.0,47.2 L144.0,47.6 L147.0,48.6 L148,110 L72,110 Z" fill="#a72553"/>
<path d="M72.0,58.6 L75.0,59.8 L78.0,60.6 L81.0,60.8 L84.0,60.4 L87.0,59.4 L90.0,58.1 L93.0,56.7 L96.0,55.6 L99.0,54.9 L102.0,54.9 L105.0,55.6 L108.0,56.7 L111.0,58.1 L114.0,59.4 L117.0,60.4 L120.0,60.8 L123.0,60.6 L126.0,59.8 L129.0,58.5 L132.0,57.1 L135.0,55.9 L138.0,55.1 L141.0,54.9 L144.0,55.3 L147.0,56.3 L148,110 L72,110 Z" fill="#b0234d"/>
<path d="M72.0,66.3 L75.0,67.5 L78.0,68.4 L81.0,68.6 L84.0,68.1 L87.0,67.1 L90.0,65.8 L93.0,64.4 L96.0,63.3 L99.0,62.6 L102.0,62.7 L105.0,63.3 L108.0,64.4 L111.0,65.8 L114.0,67.2 L117.0,68.1 L120.0,68.6 L123.0,68.3 L126.0,67.5 L129.0,66.2 L132.0,64.8 L135.0,63.6 L138.0,62.8 L141.0,62.6 L144.0,63.0 L147.0,64.0 L148,110 L72,110 Z" fill="#ba2146"/>
<path d="M72.0,74.0 L75.0,75.3 L78.0,76.1 L81.0,76.3 L84.0,75.8 L87.0,74.8 L90.0,73.5 L93.0,72.1 L96.0,71.0 L99.0,70.4 L102.0,70.4 L105.0,71.0 L108.0,72.2 L111.0,73.5 L114.0,74.9 L117.0,75.9 L120.0,76.3 L123.0,76.0 L126.0,75.2 L129.0,74.0 L132.0,72.6 L135.0,71.3 L138.0,70.5 L141.0,70.3 L144.0,70.7 L147.0,71.7 L148,110 L72,110 Z" fill="#c31f3f"/>
<path d="M72.0,81.7 L75.0,83.0 L78.0,83.8 L81.0,84.0 L84.0,83.5 L87.0,82.5 L90.0,81.2 L93.0,79.8 L96.0,78.7 L99.0,78.1 L102.0,78.1 L105.0,78.7 L108.0,79.9 L111.0,81.3 L114.0,82.6 L117.0,83.6 L120.0,84.0 L123.0,83.8 L126.0,82.9 L129.0,81.7 L132.0,80.3 L135.0,79.0 L138.0,78.2 L141.0,78.0 L144.0,78.5 L147.0,79.5 L148,110 L72,110 Z" fill="#cb1e39"/>
<path d="M72.0,89.4 L75.0,90.7 L78.0,91.5 L81.0,91.7 L84.0,91.3 L87.0,90.3 L90.0,88.9 L93.0,87.5 L96.0,86.4 L99.0,85.8 L102.0,85.8 L105.0,86.4 L108.0,87.6 L111.0,89.0 L114.0,90.3 L117.0,91.3 L120.0,91.7 L123.0,91.5 L126.0,90.6 L129.0,89.4 L132.0,88.0 L135.0,86.7 L138.0,85.9 L141.0,85.7 L144.0,86.2 L147.0,87.2 L148,110 L72,110 Z" fill="#d11d33"/>
<path d="M72.0,97.2 L75.0,98.4 L78.0,99.2 L81.0,99.4 L84.0,99.0 L87.0,98.0 L90.0,96.6 L93.0,95.3 L96.0,94.1 L99.0,93.5 L102.0,93.5 L105.0,94.2 L108.0,95.3 L111.0,96.7 L114.0,98.0 L117.0,99.0 L120.0,99.4 L123.0,99.2 L126.0,98.4 L129.0,97.1 L132.0,95.7 L135.0,94.5 L138.0,93.6 L141.0,93.4 L144.0,93.9 L147.0,94.9 L148,110 L72,110 Z" fill="#d61c2e"/>
<path d="M72.0,104.9 L75.0,106.1 L78.0,106.9 L81.0,107.1 L84.0,106.7 L87.0,105.7 L90.0,104.4 L93.0,103.0 L96.0,101.8 L99.0,101.2 L102.0,101.2 L105.0,101.9 L108.0,103.0 L111.0,104.4 L114.0,105.7 L117.0,106.7 L120.0,107.1 L123.0,106.9 L126.0,106.1 L129.0,104.8 L132.0,103.4 L135.0,102.2 L138.0,101.4 L141.0,101.2 L144.0,101.6 L147.0,102.6 L148,110 L72,110 Z" fill="#dc1b28"/>
<path d="M72.0,112.6 L75.0,113.8 L78.0,114.6 L81.0,114.8 L84.0,114.4 L87.0,113.4 L90.0,112.1 L93.0,110.7 L96.0,109.6 L99.0,108.9 L102.0,108.9 L105.0,109.6 L108.0,110.7 L111.0,112.1 L114.0,113.4 L117.0,114.4 L120.0,114.8 L123.0,114.6 L126.0,113.8 L129.0,112.5 L132.0,111.1 L135.0,109.9 L138.0,109.1 L141.0,108.9 L144.0,109.3 L147.0,110.3 L148,110 L72,110 Z" fill="#e21a22"/></svg>
  <!--/THUMBS-->
</div>
<div class="hi" style="will-change:transform"></div>
</body></html>
